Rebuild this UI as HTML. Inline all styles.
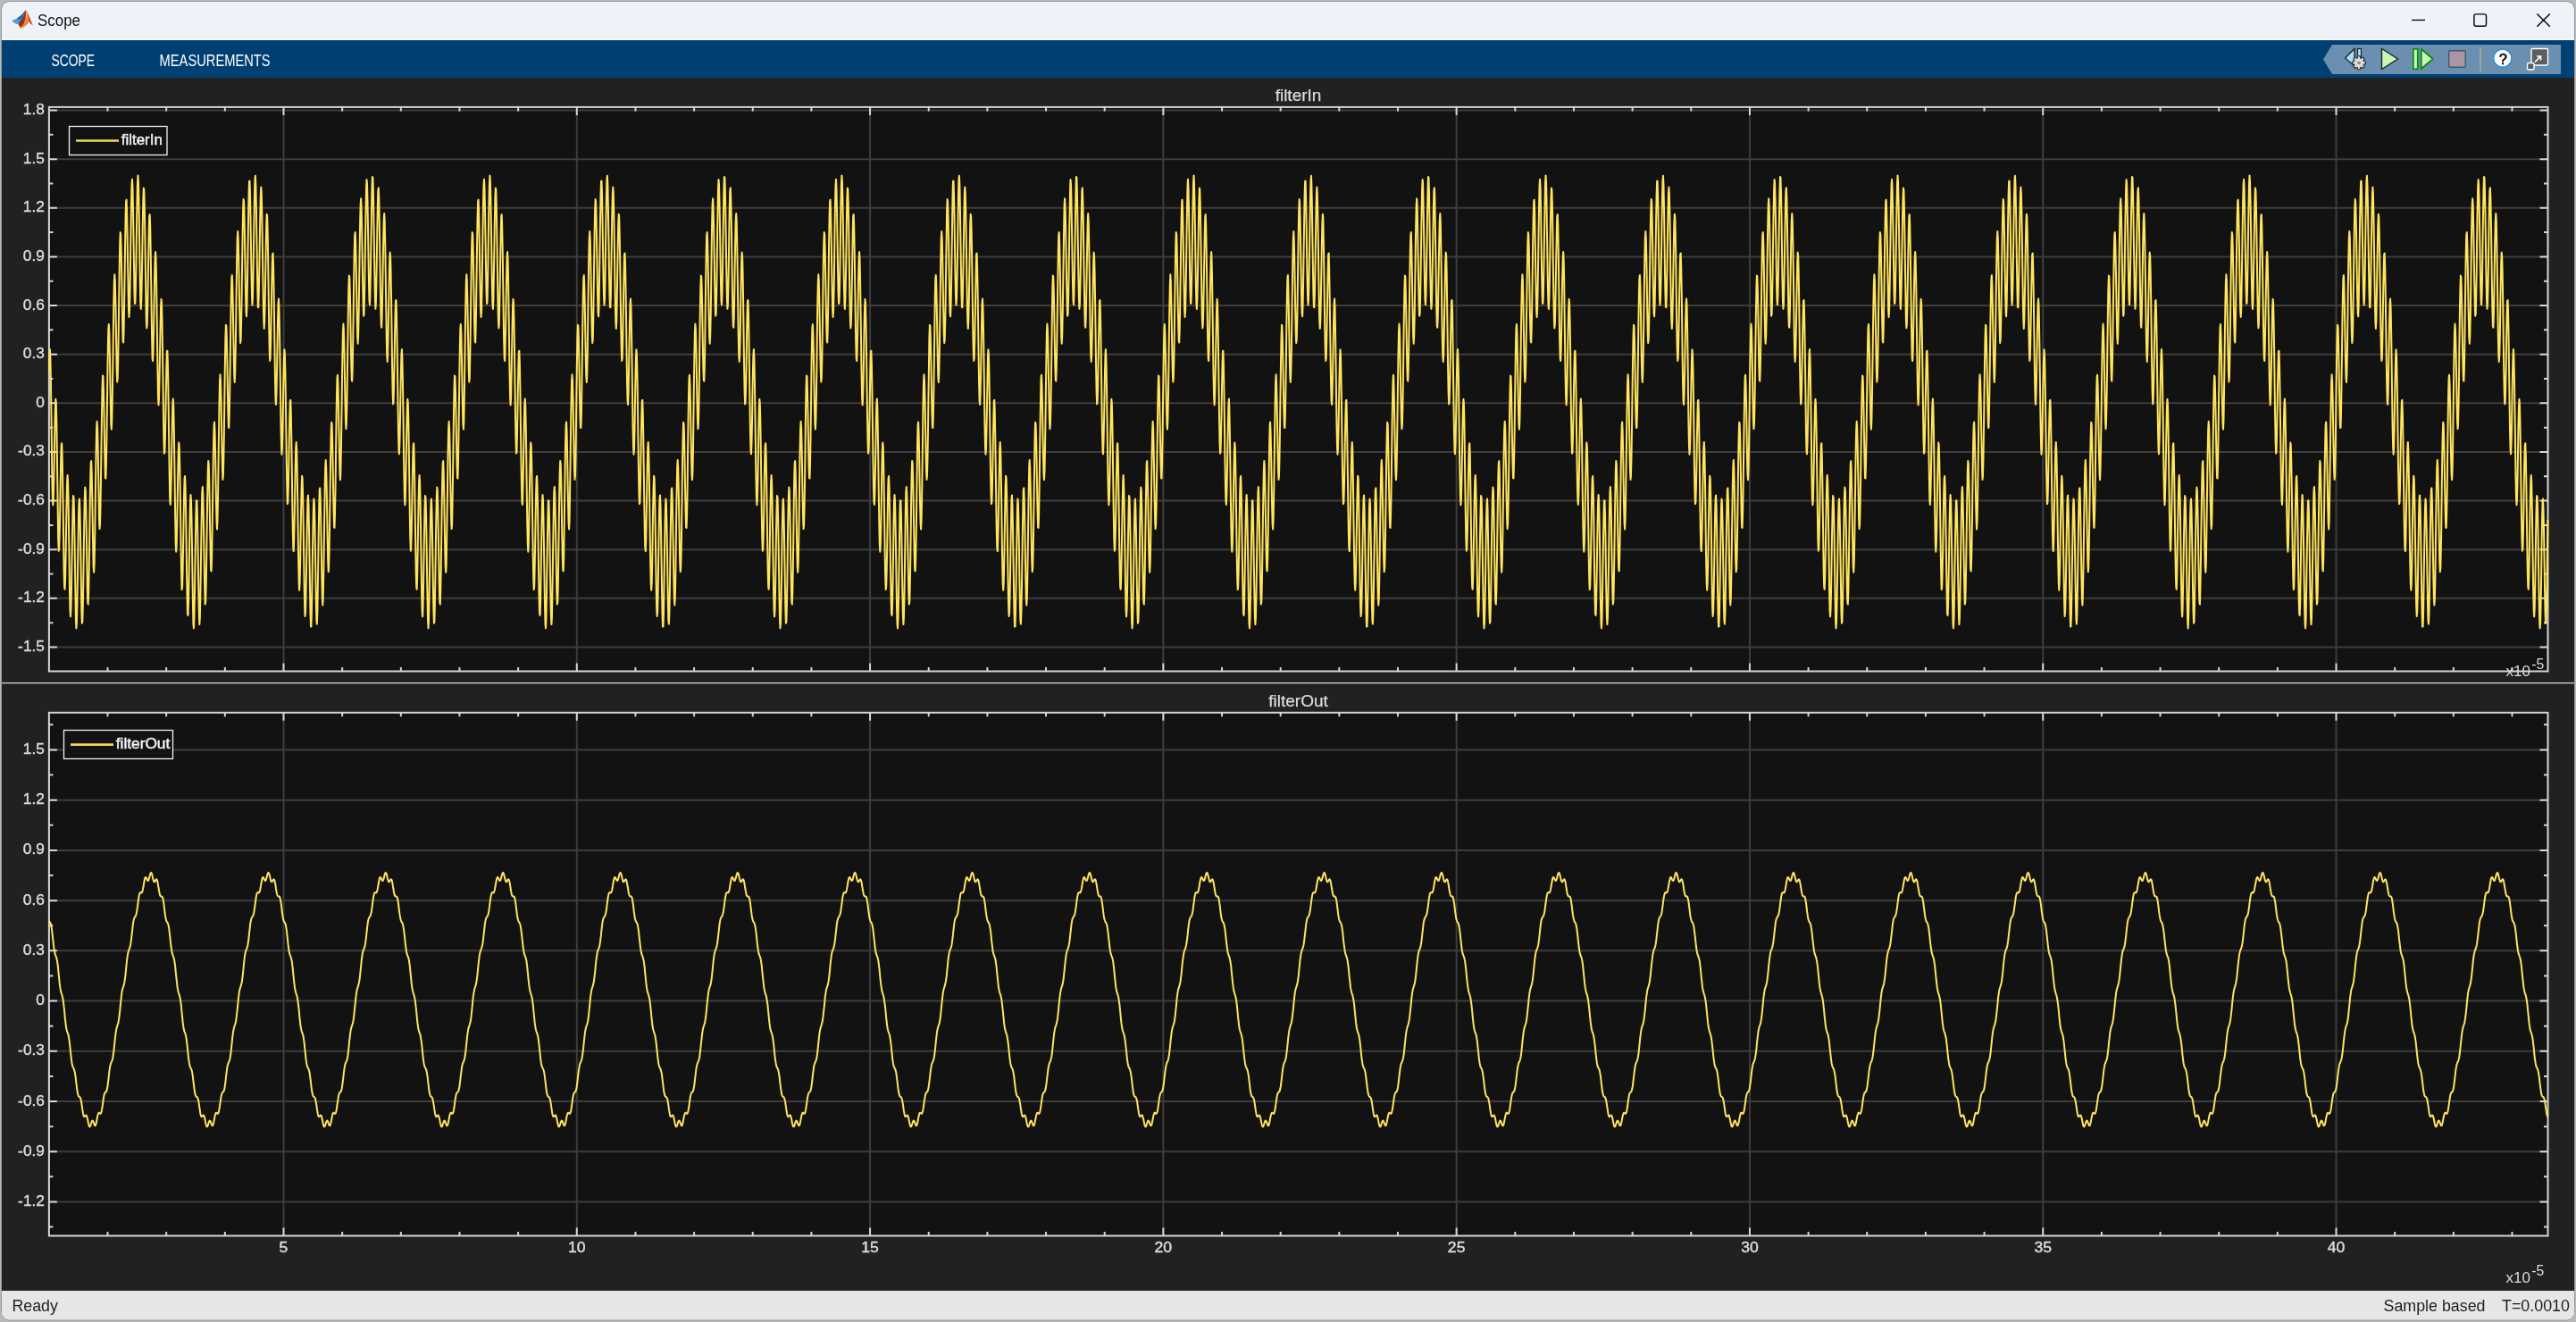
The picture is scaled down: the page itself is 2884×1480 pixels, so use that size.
<!DOCTYPE html>
<html><head><meta charset="utf-8"><title>Scope</title>
<style>
html,body{margin:0;padding:0;background:#b9b9b9;width:2884px;height:1480px;overflow:hidden}
svg{display:block}
text{font-family:"Liberation Sans",sans-serif}
</style></head><body>
<svg width="2884" height="1480" viewBox="0 0 2884 1480" style="will-change:transform">

<rect x="0" y="0" width="2884" height="1480" fill="#b9b9b9"/>
<rect x="1.5" y="1.5" width="2881" height="1476.5" rx="9" fill="#eef2f9" stroke="#9a9a9a" stroke-width="1"/>
<rect x="2" y="44" width="2880" height="1" fill="#fbfcfe"/>
<rect x="2" y="45" width="2880" height="42" fill="#003f73"/>
<rect x="2" y="87" width="2880" height="1358" fill="#212121"/>
<path d="M2 1445 H2882 V1468 Q2882 1477 2873 1477 H11 Q2 1477 2 1468 Z" fill="#e6e6e6"/>
<text x="42" y="29" font-size="17.5" fill="#111" textLength="48" lengthAdjust="spacingAndGlyphs">Scope</text>
<g stroke="none">
<polygon points="13,23.5 19,20.5 24.5,16.5 27.5,12.8 26,19 21.5,24.5 20.5,27.2 17.5,26.5" fill="#4aa0dc"/>
<polygon points="19,20.5 24.5,16.5 27.5,12.8 26,19 22,22.5" fill="#1f6db0"/>
<polygon points="27.5,12.8 29.3,11.2 28.8,20.5 27,26 23.6,32.6 21,28 20.5,27.2 21.5,24.5 26,19" fill="#9a2e1a"/>
<polygon points="29.3,11.2 31,17 32.5,24.5 30.5,27 26.5,30.5 23.6,32.6 27,26 28.8,20.5" fill="#e8843a"/>
<polygon points="29.3,11.2 33,19 36.7,28.5 34,26.5 32.5,24.5 31,17" fill="#d44a22"/>
<polygon points="28.9,13.5 29.9,13.5 30.2,20.5 28.8,20.5" fill="#f0d24a"/>
<polygon points="22.8,30.2 26.5,29.3 23.6,32.8" fill="#f0d24a"/>
</g>
<line x1="2700" y1="22.5" x2="2715" y2="22.5" stroke="#000" stroke-width="1.3"/>
<rect x="2769.9" y="15.9" width="13.6" height="13.4" rx="2" fill="none" stroke="#000" stroke-width="1.4"/>
<path d="M2840.4 15.4 L2854.8 29.8 M2854.8 15.4 L2840.4 29.8" stroke="#000" stroke-width="1.4"/>
<text x="57.5" y="74.1" font-size="17.6" fill="#ffffff" textLength="48.5" lengthAdjust="spacingAndGlyphs">SCOPE</text>
<text x="178.6" y="74.1" font-size="17.6" fill="#ffffff" textLength="124" lengthAdjust="spacingAndGlyphs">MEASUREMENTS</text>
<polygon points="2601,66.5 2611,50 2867,50 2867,83 2611,83" fill="#6a8fb1"/>
<g stroke="#222" stroke-width="1.2">
<polygon points="2636,54.5 2636,66.5 2626,65" fill="#a8dcf8" stroke-linejoin="round"/>
<polygon points="2625.5,65 2636,54.5 2636,74" fill="#a8dcf8"/>
<rect x="2639.5" y="54.5" width="4" height="10" fill="#a8dcf8"/>
</g>
<g transform="translate(2641,70.3)">
<path d="M5.35 -1.65 L7.49 -1.29 L7.49 1.29 L5.35 1.65 L4.95 2.61 L6.21 4.39 L4.39 6.21 L2.61 4.95 L1.65 5.35 L1.29 7.49 L-1.29 7.49 L-1.65 5.35 L-2.61 4.95 L-4.39 6.21 L-6.21 4.39 L-4.95 2.61 L-5.35 1.65 L-7.49 1.29 L-7.49 -1.29 L-5.35 -1.65 L-4.95 -2.61 L-6.21 -4.39 L-4.39 -6.21 L-2.61 -4.95 L-1.65 -5.35 L-1.29 -7.49 L1.29 -7.49 L1.65 -5.35 L2.61 -4.95 L4.39 -6.21 L6.21 -4.39 L4.95 -2.61 Z" fill="#dedede" stroke="#2a2a2a" stroke-width="1.1" stroke-linejoin="round"/>
<circle r="1.9" fill="#8c8c8c"/>
</g>
<polygon points="2666.5,54.5 2684.5,66 2666.5,77.5" fill="#c8f7b6" stroke="#222" stroke-width="1.4" stroke-linejoin="miter"/>
<rect x="2701.9" y="54.9" width="4.8" height="22.4" fill="#d4fcc4" stroke="#048c04" stroke-width="1.7"/>
<polygon points="2710.8,55 2723.8,66 2710.8,77" fill="#c8f7b6" stroke="#048c04" stroke-width="1.7"/>
<rect x="2741.7" y="56.7" width="18.6" height="18.6" rx="1.2" fill="#ab95a5" stroke="#3f5a6b" stroke-width="1.4"/>
<line x1="2777" y1="53.5" x2="2777" y2="80" stroke="#b0a8a0" stroke-width="1.5"/>
<circle cx="2801.8" cy="65.2" r="10" fill="#fff" stroke="#1c8be0" stroke-width="1.2"/>
<text x="2802.3" y="71.6" font-size="16.5" fill="#000" stroke="#000" stroke-width="0.5" text-anchor="middle">?</text>
<rect x="2834" y="54.5" width="18.5" height="18.5" rx="1.5" fill="#5e5e5e" stroke="#fff" stroke-width="1.4"/>
<rect x="2829.5" y="70.5" width="7.5" height="7.5" rx="1.5" fill="#5e5e5e" stroke="#fff" stroke-width="1.4"/>
<path d="M2838 69.5 L2844.5 63 M2840 63 H2844.5 V67.5" stroke="#fff" stroke-width="1.7" fill="none"/>
<rect x="2" y="764" width="2880" height="1.3" fill="#d4d4d4"/>
<rect x="54.9" y="119.9" width="2797.60" height="631.60" fill="#121212"/>
<line x1="54.9" y1="123.50" x2="2852.5" y2="123.50" stroke="#3d3d3d" stroke-width="2"/>
<line x1="54.9" y1="178.14" x2="2852.5" y2="178.14" stroke="#3d3d3d" stroke-width="2"/>
<line x1="54.9" y1="232.77" x2="2852.5" y2="232.77" stroke="#3d3d3d" stroke-width="2"/>
<line x1="54.9" y1="287.41" x2="2852.5" y2="287.41" stroke="#3d3d3d" stroke-width="2"/>
<line x1="54.9" y1="342.04" x2="2852.5" y2="342.04" stroke="#3d3d3d" stroke-width="2"/>
<line x1="54.9" y1="396.68" x2="2852.5" y2="396.68" stroke="#3d3d3d" stroke-width="2"/>
<line x1="54.9" y1="451.32" x2="2852.5" y2="451.32" stroke="#3d3d3d" stroke-width="2"/>
<line x1="54.9" y1="505.95" x2="2852.5" y2="505.95" stroke="#3d3d3d" stroke-width="2"/>
<line x1="54.9" y1="560.59" x2="2852.5" y2="560.59" stroke="#3d3d3d" stroke-width="2"/>
<line x1="54.9" y1="615.22" x2="2852.5" y2="615.22" stroke="#3d3d3d" stroke-width="2"/>
<line x1="54.9" y1="669.86" x2="2852.5" y2="669.86" stroke="#3d3d3d" stroke-width="2"/>
<line x1="54.9" y1="724.50" x2="2852.5" y2="724.50" stroke="#3d3d3d" stroke-width="2"/>
<line x1="317.49" y1="119.9" x2="317.49" y2="751.5" stroke="#3d3d3d" stroke-width="2"/>
<line x1="645.78" y1="119.9" x2="645.78" y2="751.5" stroke="#3d3d3d" stroke-width="2"/>
<line x1="974.07" y1="119.9" x2="974.07" y2="751.5" stroke="#3d3d3d" stroke-width="2"/>
<line x1="1302.36" y1="119.9" x2="1302.36" y2="751.5" stroke="#3d3d3d" stroke-width="2"/>
<line x1="1630.65" y1="119.9" x2="1630.65" y2="751.5" stroke="#3d3d3d" stroke-width="2"/>
<line x1="1958.94" y1="119.9" x2="1958.94" y2="751.5" stroke="#3d3d3d" stroke-width="2"/>
<line x1="2287.23" y1="119.9" x2="2287.23" y2="751.5" stroke="#3d3d3d" stroke-width="2"/>
<line x1="2615.52" y1="119.9" x2="2615.52" y2="751.5" stroke="#3d3d3d" stroke-width="2"/>
<rect x="54.9" y="119.9" width="2797.60" height="631.60" fill="none" stroke="#d6d6d6" stroke-width="2"/>
<path d="M54.9 123.50h9M2852.5 123.50h-9M54.9 150.82h4.5M2852.5 150.82h-4.5M54.9 178.14h9M2852.5 178.14h-9M54.9 205.45h4.5M2852.5 205.45h-4.5M54.9 232.77h9M2852.5 232.77h-9M54.9 260.09h4.5M2852.5 260.09h-4.5M54.9 287.41h9M2852.5 287.41h-9M54.9 314.73h4.5M2852.5 314.73h-4.5M54.9 342.04h9M2852.5 342.04h-9M54.9 369.36h4.5M2852.5 369.36h-4.5M54.9 396.68h9M2852.5 396.68h-9M54.9 424.00h4.5M2852.5 424.00h-4.5M54.9 451.32h9M2852.5 451.32h-9M54.9 478.63h4.5M2852.5 478.63h-4.5M54.9 505.95h9M2852.5 505.95h-9M54.9 533.27h4.5M2852.5 533.27h-4.5M54.9 560.59h9M2852.5 560.59h-9M54.9 587.91h4.5M2852.5 587.91h-4.5M54.9 615.22h9M2852.5 615.22h-9M54.9 642.54h4.5M2852.5 642.54h-4.5M54.9 669.86h9M2852.5 669.86h-9M54.9 697.18h4.5M2852.5 697.18h-4.5M54.9 724.50h9M2852.5 724.50h-9M120.52 119.9v4.5M120.52 751.5v-4.5M186.17 119.9v4.5M186.17 751.5v-4.5M251.83 119.9v4.5M251.83 751.5v-4.5M317.49 119.9v9M317.49 751.5v-9M383.15 119.9v4.5M383.15 751.5v-4.5M448.81 119.9v4.5M448.81 751.5v-4.5M514.46 119.9v4.5M514.46 751.5v-4.5M580.12 119.9v4.5M580.12 751.5v-4.5M645.78 119.9v9M645.78 751.5v-9M711.44 119.9v4.5M711.44 751.5v-4.5M777.10 119.9v4.5M777.10 751.5v-4.5M842.75 119.9v4.5M842.75 751.5v-4.5M908.41 119.9v4.5M908.41 751.5v-4.5M974.07 119.9v9M974.07 751.5v-9M1039.73 119.9v4.5M1039.73 751.5v-4.5M1105.39 119.9v4.5M1105.39 751.5v-4.5M1171.04 119.9v4.5M1171.04 751.5v-4.5M1236.70 119.9v4.5M1236.70 751.5v-4.5M1302.36 119.9v9M1302.36 751.5v-9M1368.02 119.9v4.5M1368.02 751.5v-4.5M1433.68 119.9v4.5M1433.68 751.5v-4.5M1499.33 119.9v4.5M1499.33 751.5v-4.5M1564.99 119.9v4.5M1564.99 751.5v-4.5M1630.65 119.9v9M1630.65 751.5v-9M1696.31 119.9v4.5M1696.31 751.5v-4.5M1761.97 119.9v4.5M1761.97 751.5v-4.5M1827.62 119.9v4.5M1827.62 751.5v-4.5M1893.28 119.9v4.5M1893.28 751.5v-4.5M1958.94 119.9v9M1958.94 751.5v-9M2024.60 119.9v4.5M2024.60 751.5v-4.5M2090.26 119.9v4.5M2090.26 751.5v-4.5M2155.91 119.9v4.5M2155.91 751.5v-4.5M2221.57 119.9v4.5M2221.57 751.5v-4.5M2287.23 119.9v9M2287.23 751.5v-9M2352.89 119.9v4.5M2352.89 751.5v-4.5M2418.55 119.9v4.5M2418.55 751.5v-4.5M2484.20 119.9v4.5M2484.20 751.5v-4.5M2549.86 119.9v4.5M2549.86 751.5v-4.5M2615.52 119.9v9M2615.52 751.5v-9M2681.18 119.9v4.5M2681.18 751.5v-4.5M2746.84 119.9v4.5M2746.84 751.5v-4.5M2812.49 119.9v4.5M2812.49 751.5v-4.5" stroke="#d6d6d6" stroke-width="2" fill="none"/>
<text x="49.9" y="128.00" font-size="16" fill="#dcdcdc" stroke="#dcdcdc" stroke-width="0.4" text-anchor="end" textLength="24.02" lengthAdjust="spacingAndGlyphs">1.8</text>
<text x="49.9" y="182.64" font-size="16" fill="#dcdcdc" stroke="#dcdcdc" stroke-width="0.4" text-anchor="end" textLength="24.02" lengthAdjust="spacingAndGlyphs">1.5</text>
<text x="49.9" y="237.27" font-size="16" fill="#dcdcdc" stroke="#dcdcdc" stroke-width="0.4" text-anchor="end" textLength="24.02" lengthAdjust="spacingAndGlyphs">1.2</text>
<text x="49.9" y="291.91" font-size="16" fill="#dcdcdc" stroke="#dcdcdc" stroke-width="0.4" text-anchor="end" textLength="24.02" lengthAdjust="spacingAndGlyphs">0.9</text>
<text x="49.9" y="346.54" font-size="16" fill="#dcdcdc" stroke="#dcdcdc" stroke-width="0.4" text-anchor="end" textLength="24.02" lengthAdjust="spacingAndGlyphs">0.6</text>
<text x="49.9" y="401.18" font-size="16" fill="#dcdcdc" stroke="#dcdcdc" stroke-width="0.4" text-anchor="end" textLength="24.02" lengthAdjust="spacingAndGlyphs">0.3</text>
<text x="49.9" y="455.82" font-size="16" fill="#dcdcdc" stroke="#dcdcdc" stroke-width="0.4" text-anchor="end" textLength="9.61" lengthAdjust="spacingAndGlyphs">0</text>
<text x="49.9" y="510.45" font-size="16" fill="#dcdcdc" stroke="#dcdcdc" stroke-width="0.4" text-anchor="end" textLength="29.77" lengthAdjust="spacingAndGlyphs">-0.3</text>
<text x="49.9" y="565.09" font-size="16" fill="#dcdcdc" stroke="#dcdcdc" stroke-width="0.4" text-anchor="end" textLength="29.77" lengthAdjust="spacingAndGlyphs">-0.6</text>
<text x="49.9" y="619.72" font-size="16" fill="#dcdcdc" stroke="#dcdcdc" stroke-width="0.4" text-anchor="end" textLength="29.77" lengthAdjust="spacingAndGlyphs">-0.9</text>
<text x="49.9" y="674.36" font-size="16" fill="#dcdcdc" stroke="#dcdcdc" stroke-width="0.4" text-anchor="end" textLength="29.77" lengthAdjust="spacingAndGlyphs">-1.2</text>
<text x="49.9" y="729.00" font-size="16" fill="#dcdcdc" stroke="#dcdcdc" stroke-width="0.4" text-anchor="end" textLength="29.77" lengthAdjust="spacingAndGlyphs">-1.5</text>
<text x="1453.5" y="113.3" font-size="19" fill="#dcdcdc" stroke="#dcdcdc" stroke-width="0.25" text-anchor="middle">filterIn</text>
<text x="2805.5" y="756.5" font-size="16.5" fill="#dcdcdc" textLength="27.5" lengthAdjust="spacingAndGlyphs">x10</text>
<text x="2834.2" y="748.9" font-size="16" fill="#dcdcdc" textLength="14" lengthAdjust="spacingAndGlyphs">-5</text>
<rect x="54.9" y="797.8" width="2797.60" height="585.70" fill="#121212"/>
<line x1="54.9" y1="839.47" x2="2852.5" y2="839.47" stroke="#3d3d3d" stroke-width="2"/>
<line x1="54.9" y1="895.69" x2="2852.5" y2="895.69" stroke="#3d3d3d" stroke-width="2"/>
<line x1="54.9" y1="951.92" x2="2852.5" y2="951.92" stroke="#3d3d3d" stroke-width="2"/>
<line x1="54.9" y1="1008.14" x2="2852.5" y2="1008.14" stroke="#3d3d3d" stroke-width="2"/>
<line x1="54.9" y1="1064.36" x2="2852.5" y2="1064.36" stroke="#3d3d3d" stroke-width="2"/>
<line x1="54.9" y1="1120.59" x2="2852.5" y2="1120.59" stroke="#3d3d3d" stroke-width="2"/>
<line x1="54.9" y1="1176.81" x2="2852.5" y2="1176.81" stroke="#3d3d3d" stroke-width="2"/>
<line x1="54.9" y1="1233.03" x2="2852.5" y2="1233.03" stroke="#3d3d3d" stroke-width="2"/>
<line x1="54.9" y1="1289.25" x2="2852.5" y2="1289.25" stroke="#3d3d3d" stroke-width="2"/>
<line x1="54.9" y1="1345.48" x2="2852.5" y2="1345.48" stroke="#3d3d3d" stroke-width="2"/>
<line x1="317.49" y1="797.8" x2="317.49" y2="1383.5" stroke="#3d3d3d" stroke-width="2"/>
<line x1="645.78" y1="797.8" x2="645.78" y2="1383.5" stroke="#3d3d3d" stroke-width="2"/>
<line x1="974.07" y1="797.8" x2="974.07" y2="1383.5" stroke="#3d3d3d" stroke-width="2"/>
<line x1="1302.36" y1="797.8" x2="1302.36" y2="1383.5" stroke="#3d3d3d" stroke-width="2"/>
<line x1="1630.65" y1="797.8" x2="1630.65" y2="1383.5" stroke="#3d3d3d" stroke-width="2"/>
<line x1="1958.94" y1="797.8" x2="1958.94" y2="1383.5" stroke="#3d3d3d" stroke-width="2"/>
<line x1="2287.23" y1="797.8" x2="2287.23" y2="1383.5" stroke="#3d3d3d" stroke-width="2"/>
<line x1="2615.52" y1="797.8" x2="2615.52" y2="1383.5" stroke="#3d3d3d" stroke-width="2"/>
<rect x="54.9" y="797.8" width="2797.60" height="585.70" fill="none" stroke="#d6d6d6" stroke-width="2"/>
<path d="M54.9 811.36h4.5M2852.5 811.36h-4.5M54.9 839.47h9M2852.5 839.47h-9M54.9 867.58h4.5M2852.5 867.58h-4.5M54.9 895.69h9M2852.5 895.69h-9M54.9 923.80h4.5M2852.5 923.80h-4.5M54.9 951.92h9M2852.5 951.92h-9M54.9 980.03h4.5M2852.5 980.03h-4.5M54.9 1008.14h9M2852.5 1008.14h-9M54.9 1036.25h4.5M2852.5 1036.25h-4.5M54.9 1064.36h9M2852.5 1064.36h-9M54.9 1092.47h4.5M2852.5 1092.47h-4.5M54.9 1120.59h9M2852.5 1120.59h-9M54.9 1148.70h4.5M2852.5 1148.70h-4.5M54.9 1176.81h9M2852.5 1176.81h-9M54.9 1204.92h4.5M2852.5 1204.92h-4.5M54.9 1233.03h9M2852.5 1233.03h-9M54.9 1261.14h4.5M2852.5 1261.14h-4.5M54.9 1289.25h9M2852.5 1289.25h-9M54.9 1317.37h4.5M2852.5 1317.37h-4.5M54.9 1345.48h9M2852.5 1345.48h-9M54.9 1373.59h4.5M2852.5 1373.59h-4.5M120.52 797.8v4.5M120.52 1383.5v-4.5M186.17 797.8v4.5M186.17 1383.5v-4.5M251.83 797.8v4.5M251.83 1383.5v-4.5M317.49 797.8v9M317.49 1383.5v-9M383.15 797.8v4.5M383.15 1383.5v-4.5M448.81 797.8v4.5M448.81 1383.5v-4.5M514.46 797.8v4.5M514.46 1383.5v-4.5M580.12 797.8v4.5M580.12 1383.5v-4.5M645.78 797.8v9M645.78 1383.5v-9M711.44 797.8v4.5M711.44 1383.5v-4.5M777.10 797.8v4.5M777.10 1383.5v-4.5M842.75 797.8v4.5M842.75 1383.5v-4.5M908.41 797.8v4.5M908.41 1383.5v-4.5M974.07 797.8v9M974.07 1383.5v-9M1039.73 797.8v4.5M1039.73 1383.5v-4.5M1105.39 797.8v4.5M1105.39 1383.5v-4.5M1171.04 797.8v4.5M1171.04 1383.5v-4.5M1236.70 797.8v4.5M1236.70 1383.5v-4.5M1302.36 797.8v9M1302.36 1383.5v-9M1368.02 797.8v4.5M1368.02 1383.5v-4.5M1433.68 797.8v4.5M1433.68 1383.5v-4.5M1499.33 797.8v4.5M1499.33 1383.5v-4.5M1564.99 797.8v4.5M1564.99 1383.5v-4.5M1630.65 797.8v9M1630.65 1383.5v-9M1696.31 797.8v4.5M1696.31 1383.5v-4.5M1761.97 797.8v4.5M1761.97 1383.5v-4.5M1827.62 797.8v4.5M1827.62 1383.5v-4.5M1893.28 797.8v4.5M1893.28 1383.5v-4.5M1958.94 797.8v9M1958.94 1383.5v-9M2024.60 797.8v4.5M2024.60 1383.5v-4.5M2090.26 797.8v4.5M2090.26 1383.5v-4.5M2155.91 797.8v4.5M2155.91 1383.5v-4.5M2221.57 797.8v4.5M2221.57 1383.5v-4.5M2287.23 797.8v9M2287.23 1383.5v-9M2352.89 797.8v4.5M2352.89 1383.5v-4.5M2418.55 797.8v4.5M2418.55 1383.5v-4.5M2484.20 797.8v4.5M2484.20 1383.5v-4.5M2549.86 797.8v4.5M2549.86 1383.5v-4.5M2615.52 797.8v9M2615.52 1383.5v-9M2681.18 797.8v4.5M2681.18 1383.5v-4.5M2746.84 797.8v4.5M2746.84 1383.5v-4.5M2812.49 797.8v4.5M2812.49 1383.5v-4.5" stroke="#d6d6d6" stroke-width="2" fill="none"/>
<text x="49.9" y="843.97" font-size="16" fill="#dcdcdc" stroke="#dcdcdc" stroke-width="0.4" text-anchor="end" textLength="24.02" lengthAdjust="spacingAndGlyphs">1.5</text>
<text x="49.9" y="900.19" font-size="16" fill="#dcdcdc" stroke="#dcdcdc" stroke-width="0.4" text-anchor="end" textLength="24.02" lengthAdjust="spacingAndGlyphs">1.2</text>
<text x="49.9" y="956.42" font-size="16" fill="#dcdcdc" stroke="#dcdcdc" stroke-width="0.4" text-anchor="end" textLength="24.02" lengthAdjust="spacingAndGlyphs">0.9</text>
<text x="49.9" y="1012.64" font-size="16" fill="#dcdcdc" stroke="#dcdcdc" stroke-width="0.4" text-anchor="end" textLength="24.02" lengthAdjust="spacingAndGlyphs">0.6</text>
<text x="49.9" y="1068.86" font-size="16" fill="#dcdcdc" stroke="#dcdcdc" stroke-width="0.4" text-anchor="end" textLength="24.02" lengthAdjust="spacingAndGlyphs">0.3</text>
<text x="49.9" y="1125.09" font-size="16" fill="#dcdcdc" stroke="#dcdcdc" stroke-width="0.4" text-anchor="end" textLength="9.61" lengthAdjust="spacingAndGlyphs">0</text>
<text x="49.9" y="1181.31" font-size="16" fill="#dcdcdc" stroke="#dcdcdc" stroke-width="0.4" text-anchor="end" textLength="29.77" lengthAdjust="spacingAndGlyphs">-0.3</text>
<text x="49.9" y="1237.53" font-size="16" fill="#dcdcdc" stroke="#dcdcdc" stroke-width="0.4" text-anchor="end" textLength="29.77" lengthAdjust="spacingAndGlyphs">-0.6</text>
<text x="49.9" y="1293.75" font-size="16" fill="#dcdcdc" stroke="#dcdcdc" stroke-width="0.4" text-anchor="end" textLength="29.77" lengthAdjust="spacingAndGlyphs">-0.9</text>
<text x="49.9" y="1349.98" font-size="16" fill="#dcdcdc" stroke="#dcdcdc" stroke-width="0.4" text-anchor="end" textLength="29.77" lengthAdjust="spacingAndGlyphs">-1.2</text>
<text x="1453.5" y="791" font-size="19" fill="#dcdcdc" stroke="#dcdcdc" stroke-width="0.25" text-anchor="middle">filterOut</text>
<text x="317.49" y="1402" font-size="16" fill="#dcdcdc" stroke="#dcdcdc" stroke-width="0.4" text-anchor="middle" textLength="9.79" lengthAdjust="spacingAndGlyphs">5</text>
<text x="645.78" y="1402" font-size="16" fill="#dcdcdc" stroke="#dcdcdc" stroke-width="0.4" text-anchor="middle" textLength="19.57" lengthAdjust="spacingAndGlyphs">10</text>
<text x="974.07" y="1402" font-size="16" fill="#dcdcdc" stroke="#dcdcdc" stroke-width="0.4" text-anchor="middle" textLength="19.57" lengthAdjust="spacingAndGlyphs">15</text>
<text x="1302.36" y="1402" font-size="16" fill="#dcdcdc" stroke="#dcdcdc" stroke-width="0.4" text-anchor="middle" textLength="19.57" lengthAdjust="spacingAndGlyphs">20</text>
<text x="1630.65" y="1402" font-size="16" fill="#dcdcdc" stroke="#dcdcdc" stroke-width="0.4" text-anchor="middle" textLength="19.57" lengthAdjust="spacingAndGlyphs">25</text>
<text x="1958.94" y="1402" font-size="16" fill="#dcdcdc" stroke="#dcdcdc" stroke-width="0.4" text-anchor="middle" textLength="19.57" lengthAdjust="spacingAndGlyphs">30</text>
<text x="2287.23" y="1402" font-size="16" fill="#dcdcdc" stroke="#dcdcdc" stroke-width="0.4" text-anchor="middle" textLength="19.57" lengthAdjust="spacingAndGlyphs">35</text>
<text x="2615.52" y="1402" font-size="16" fill="#dcdcdc" stroke="#dcdcdc" stroke-width="0.4" text-anchor="middle" textLength="19.57" lengthAdjust="spacingAndGlyphs">40</text>
<text x="2805.5" y="1435.6" font-size="16.5" fill="#dcdcdc" textLength="27.5" lengthAdjust="spacingAndGlyphs">x10</text>
<text x="2834.2" y="1428.0" font-size="16" fill="#dcdcdc" textLength="14" lengthAdjust="spacingAndGlyphs">-5</text>
<polyline fill="none" stroke="#ffe45e" stroke-width="2" stroke-linejoin="round" points="54.9,416.2 55.4,396.8 55.9,391.1 56.4,401.2 56.9,425.7 57.4,460.4 57.9,498.6 58.3,532.7 58.8,556.5 59.3,565.4 59.8,558.6 60.3,538.4 60.8,510.1 61.3,480.8 61.8,457.6 62.3,446.7 62.8,451.1 63.3,470.9 63.8,502.5 64.3,539.9 64.8,575.7 65.2,603.1 65.7,616.8 66.2,614.6 66.7,597.8 67.2,570.9 67.7,540.5 68.2,513.9 68.7,497.7 69.2,496.2 69.7,510.3 70.2,537.8 70.7,573.3 71.2,609.7 71.6,639.7 72.1,657.5 72.6,659.8 73.1,646.7 73.6,621.6 74.1,590.5 74.6,560.9 75.1,539.7 75.6,531.9 76.1,539.9 76.6,562.4 77.1,594.9 77.6,630.7 78.0,662.5 78.5,683.8 79.0,690.3 79.5,680.9 80.0,658.1 80.5,627.1 81.0,594.9 81.5,569.0 82.0,555.1 82.5,556.6 83.0,573.4 83.5,601.9 84.0,636.1 84.5,668.8 84.9,693.0 85.4,703.4 85.9,697.9 86.4,677.7 86.9,647.4 87.4,613.5 87.9,583.4 88.4,563.7 88.9,558.5 89.4,569.1 89.9,592.9 90.4,624.7 90.9,657.4 91.3,683.7 91.8,697.8 92.3,696.3 92.8,679.4 93.3,650.4 93.8,615.6 94.3,582.1 94.8,557.0 95.3,545.4 95.8,549.5 96.3,568.1 96.8,596.7 97.3,628.6 97.7,656.6 98.2,674.0 98.7,676.6 99.2,663.4 99.7,636.6 100.2,601.8 100.7,565.8 101.2,536.1 101.7,518.4 102.2,516.1 102.7,529.1 103.2,553.9 103.7,584.5 104.2,613.5 104.6,634.0 105.1,640.8 105.6,631.7 106.1,608.0 106.6,574.2 107.1,536.8 107.6,503.3 108.1,480.2 108.6,471.8 109.1,479.0 109.6,499.6 110.1,528.2 110.6,557.8 111.0,581.1 111.5,592.1 112.0,587.7 112.5,567.8 113.0,536.1 113.5,498.5 114.0,462.3 114.5,434.5 115.0,420.4 115.5,422.0 116.0,438.2 116.5,464.4 117.0,494.1 117.5,519.8 117.9,535.1 118.4,535.6 118.9,520.4 119.4,491.8 119.9,455.1 120.4,417.4 120.9,386.0 121.4,366.8 121.9,363.0 122.4,374.6 122.9,398.1 123.4,427.4 123.9,455.3 124.3,474.7 124.8,480.6 125.3,470.6 125.8,446.2 126.3,411.6 126.8,373.7 127.3,339.6 127.8,316.1 128.3,307.3 128.8,314.4 129.3,334.8 129.8,363.4 130.3,393.0 130.7,416.4 131.2,427.6 131.7,423.5 132.2,404.0 132.7,372.8 133.2,335.7 133.7,300.2 134.2,273.3 134.7,260.0 135.2,262.5 135.7,279.7 136.2,307.0 136.7,337.9 137.2,365.0 137.6,381.6 138.1,383.6 138.6,369.9 139.1,343.0 139.6,308.0 140.1,272.1 140.6,242.6 141.1,225.3 141.6,223.6 142.1,237.3 142.6,262.9 143.1,294.5 143.6,324.7 144.0,346.6 144.5,354.9 145.0,347.5 145.5,325.6 146.0,293.8 146.5,258.5 147.0,227.3 147.5,206.7 148.0,200.8 148.5,210.9 149.0,234.4 149.5,266.0 150.0,298.8 150.4,325.4 150.9,339.9 151.4,339.1 151.9,323.0 152.4,295.2 152.9,261.6 153.4,229.6 153.9,206.1 154.4,196.4 154.9,202.5 155.4,223.4 155.9,254.4 156.4,288.9 156.9,319.7 157.3,340.1 157.8,345.9 158.3,336.0 158.8,312.8 159.3,281.7 159.8,249.6 160.3,223.9 160.8,210.5 161.3,212.7 161.8,230.3 162.3,259.8 162.8,295.3 163.3,329.4 163.7,355.1 164.2,367.3 164.7,363.7 165.2,345.8 165.7,317.8 166.2,286.4 166.7,259.0 167.2,242.1 167.7,240.1 168.2,253.9 168.7,281.1 169.2,316.5 169.7,352.9 170.2,383.2 170.6,401.3 171.1,404.1 171.6,391.6 172.1,367.2 172.6,337.1 173.1,308.5 173.6,288.5 174.1,282.1 174.6,291.5 175.1,315.6 175.6,349.8 176.1,387.5 176.6,421.3 177.0,444.8 177.5,453.5 178.0,446.6 178.5,426.2 179.0,397.9 179.5,368.6 180.0,345.5 180.5,334.7 181.0,339.4 181.5,359.4 182.0,391.3 182.5,429.1 183.0,465.4 183.4,493.3 183.9,507.6 184.4,506.0 184.9,490.0 185.4,463.8 185.9,434.2 186.4,408.5 186.9,393.2 187.4,392.7 187.9,407.9 188.4,436.5 188.9,473.1 189.4,510.7 189.9,542.1 190.3,561.2 190.8,564.9 191.3,553.2 191.8,529.6 192.3,500.1 192.8,472.0 193.3,452.4 193.8,446.4 194.3,456.1 194.8,480.4 195.3,514.6 195.8,552.4 196.3,586.1 196.7,609.3 197.2,617.8 197.7,610.5 198.2,589.7 198.7,560.8 199.2,530.8 199.7,507.1 200.2,495.4 200.7,499.2 201.2,518.2 201.7,549.1 202.2,585.7 202.7,620.7 203.2,647.3 203.6,660.1 204.1,657.0 204.6,639.4 205.1,611.5 205.6,580.1 206.1,552.6 206.6,535.4 207.1,532.9 207.6,546.0 208.1,572.4 208.6,606.8 209.1,642.1 209.6,671.1 210.0,687.8 210.5,688.9 211.0,674.6 211.5,648.3 212.0,616.1 212.5,585.3 213.0,562.8 213.5,553.9 214.0,560.6 214.5,581.8 215.0,613.0 215.5,647.6 216.0,678.1 216.4,698.1 216.9,703.3 217.4,692.6 217.9,668.5 218.4,636.1 218.9,602.7 219.4,575.4 219.9,560.2 220.4,560.4 220.9,575.8 221.4,603.0 221.9,635.9 222.4,667.2 222.9,690.0 223.3,699.1 223.8,692.3 224.3,670.8 224.8,639.1 225.3,603.9 225.8,572.5 226.3,551.4 226.8,545.0 227.3,554.3 227.8,576.8 228.3,607.3 228.8,638.8 229.3,663.8 229.7,676.6 230.2,673.9 230.7,655.7 231.2,625.6 231.7,589.5 232.2,554.9 232.7,528.6 233.2,515.9 233.7,518.9 234.2,536.3 234.7,563.8 235.2,594.7 235.7,621.6 236.1,637.9 236.6,639.5 237.1,625.3 237.6,597.6 238.1,561.7 238.6,524.8 239.1,494.2 239.6,475.6 240.1,472.5 240.6,484.6 241.1,508.6 241.6,538.4 242.1,566.6 242.6,586.3 243.0,592.4 243.5,582.7 244.0,558.3 244.5,523.8 245.0,485.9 245.5,451.8 246.0,428.1 246.5,419.2 247.0,425.9 247.5,446.1 248.0,474.3 248.5,503.4 249.0,526.3 249.4,537.0 249.9,532.3 250.4,512.2 250.9,480.2 251.4,442.3 251.9,405.9 252.4,378.0 252.9,363.8 253.4,365.3 253.9,381.4 254.4,407.6 254.9,437.3 255.4,463.0 255.9,478.4 256.3,479.0 256.8,463.9 257.3,435.5 257.8,399.0 258.3,361.5 258.8,330.4 259.3,311.4 259.8,308.0 260.3,319.9 260.8,343.8 261.3,373.5 261.8,401.8 262.3,421.7 262.7,428.0 263.2,418.6 263.7,394.7 264.2,360.7 264.7,323.4 265.2,290.0 265.7,267.1 266.2,259.0 266.7,266.8 267.2,288.0 267.7,317.3 268.2,347.7 268.7,371.9 269.1,384.0 269.6,380.7 270.1,362.2 270.6,331.9 271.1,295.8 271.6,261.2 272.1,235.2 272.6,222.9 273.1,226.5 273.6,244.7 274.1,273.1 274.6,305.1 275.1,333.2 275.6,351.0 276.0,354.2 276.5,341.6 277.0,315.8 277.5,282.0 278.0,247.3 278.5,219.0 279.0,203.0 279.5,202.5 280.0,217.4 280.5,244.3 281.0,277.2 281.5,308.7 282.0,331.8 282.4,341.4 282.9,335.3 283.4,314.8 283.9,284.3 284.4,250.4 284.9,220.5 285.4,201.2 285.9,196.7 286.4,208.0 286.9,232.8 287.4,265.9 287.9,300.0 288.4,327.9 288.8,343.8 289.3,344.3 289.8,329.5 290.3,303.0 290.8,270.7 291.3,240.0 291.8,217.9 292.3,209.5 292.8,216.9 293.3,239.0 293.8,271.3 294.3,307.2 294.8,339.2 295.3,360.8 295.7,367.9 296.2,359.2 296.7,337.3 297.2,307.3 297.7,276.4 298.2,251.9 298.7,239.7 299.2,243.0 299.7,261.7 300.2,292.3 300.7,328.9 301.2,364.1 301.7,390.8 302.1,404.0 302.6,401.5 303.1,384.5 303.6,357.5 304.1,327.0 304.6,300.6 305.1,284.6 305.6,283.5 306.1,298.1 306.6,326.2 307.1,362.3 307.6,399.6 308.1,430.6 308.6,449.4 309.0,452.9 309.5,441.1 310.0,417.4 310.5,387.8 311.0,359.8 311.5,340.3 312.0,334.5 312.5,344.4 313.0,369.0 313.5,403.6 314.0,441.8 314.5,476.0 315.0,499.8 315.4,508.8 315.9,502.1 316.4,482.1 316.9,454.0 317.4,424.8 317.9,402.0 318.4,391.3 318.9,396.1 319.4,416.2 319.9,448.1 320.4,485.9 320.9,522.2 321.4,550.0 321.8,564.2 322.3,562.6 322.8,546.4 323.3,520.0 323.8,490.2 324.3,464.2 324.8,448.7 325.3,447.9 325.8,462.7 326.3,491.0 326.8,527.2 327.3,564.4 327.8,595.3 328.3,613.9 328.7,617.1 329.2,604.8 329.7,580.7 330.2,550.6 330.7,521.9 331.2,501.6 331.7,494.9 332.2,503.9 332.7,527.4 333.2,561.0 333.7,597.9 334.2,630.8 334.7,653.2 335.1,660.8 335.6,652.6 336.1,630.9 336.6,601.1 337.1,570.2 337.6,545.4 338.1,532.8 338.6,535.5 339.1,553.5 339.6,583.3 340.1,618.8 340.6,652.8 341.1,678.2 341.5,689.9 342.0,685.7 342.5,666.9 343.0,637.9 343.5,605.3 344.0,576.5 344.5,558.1 345.0,554.4 345.5,566.2 346.0,591.4 346.5,624.5 347.0,658.6 347.5,686.2 348.0,701.6 348.4,701.5 348.9,685.9 349.4,658.3 349.9,624.7 350.4,592.6 350.9,568.8 351.4,558.5 351.9,563.9 352.4,583.8 352.9,613.6 353.4,646.9 353.9,676.1 354.4,694.7 354.8,698.6 355.3,686.6 355.8,661.1 356.3,627.4 356.8,592.6 357.3,564.1 357.8,547.6 358.3,546.4 358.8,560.5 359.3,586.4 359.8,618.1 360.3,648.2 360.8,669.7 361.3,677.5 361.7,669.5 362.2,646.8 362.7,613.9 363.2,577.5 363.7,544.9 364.2,522.7 364.7,515.1 365.2,523.2 365.7,544.7 366.2,574.1 366.7,604.4 367.2,628.5 367.7,640.2 368.1,636.5 368.6,617.3 369.1,586.2 369.6,549.2 370.1,513.6 370.6,486.4 371.1,472.8 371.6,474.9 372.1,491.5 372.6,518.2 373.1,548.3 373.6,574.4 374.1,590.1 374.5,590.9 375.0,576.0 375.5,547.7 376.0,511.2 376.5,473.7 377.0,442.5 377.5,423.4 378.0,419.7 378.5,431.4 379.0,454.9 379.5,484.2 380.0,512.1 380.5,531.5 381.0,537.2 381.4,527.2 381.9,502.5 382.4,467.8 382.9,429.7 383.4,395.4 383.9,371.6 384.4,362.5 384.9,369.2 385.4,389.3 385.9,417.5 386.4,446.6 386.9,469.6 387.4,480.3 387.8,475.7 388.3,455.7 388.8,423.9 389.3,386.2 389.8,350.1 390.3,322.5 390.8,308.5 391.3,310.3 391.8,326.8 392.3,353.4 392.8,383.5 393.3,409.7 393.8,425.5 394.2,426.6 394.7,412.1 395.2,384.2 395.7,348.3 396.2,311.4 396.7,280.9 397.2,262.7 397.7,259.9 398.2,272.6 398.7,297.2 399.2,327.7 399.7,356.8 400.2,377.5 400.7,384.7 401.1,376.2 401.6,353.2 402.1,320.1 402.6,283.7 403.1,251.3 403.6,229.4 404.1,222.3 404.6,231.1 405.1,253.4 405.6,283.8 406.1,315.3 406.6,340.6 407.1,353.8 407.5,351.7 408.0,334.3 408.5,305.1 409.0,270.2 409.5,236.9 410.0,212.1 410.5,201.0 411.0,205.8 411.5,225.3 412.0,255.0 412.5,288.2 413.0,317.6 413.5,336.7 414.0,341.2 414.4,329.9 414.9,305.4 415.4,273.0 415.9,239.6 416.4,212.6 416.9,197.9 417.4,198.7 417.9,215.0 418.4,243.3 418.9,277.5 419.4,310.3 419.9,334.8 420.4,345.7 420.8,340.9 421.3,321.7 421.8,292.5 422.3,260.0 422.8,231.4 423.3,213.4 423.8,210.2 424.3,222.8 424.8,249.0 425.3,283.2 425.8,318.6 426.3,347.8 426.8,364.9 427.2,366.7 427.7,353.1 428.2,327.8 428.7,296.8 429.2,267.2 429.7,246.3 430.2,239.0 430.7,247.6 431.2,270.8 431.7,304.2 432.2,341.1 432.7,374.2 433.2,396.9 433.7,405.0 434.1,397.3 434.6,376.3 435.1,347.4 435.6,317.4 436.1,293.8 436.6,282.5 437.1,286.6 437.6,306.2 438.1,337.6 438.6,375.0 439.1,410.9 439.6,438.4 440.1,452.4 440.5,450.5 441.0,434.2 441.5,407.8 442.0,378.0 442.5,352.1 443.0,336.7 443.5,336.0 444.0,351.2 444.5,379.7 445.0,416.3 445.5,453.9 446.0,485.3 446.5,504.5 446.9,508.3 447.4,496.7 447.9,473.3 448.4,444.0 448.9,416.2 449.4,396.8 449.9,391.1 450.4,401.2 450.9,425.7 451.4,460.4 451.9,498.6 452.4,532.7 452.9,556.5 453.4,565.4 453.8,558.6 454.3,538.4 454.8,510.1 455.3,480.8 455.8,457.6 456.3,446.7 456.8,451.1 457.3,470.9 457.8,502.5 458.3,539.9 458.8,575.7 459.3,603.1 459.8,616.8 460.2,614.6 460.7,597.8 461.2,570.9 461.7,540.5 462.2,513.9 462.7,497.7 463.2,496.2 463.7,510.3 464.2,537.8 464.7,573.3 465.2,609.7 465.7,639.7 466.2,657.5 466.7,659.8 467.1,646.7 467.6,621.6 468.1,590.5 468.6,560.9 469.1,539.7 469.6,531.9 470.1,539.9 470.6,562.4 471.1,594.9 471.6,630.7 472.1,662.5 472.6,683.8 473.1,690.3 473.5,680.9 474.0,658.1 474.5,627.1 475.0,594.9 475.5,569.0 476.0,555.1 476.5,556.6 477.0,573.4 477.5,601.9 478.0,636.1 478.5,668.8 479.0,693.0 479.5,703.4 479.9,697.9 480.4,677.7 480.9,647.4 481.4,613.5 481.9,583.4 482.4,563.7 482.9,558.5 483.4,569.1 483.9,592.9 484.4,624.7 484.9,657.4 485.4,683.7 485.9,697.8 486.4,696.3 486.8,679.4 487.3,650.4 487.8,615.6 488.3,582.1 488.8,557.0 489.3,545.4 489.8,549.5 490.3,568.1 490.8,596.7 491.3,628.6 491.8,656.6 492.3,674.0 492.8,676.6 493.2,663.4 493.7,636.6 494.2,601.8 494.7,565.8 495.2,536.1 495.7,518.4 496.2,516.1 496.7,529.1 497.2,553.9 497.7,584.5 498.2,613.5 498.7,634.0 499.2,640.8 499.7,631.7 500.1,608.0 500.6,574.2 501.1,536.8 501.6,503.3 502.1,480.2 502.6,471.8 503.1,479.0 503.6,499.6 504.1,528.2 504.6,557.8 505.1,581.1 505.6,592.1 506.1,587.7 506.5,567.8 507.0,536.1 507.5,498.5 508.0,462.3 508.5,434.5 509.0,420.4 509.5,422.0 510.0,438.2 510.5,464.4 511.0,494.1 511.5,519.8 512.0,535.1 512.5,535.6 512.9,520.4 513.4,491.8 513.9,455.1 514.4,417.4 514.9,386.0 515.4,366.8 515.9,363.0 516.4,374.6 516.9,398.1 517.4,427.4 517.9,455.3 518.4,474.7 518.9,480.6 519.4,470.6 519.8,446.2 520.3,411.6 520.8,373.7 521.3,339.6 521.8,316.1 522.3,307.3 522.8,314.4 523.3,334.8 523.8,363.4 524.3,393.0 524.8,416.4 525.3,427.6 525.8,423.5 526.2,404.0 526.7,372.8 527.2,335.7 527.7,300.2 528.2,273.3 528.7,260.0 529.2,262.5 529.7,279.7 530.2,307.0 530.7,337.9 531.2,365.0 531.7,381.6 532.2,383.6 532.6,369.9 533.1,343.0 533.6,308.0 534.1,272.1 534.6,242.6 535.1,225.3 535.6,223.6 536.1,237.3 536.6,262.9 537.1,294.5 537.6,324.7 538.1,346.6 538.6,354.9 539.1,347.5 539.5,325.6 540.0,293.8 540.5,258.5 541.0,227.3 541.5,206.7 542.0,200.8 542.5,210.9 543.0,234.4 543.5,266.0 544.0,298.8 544.5,325.4 545.0,339.9 545.5,339.1 545.9,323.0 546.4,295.2 546.9,261.6 547.4,229.6 547.9,206.1 548.4,196.4 548.9,202.5 549.4,223.4 549.9,254.4 550.4,288.9 550.9,319.7 551.4,340.1 551.9,345.9 552.4,336.0 552.8,312.8 553.3,281.7 553.8,249.6 554.3,223.9 554.8,210.5 555.3,212.7 555.8,230.3 556.3,259.8 556.8,295.3 557.3,329.4 557.8,355.1 558.3,367.3 558.8,363.7 559.2,345.8 559.7,317.8 560.2,286.4 560.7,259.0 561.2,242.1 561.7,240.1 562.2,253.9 562.7,281.1 563.2,316.5 563.7,352.9 564.2,383.2 564.7,401.3 565.2,404.1 565.6,391.6 566.1,367.2 566.6,337.1 567.1,308.5 567.6,288.5 568.1,282.1 568.6,291.5 569.1,315.6 569.6,349.8 570.1,387.5 570.6,421.3 571.1,444.8 571.6,453.5 572.1,446.6 572.5,426.2 573.0,397.9 573.5,368.6 574.0,345.5 574.5,334.7 575.0,339.4 575.5,359.4 576.0,391.3 576.5,429.1 577.0,465.4 577.5,493.3 578.0,507.6 578.5,506.0 578.9,490.0 579.4,463.8 579.9,434.2 580.4,408.5 580.9,393.2 581.4,392.7 581.9,407.9 582.4,436.5 582.9,473.1 583.4,510.7 583.9,542.1 584.4,561.2 584.9,564.9 585.3,553.2 585.8,529.6 586.3,500.1 586.8,472.0 587.3,452.4 587.8,446.4 588.3,456.1 588.8,480.4 589.3,514.6 589.8,552.4 590.3,586.1 590.8,609.3 591.3,617.8 591.8,610.5 592.2,589.7 592.7,560.8 593.2,530.8 593.7,507.1 594.2,495.4 594.7,499.2 595.2,518.2 595.7,549.1 596.2,585.7 596.7,620.7 597.2,647.3 597.7,660.1 598.2,657.0 598.6,639.4 599.1,611.5 599.6,580.1 600.1,552.6 600.6,535.4 601.1,532.9 601.6,546.0 602.1,572.4 602.6,606.8 603.1,642.1 603.6,671.1 604.1,687.8 604.6,688.9 605.1,674.6 605.5,648.3 606.0,616.1 606.5,585.3 607.0,562.8 607.5,553.9 608.0,560.6 608.5,581.8 609.0,613.0 609.5,647.6 610.0,678.1 610.5,698.1 611.0,703.3 611.5,692.6 611.9,668.5 612.4,636.1 612.9,602.7 613.4,575.4 613.9,560.2 614.4,560.4 614.9,575.8 615.4,603.0 615.9,635.9 616.4,667.2 616.9,690.0 617.4,699.1 617.9,692.3 618.3,670.8 618.8,639.1 619.3,603.9 619.8,572.5 620.3,551.4 620.8,545.0 621.3,554.3 621.8,576.8 622.3,607.3 622.8,638.8 623.3,663.8 623.8,676.6 624.3,673.9 624.8,655.7 625.2,625.6 625.7,589.5 626.2,554.9 626.7,528.6 627.2,515.9 627.7,518.9 628.2,536.3 628.7,563.8 629.2,594.7 629.7,621.6 630.2,637.9 630.7,639.5 631.2,625.3 631.6,597.6 632.1,561.7 632.6,524.8 633.1,494.2 633.6,475.6 634.1,472.5 634.6,484.6 635.1,508.6 635.6,538.4 636.1,566.6 636.6,586.3 637.1,592.4 637.6,582.7 638.0,558.3 638.5,523.8 639.0,485.9 639.5,451.8 640.0,428.1 640.5,419.2 641.0,425.9 641.5,446.1 642.0,474.3 642.5,503.4 643.0,526.3 643.5,537.0 644.0,532.3 644.5,512.2 644.9,480.2 645.4,442.3 645.9,405.9 646.4,378.0 646.9,363.8 647.4,365.3 647.9,381.4 648.4,407.6 648.9,437.3 649.4,463.0 649.9,478.4 650.4,479.0 650.9,463.9 651.3,435.5 651.8,399.0 652.3,361.5 652.8,330.4 653.3,311.4 653.8,308.0 654.3,319.9 654.8,343.8 655.3,373.5 655.8,401.8 656.3,421.7 656.8,428.0 657.3,418.6 657.8,394.7 658.2,360.7 658.7,323.4 659.2,290.0 659.7,267.1 660.2,259.0 660.7,266.8 661.2,288.0 661.7,317.3 662.2,347.7 662.7,371.9 663.2,384.0 663.7,380.7 664.2,362.2 664.6,331.9 665.1,295.8 665.6,261.2 666.1,235.2 666.6,222.9 667.1,226.5 667.6,244.7 668.1,273.1 668.6,305.1 669.1,333.2 669.6,351.0 670.1,354.2 670.6,341.6 671.0,315.8 671.5,282.0 672.0,247.3 672.5,219.0 673.0,203.0 673.5,202.5 674.0,217.4 674.5,244.3 675.0,277.2 675.5,308.7 676.0,331.8 676.5,341.4 677.0,335.3 677.5,314.8 677.9,284.3 678.4,250.4 678.9,220.5 679.4,201.2 679.9,196.7 680.4,208.0 680.9,232.8 681.4,265.9 681.9,300.0 682.4,327.9 682.9,343.8 683.4,344.3 683.9,329.5 684.3,303.0 684.8,270.7 685.3,240.0 685.8,217.9 686.3,209.5 686.8,216.9 687.3,239.0 687.8,271.3 688.3,307.2 688.8,339.2 689.3,360.8 689.8,367.9 690.3,359.2 690.7,337.3 691.2,307.3 691.7,276.4 692.2,251.9 692.7,239.7 693.2,243.0 693.7,261.7 694.2,292.3 694.7,328.9 695.2,364.1 695.7,390.8 696.2,404.0 696.7,401.5 697.2,384.5 697.6,357.5 698.1,327.0 698.6,300.6 699.1,284.6 699.6,283.5 700.1,298.1 700.6,326.2 701.1,362.3 701.6,399.6 702.1,430.6 702.6,449.4 703.1,452.9 703.6,441.1 704.0,417.4 704.5,387.8 705.0,359.8 705.5,340.3 706.0,334.5 706.5,344.4 707.0,369.0 707.5,403.6 708.0,441.8 708.5,476.0 709.0,499.8 709.5,508.8 710.0,502.1 710.5,482.1 710.9,454.0 711.4,424.8 711.9,402.0 712.4,391.3 712.9,396.1 713.4,416.2 713.9,448.1 714.4,485.9 714.9,522.2 715.4,550.0 715.9,564.2 716.4,562.6 716.9,546.4 717.3,520.0 717.8,490.2 718.3,464.2 718.8,448.7 719.3,447.9 719.8,462.7 720.3,491.0 720.8,527.2 721.3,564.4 721.8,595.3 722.3,613.9 722.8,617.1 723.3,604.8 723.7,580.7 724.2,550.6 724.7,521.9 725.2,501.6 725.7,494.9 726.2,503.9 726.7,527.4 727.2,561.0 727.7,597.9 728.2,630.8 728.7,653.2 729.2,660.8 729.7,652.6 730.2,630.9 730.6,601.1 731.1,570.2 731.6,545.4 732.1,532.8 732.6,535.5 733.1,553.5 733.6,583.3 734.1,618.8 734.6,652.8 735.1,678.2 735.6,689.9 736.1,685.7 736.6,666.9 737.0,637.9 737.5,605.3 738.0,576.5 738.5,558.1 739.0,554.4 739.5,566.2 740.0,591.4 740.5,624.5 741.0,658.6 741.5,686.2 742.0,701.6 742.5,701.5 743.0,685.9 743.4,658.3 743.9,624.7 744.4,592.6 744.9,568.8 745.4,558.5 745.9,563.9 746.4,583.8 746.9,613.6 747.4,646.9 747.9,676.1 748.4,694.7 748.9,698.6 749.4,686.6 749.9,661.1 750.3,627.4 750.8,592.6 751.3,564.1 751.8,547.6 752.3,546.4 752.8,560.5 753.3,586.4 753.8,618.1 754.3,648.2 754.8,669.7 755.3,677.5 755.8,669.5 756.3,646.8 756.7,613.9 757.2,577.5 757.7,544.9 758.2,522.7 758.7,515.1 759.2,523.2 759.7,544.7 760.2,574.1 760.7,604.4 761.2,628.5 761.7,640.2 762.2,636.5 762.7,617.3 763.2,586.2 763.6,549.2 764.1,513.6 764.6,486.4 765.1,472.8 765.6,474.9 766.1,491.5 766.6,518.2 767.1,548.3 767.6,574.4 768.1,590.1 768.6,590.9 769.1,576.0 769.6,547.7 770.0,511.2 770.5,473.7 771.0,442.5 771.5,423.4 772.0,419.7 772.5,431.4 773.0,454.9 773.5,484.2 774.0,512.1 774.5,531.5 775.0,537.2 775.5,527.2 776.0,502.5 776.4,467.8 776.9,429.7 777.4,395.4 777.9,371.6 778.4,362.5 778.9,369.2 779.4,389.3 779.9,417.5 780.4,446.6 780.9,469.6 781.4,480.3 781.9,475.7 782.4,455.7 782.9,423.9 783.3,386.2 783.8,350.1 784.3,322.5 784.8,308.5 785.3,310.3 785.8,326.8 786.3,353.4 786.8,383.5 787.3,409.7 787.8,425.5 788.3,426.6 788.8,412.1 789.3,384.2 789.7,348.3 790.2,311.4 790.7,280.9 791.2,262.7 791.7,259.9 792.2,272.6 792.7,297.2 793.2,327.7 793.7,356.8 794.2,377.5 794.7,384.7 795.2,376.2 795.7,353.2 796.2,320.1 796.6,283.7 797.1,251.3 797.6,229.4 798.1,222.3 798.6,231.1 799.1,253.4 799.6,283.8 800.1,315.3 800.6,340.6 801.1,353.8 801.6,351.7 802.1,334.3 802.6,305.1 803.0,270.2 803.5,236.9 804.0,212.1 804.5,201.0 805.0,205.8 805.5,225.3 806.0,255.0 806.5,288.2 807.0,317.6 807.5,336.7 808.0,341.2 808.5,329.9 809.0,305.4 809.4,273.0 809.9,239.6 810.4,212.6 810.9,197.9 811.4,198.7 811.9,215.0 812.4,243.3 812.9,277.5 813.4,310.3 813.9,334.8 814.4,345.7 814.9,340.9 815.4,321.7 815.9,292.5 816.3,260.0 816.8,231.4 817.3,213.4 817.8,210.2 818.3,222.8 818.8,249.0 819.3,283.2 819.8,318.6 820.3,347.8 820.8,364.9 821.3,366.7 821.8,353.1 822.3,327.8 822.7,296.8 823.2,267.2 823.7,246.3 824.2,239.0 824.7,247.6 825.2,270.8 825.7,304.2 826.2,341.1 826.7,374.2 827.2,396.9 827.7,405.0 828.2,397.3 828.7,376.3 829.1,347.4 829.6,317.4 830.1,293.8 830.6,282.5 831.1,286.6 831.6,306.2 832.1,337.6 832.6,375.0 833.1,410.9 833.6,438.4 834.1,452.4 834.6,450.5 835.1,434.2 835.6,407.8 836.0,378.0 836.5,352.1 837.0,336.7 837.5,336.0 838.0,351.2 838.5,379.7 839.0,416.3 839.5,453.9 840.0,485.3 840.5,504.5 841.0,508.3 841.5,496.7 842.0,473.3 842.4,444.0 842.9,416.2 843.4,396.8 843.9,391.1 844.4,401.2 844.9,425.7 845.4,460.4 845.9,498.6 846.4,532.7 846.9,556.5 847.4,565.4 847.9,558.6 848.4,538.4 848.9,510.1 849.3,480.8 849.8,457.6 850.3,446.7 850.8,451.1 851.3,470.9 851.8,502.5 852.3,539.9 852.8,575.7 853.3,603.1 853.8,616.8 854.3,614.6 854.8,597.8 855.3,570.9 855.7,540.5 856.2,513.9 856.7,497.7 857.2,496.2 857.7,510.3 858.2,537.8 858.7,573.3 859.2,609.7 859.7,639.7 860.2,657.5 860.7,659.8 861.2,646.7 861.7,621.6 862.1,590.5 862.6,560.9 863.1,539.7 863.6,531.9 864.1,539.9 864.6,562.4 865.1,594.9 865.6,630.7 866.1,662.5 866.6,683.8 867.1,690.3 867.6,680.9 868.1,658.1 868.6,627.1 869.0,594.9 869.5,569.0 870.0,555.1 870.5,556.6 871.0,573.4 871.5,601.9 872.0,636.1 872.5,668.8 873.0,693.0 873.5,703.4 874.0,697.9 874.5,677.7 875.0,647.4 875.4,613.5 875.9,583.4 876.4,563.7 876.9,558.5 877.4,569.1 877.9,592.9 878.4,624.7 878.9,657.4 879.4,683.7 879.9,697.8 880.4,696.3 880.9,679.4 881.4,650.4 881.8,615.6 882.3,582.1 882.8,557.0 883.3,545.4 883.8,549.5 884.3,568.1 884.8,596.7 885.3,628.6 885.8,656.6 886.3,674.0 886.8,676.6 887.3,663.4 887.8,636.6 888.3,601.8 888.7,565.8 889.2,536.1 889.7,518.4 890.2,516.1 890.7,529.1 891.2,553.9 891.7,584.5 892.2,613.5 892.7,634.0 893.2,640.8 893.7,631.7 894.2,608.0 894.7,574.2 895.1,536.8 895.6,503.3 896.1,480.2 896.6,471.8 897.1,479.0 897.6,499.6 898.1,528.2 898.6,557.8 899.1,581.1 899.6,592.1 900.1,587.7 900.6,567.8 901.1,536.1 901.6,498.5 902.0,462.3 902.5,434.5 903.0,420.4 903.5,422.0 904.0,438.2 904.5,464.4 905.0,494.1 905.5,519.8 906.0,535.1 906.5,535.6 907.0,520.4 907.5,491.8 908.0,455.1 908.4,417.4 908.9,386.0 909.4,366.8 909.9,363.0 910.4,374.6 910.9,398.1 911.4,427.4 911.9,455.3 912.4,474.7 912.9,480.6 913.4,470.6 913.9,446.2 914.4,411.6 914.8,373.7 915.3,339.6 915.8,316.1 916.3,307.3 916.8,314.4 917.3,334.8 917.8,363.4 918.3,393.0 918.8,416.4 919.3,427.6 919.8,423.5 920.3,404.0 920.8,372.8 921.3,335.7 921.7,300.2 922.2,273.3 922.7,260.0 923.2,262.5 923.7,279.7 924.2,307.0 924.7,337.9 925.2,365.0 925.7,381.6 926.2,383.6 926.7,369.9 927.2,343.0 927.7,308.0 928.1,272.1 928.6,242.6 929.1,225.3 929.6,223.6 930.1,237.3 930.6,262.9 931.1,294.5 931.6,324.7 932.1,346.6 932.6,354.9 933.1,347.5 933.6,325.6 934.1,293.8 934.5,258.5 935.0,227.3 935.5,206.7 936.0,200.8 936.5,210.9 937.0,234.4 937.5,266.0 938.0,298.8 938.5,325.4 939.0,339.9 939.5,339.1 940.0,323.0 940.5,295.2 941.0,261.6 941.4,229.6 941.9,206.1 942.4,196.4 942.9,202.5 943.4,223.4 943.9,254.4 944.4,288.9 944.9,319.7 945.4,340.1 945.9,345.9 946.4,336.0 946.9,312.8 947.4,281.7 947.8,249.6 948.3,223.9 948.8,210.5 949.3,212.7 949.8,230.3 950.3,259.8 950.8,295.3 951.3,329.4 951.8,355.1 952.3,367.3 952.8,363.7 953.3,345.8 953.8,317.8 954.3,286.4 954.7,259.0 955.2,242.1 955.7,240.1 956.2,253.9 956.7,281.1 957.2,316.5 957.7,352.9 958.2,383.2 958.7,401.3 959.2,404.1 959.7,391.6 960.2,367.2 960.7,337.1 961.1,308.5 961.6,288.5 962.1,282.1 962.6,291.5 963.1,315.6 963.6,349.8 964.1,387.5 964.6,421.3 965.1,444.8 965.6,453.5 966.1,446.6 966.6,426.2 967.1,397.9 967.5,368.6 968.0,345.5 968.5,334.7 969.0,339.4 969.5,359.4 970.0,391.3 970.5,429.1 971.0,465.4 971.5,493.3 972.0,507.6 972.5,506.0 973.0,490.0 973.5,463.8 974.0,434.2 974.4,408.5 974.9,393.2 975.4,392.7 975.9,407.9 976.4,436.5 976.9,473.1 977.4,510.7 977.9,542.1 978.4,561.2 978.9,564.9 979.4,553.2 979.9,529.6 980.4,500.1 980.8,472.0 981.3,452.4 981.8,446.4 982.3,456.1 982.8,480.4 983.3,514.6 983.8,552.4 984.3,586.1 984.8,609.3 985.3,617.8 985.8,610.5 986.3,589.7 986.8,560.8 987.2,530.8 987.7,507.1 988.2,495.4 988.7,499.2 989.2,518.2 989.7,549.1 990.2,585.7 990.7,620.7 991.2,647.3 991.7,660.1 992.2,657.0 992.7,639.4 993.2,611.5 993.7,580.1 994.1,552.6 994.6,535.4 995.1,532.9 995.6,546.0 996.1,572.4 996.6,606.8 997.1,642.1 997.6,671.1 998.1,687.8 998.6,688.9 999.1,674.6 999.6,648.3 1000.1,616.1 1000.5,585.3 1001.0,562.8 1001.5,553.9 1002.0,560.6 1002.5,581.8 1003.0,613.0 1003.5,647.6 1004.0,678.1 1004.5,698.1 1005.0,703.3 1005.5,692.6 1006.0,668.5 1006.5,636.1 1007.0,602.7 1007.4,575.4 1007.9,560.2 1008.4,560.4 1008.9,575.8 1009.4,603.0 1009.9,635.9 1010.4,667.2 1010.9,690.0 1011.4,699.1 1011.9,692.3 1012.4,670.8 1012.9,639.1 1013.4,603.9 1013.8,572.5 1014.3,551.4 1014.8,545.0 1015.3,554.3 1015.8,576.8 1016.3,607.3 1016.8,638.8 1017.3,663.8 1017.8,676.6 1018.3,673.9 1018.8,655.7 1019.3,625.6 1019.8,589.5 1020.2,554.9 1020.7,528.6 1021.2,515.9 1021.7,518.9 1022.2,536.3 1022.7,563.8 1023.2,594.7 1023.7,621.6 1024.2,637.9 1024.7,639.5 1025.2,625.3 1025.7,597.6 1026.2,561.7 1026.7,524.8 1027.1,494.2 1027.6,475.6 1028.1,472.5 1028.6,484.6 1029.1,508.6 1029.6,538.4 1030.1,566.6 1030.6,586.3 1031.1,592.4 1031.6,582.7 1032.1,558.3 1032.6,523.8 1033.1,485.9 1033.5,451.8 1034.0,428.1 1034.5,419.2 1035.0,425.9 1035.5,446.1 1036.0,474.3 1036.5,503.4 1037.0,526.3 1037.5,537.0 1038.0,532.3 1038.5,512.2 1039.0,480.2 1039.5,442.3 1040.0,405.9 1040.4,378.0 1040.9,363.8 1041.4,365.3 1041.9,381.4 1042.4,407.6 1042.9,437.3 1043.4,463.0 1043.9,478.4 1044.4,479.0 1044.9,463.9 1045.4,435.5 1045.9,399.0 1046.4,361.5 1046.8,330.4 1047.3,311.4 1047.8,308.0 1048.3,319.9 1048.8,343.8 1049.3,373.5 1049.8,401.8 1050.3,421.7 1050.8,428.0 1051.3,418.6 1051.8,394.7 1052.3,360.7 1052.8,323.4 1053.2,290.0 1053.7,267.1 1054.2,259.0 1054.7,266.8 1055.2,288.0 1055.7,317.3 1056.2,347.7 1056.7,371.9 1057.2,384.0 1057.7,380.7 1058.2,362.2 1058.7,331.9 1059.2,295.8 1059.7,261.2 1060.1,235.2 1060.6,222.9 1061.1,226.5 1061.6,244.7 1062.1,273.1 1062.6,305.1 1063.1,333.2 1063.6,351.0 1064.1,354.2 1064.6,341.6 1065.1,315.8 1065.6,282.0 1066.1,247.3 1066.5,219.0 1067.0,203.0 1067.5,202.5 1068.0,217.4 1068.5,244.3 1069.0,277.2 1069.5,308.7 1070.0,331.8 1070.5,341.4 1071.0,335.3 1071.5,314.8 1072.0,284.3 1072.5,250.4 1072.9,220.5 1073.4,201.2 1073.9,196.7 1074.4,208.0 1074.9,232.8 1075.4,265.9 1075.9,300.0 1076.4,327.9 1076.9,343.8 1077.4,344.3 1077.9,329.5 1078.4,303.0 1078.9,270.7 1079.4,240.0 1079.8,217.9 1080.3,209.5 1080.8,216.9 1081.3,239.0 1081.8,271.3 1082.3,307.2 1082.8,339.2 1083.3,360.8 1083.8,367.9 1084.3,359.2 1084.8,337.3 1085.3,307.3 1085.8,276.4 1086.2,251.9 1086.7,239.7 1087.2,243.0 1087.7,261.7 1088.2,292.3 1088.7,328.9 1089.2,364.1 1089.7,390.8 1090.2,404.0 1090.7,401.5 1091.2,384.5 1091.7,357.5 1092.2,327.0 1092.7,300.6 1093.1,284.6 1093.6,283.5 1094.1,298.1 1094.6,326.2 1095.1,362.3 1095.6,399.6 1096.1,430.6 1096.6,449.4 1097.1,452.9 1097.6,441.1 1098.1,417.4 1098.6,387.8 1099.1,359.8 1099.5,340.3 1100.0,334.5 1100.5,344.4 1101.0,369.0 1101.5,403.6 1102.0,441.8 1102.5,476.0 1103.0,499.8 1103.5,508.8 1104.0,502.1 1104.5,482.1 1105.0,454.0 1105.5,424.8 1105.9,402.0 1106.4,391.3 1106.9,396.1 1107.4,416.2 1107.9,448.1 1108.4,485.9 1108.9,522.2 1109.4,550.0 1109.9,564.2 1110.4,562.6 1110.9,546.4 1111.4,520.0 1111.9,490.2 1112.4,464.2 1112.8,448.7 1113.3,447.9 1113.8,462.7 1114.3,491.0 1114.8,527.2 1115.3,564.4 1115.8,595.3 1116.3,613.9 1116.8,617.1 1117.3,604.8 1117.8,580.7 1118.3,550.6 1118.8,521.9 1119.2,501.6 1119.7,494.9 1120.2,503.9 1120.7,527.4 1121.2,561.0 1121.7,597.9 1122.2,630.8 1122.7,653.2 1123.2,660.8 1123.7,652.6 1124.2,630.9 1124.7,601.1 1125.2,570.2 1125.6,545.4 1126.1,532.8 1126.6,535.5 1127.1,553.5 1127.6,583.3 1128.1,618.8 1128.6,652.8 1129.1,678.2 1129.6,689.9 1130.1,685.7 1130.6,666.9 1131.1,637.9 1131.6,605.3 1132.1,576.5 1132.5,558.1 1133.0,554.4 1133.5,566.2 1134.0,591.4 1134.5,624.5 1135.0,658.6 1135.5,686.2 1136.0,701.6 1136.5,701.5 1137.0,685.9 1137.5,658.3 1138.0,624.7 1138.5,592.6 1138.9,568.8 1139.4,558.5 1139.9,563.9 1140.4,583.8 1140.9,613.6 1141.4,646.9 1141.9,676.1 1142.4,694.7 1142.9,698.6 1143.4,686.6 1143.9,661.1 1144.4,627.4 1144.9,592.6 1145.4,564.1 1145.8,547.6 1146.3,546.4 1146.8,560.5 1147.3,586.4 1147.8,618.1 1148.3,648.2 1148.8,669.7 1149.3,677.5 1149.8,669.5 1150.3,646.8 1150.8,613.9 1151.3,577.5 1151.8,544.9 1152.2,522.7 1152.7,515.1 1153.2,523.2 1153.7,544.7 1154.2,574.1 1154.7,604.4 1155.2,628.5 1155.7,640.2 1156.2,636.5 1156.7,617.3 1157.2,586.2 1157.7,549.2 1158.2,513.6 1158.6,486.4 1159.1,472.8 1159.6,474.9 1160.1,491.5 1160.6,518.2 1161.1,548.3 1161.6,574.4 1162.1,590.1 1162.6,590.9 1163.1,576.0 1163.6,547.7 1164.1,511.2 1164.6,473.7 1165.1,442.5 1165.5,423.4 1166.0,419.7 1166.5,431.4 1167.0,454.9 1167.5,484.2 1168.0,512.1 1168.5,531.5 1169.0,537.2 1169.5,527.2 1170.0,502.5 1170.5,467.8 1171.0,429.7 1171.5,395.4 1171.9,371.6 1172.4,362.5 1172.9,369.2 1173.4,389.3 1173.9,417.5 1174.4,446.6 1174.9,469.6 1175.4,480.3 1175.9,475.7 1176.4,455.7 1176.9,423.9 1177.4,386.2 1177.9,350.1 1178.3,322.5 1178.8,308.5 1179.3,310.3 1179.8,326.8 1180.3,353.4 1180.8,383.5 1181.3,409.7 1181.8,425.5 1182.3,426.6 1182.8,412.1 1183.3,384.2 1183.8,348.3 1184.3,311.4 1184.8,280.9 1185.2,262.7 1185.7,259.9 1186.2,272.6 1186.7,297.2 1187.2,327.7 1187.7,356.8 1188.2,377.5 1188.7,384.7 1189.2,376.2 1189.7,353.2 1190.2,320.1 1190.7,283.7 1191.2,251.3 1191.6,229.4 1192.1,222.3 1192.6,231.1 1193.1,253.4 1193.6,283.8 1194.1,315.3 1194.6,340.6 1195.1,353.8 1195.6,351.7 1196.1,334.3 1196.6,305.1 1197.1,270.2 1197.6,236.9 1198.1,212.1 1198.5,201.0 1199.0,205.8 1199.5,225.3 1200.0,255.0 1200.5,288.2 1201.0,317.6 1201.5,336.7 1202.0,341.2 1202.5,329.9 1203.0,305.4 1203.5,273.0 1204.0,239.6 1204.5,212.6 1204.9,197.9 1205.4,198.7 1205.9,215.0 1206.4,243.3 1206.9,277.5 1207.4,310.3 1207.9,334.8 1208.4,345.7 1208.9,340.9 1209.4,321.7 1209.9,292.5 1210.4,260.0 1210.9,231.4 1211.3,213.4 1211.8,210.2 1212.3,222.8 1212.8,249.0 1213.3,283.2 1213.8,318.6 1214.3,347.8 1214.8,364.9 1215.3,366.7 1215.8,353.1 1216.3,327.8 1216.8,296.8 1217.3,267.2 1217.8,246.3 1218.2,239.0 1218.7,247.6 1219.2,270.8 1219.7,304.2 1220.2,341.1 1220.7,374.2 1221.2,396.9 1221.7,405.0 1222.2,397.3 1222.7,376.3 1223.2,347.4 1223.7,317.4 1224.2,293.8 1224.6,282.5 1225.1,286.6 1225.6,306.2 1226.1,337.6 1226.6,375.0 1227.1,410.9 1227.6,438.4 1228.1,452.4 1228.6,450.5 1229.1,434.2 1229.6,407.8 1230.1,378.0 1230.6,352.1 1231.0,336.7 1231.5,336.0 1232.0,351.2 1232.5,379.7 1233.0,416.3 1233.5,453.9 1234.0,485.3 1234.5,504.5 1235.0,508.3 1235.5,496.7 1236.0,473.3 1236.5,444.0 1237.0,416.2 1237.5,396.8 1237.9,391.1 1238.4,401.2 1238.9,425.7 1239.4,460.4 1239.9,498.6 1240.4,532.7 1240.9,556.5 1241.4,565.4 1241.9,558.6 1242.4,538.4 1242.9,510.1 1243.4,480.8 1243.9,457.6 1244.3,446.7 1244.8,451.1 1245.3,470.9 1245.8,502.5 1246.3,539.9 1246.8,575.7 1247.3,603.1 1247.8,616.8 1248.3,614.6 1248.8,597.8 1249.3,570.9 1249.8,540.5 1250.3,513.9 1250.8,497.7 1251.2,496.2 1251.7,510.3 1252.2,537.8 1252.7,573.3 1253.2,609.7 1253.7,639.7 1254.2,657.5 1254.7,659.8 1255.2,646.7 1255.7,621.6 1256.2,590.5 1256.7,560.9 1257.2,539.7 1257.6,531.9 1258.1,539.9 1258.6,562.4 1259.1,594.9 1259.6,630.7 1260.1,662.5 1260.6,683.8 1261.1,690.3 1261.6,680.9 1262.1,658.1 1262.6,627.1 1263.1,594.9 1263.6,569.0 1264.0,555.1 1264.5,556.6 1265.0,573.4 1265.5,601.9 1266.0,636.1 1266.5,668.8 1267.0,693.0 1267.5,703.4 1268.0,697.9 1268.5,677.7 1269.0,647.4 1269.5,613.5 1270.0,583.4 1270.5,563.7 1270.9,558.5 1271.4,569.1 1271.9,592.9 1272.4,624.7 1272.9,657.4 1273.4,683.7 1273.9,697.8 1274.4,696.3 1274.9,679.4 1275.4,650.4 1275.9,615.6 1276.4,582.1 1276.9,557.0 1277.3,545.4 1277.8,549.5 1278.3,568.1 1278.8,596.7 1279.3,628.6 1279.8,656.6 1280.3,674.0 1280.8,676.6 1281.3,663.4 1281.8,636.6 1282.3,601.8 1282.8,565.8 1283.3,536.1 1283.7,518.4 1284.2,516.1 1284.7,529.1 1285.2,553.9 1285.7,584.5 1286.2,613.5 1286.7,634.0 1287.2,640.8 1287.7,631.7 1288.2,608.0 1288.7,574.2 1289.2,536.8 1289.7,503.3 1290.2,480.2 1290.6,471.8 1291.1,479.0 1291.6,499.6 1292.1,528.2 1292.6,557.8 1293.1,581.1 1293.6,592.1 1294.1,587.7 1294.6,567.8 1295.1,536.1 1295.6,498.5 1296.1,462.3 1296.6,434.5 1297.0,420.4 1297.5,422.0 1298.0,438.2 1298.5,464.4 1299.0,494.1 1299.5,519.8 1300.0,535.1 1300.5,535.6 1301.0,520.4 1301.5,491.8 1302.0,455.1 1302.5,417.4 1303.0,386.0 1303.5,366.8 1303.9,363.0 1304.4,374.6 1304.9,398.1 1305.4,427.4 1305.9,455.3 1306.4,474.7 1306.9,480.6 1307.4,470.6 1307.9,446.2 1308.4,411.6 1308.9,373.7 1309.4,339.6 1309.9,316.1 1310.3,307.3 1310.8,314.4 1311.3,334.8 1311.8,363.4 1312.3,393.0 1312.8,416.4 1313.3,427.6 1313.8,423.5 1314.3,404.0 1314.8,372.8 1315.3,335.7 1315.8,300.2 1316.3,273.3 1316.7,260.0 1317.2,262.5 1317.7,279.7 1318.2,307.0 1318.7,337.9 1319.2,365.0 1319.7,381.6 1320.2,383.6 1320.7,369.9 1321.2,343.0 1321.7,308.0 1322.2,272.1 1322.7,242.6 1323.2,225.3 1323.6,223.6 1324.1,237.3 1324.6,262.9 1325.1,294.5 1325.6,324.7 1326.1,346.6 1326.6,354.9 1327.1,347.5 1327.6,325.6 1328.1,293.8 1328.6,258.5 1329.1,227.3 1329.6,206.7 1330.0,200.8 1330.5,210.9 1331.0,234.4 1331.5,266.0 1332.0,298.8 1332.5,325.4 1333.0,339.9 1333.5,339.1 1334.0,323.0 1334.5,295.2 1335.0,261.6 1335.5,229.6 1336.0,206.1 1336.5,196.4 1336.9,202.5 1337.4,223.4 1337.9,254.4 1338.4,288.9 1338.9,319.7 1339.4,340.1 1339.9,345.9 1340.4,336.0 1340.9,312.8 1341.4,281.7 1341.9,249.6 1342.4,223.9 1342.9,210.5 1343.3,212.7 1343.8,230.3 1344.3,259.8 1344.8,295.3 1345.3,329.4 1345.8,355.1 1346.3,367.3 1346.8,363.7 1347.3,345.8 1347.8,317.8 1348.3,286.4 1348.8,259.0 1349.3,242.1 1349.7,240.1 1350.2,253.9 1350.7,281.1 1351.2,316.5 1351.7,352.9 1352.2,383.2 1352.7,401.3 1353.2,404.1 1353.7,391.6 1354.2,367.2 1354.7,337.1 1355.2,308.5 1355.7,288.5 1356.2,282.1 1356.6,291.5 1357.1,315.6 1357.6,349.8 1358.1,387.5 1358.6,421.3 1359.1,444.8 1359.6,453.5 1360.1,446.6 1360.6,426.2 1361.1,397.9 1361.6,368.6 1362.1,345.5 1362.6,334.7 1363.0,339.4 1363.5,359.4 1364.0,391.3 1364.5,429.1 1365.0,465.4 1365.5,493.3 1366.0,507.6 1366.5,506.0 1367.0,490.0 1367.5,463.8 1368.0,434.2 1368.5,408.5 1369.0,393.2 1369.4,392.7 1369.9,407.9 1370.4,436.5 1370.9,473.1 1371.4,510.7 1371.9,542.1 1372.4,561.2 1372.9,564.9 1373.4,553.2 1373.9,529.6 1374.4,500.1 1374.9,472.0 1375.4,452.4 1375.9,446.4 1376.3,456.1 1376.8,480.4 1377.3,514.6 1377.8,552.4 1378.3,586.1 1378.8,609.3 1379.3,617.8 1379.8,610.5 1380.3,589.7 1380.8,560.8 1381.3,530.8 1381.8,507.1 1382.3,495.4 1382.7,499.2 1383.2,518.2 1383.7,549.1 1384.2,585.7 1384.7,620.7 1385.2,647.3 1385.7,660.1 1386.2,657.0 1386.7,639.4 1387.2,611.5 1387.7,580.1 1388.2,552.6 1388.7,535.4 1389.2,532.9 1389.6,546.0 1390.1,572.4 1390.6,606.8 1391.1,642.1 1391.6,671.1 1392.1,687.8 1392.6,688.9 1393.1,674.6 1393.6,648.3 1394.1,616.1 1394.6,585.3 1395.1,562.8 1395.6,553.9 1396.0,560.6 1396.5,581.8 1397.0,613.0 1397.5,647.6 1398.0,678.1 1398.5,698.1 1399.0,703.3 1399.5,692.6 1400.0,668.5 1400.5,636.1 1401.0,602.7 1401.5,575.4 1402.0,560.2 1402.4,560.4 1402.9,575.8 1403.4,603.0 1403.9,635.9 1404.4,667.2 1404.9,690.0 1405.4,699.1 1405.9,692.3 1406.4,670.8 1406.9,639.1 1407.4,603.9 1407.9,572.5 1408.4,551.4 1408.9,545.0 1409.3,554.3 1409.8,576.8 1410.3,607.3 1410.8,638.8 1411.3,663.8 1411.8,676.6 1412.3,673.9 1412.8,655.7 1413.3,625.6 1413.8,589.5 1414.3,554.9 1414.8,528.6 1415.3,515.9 1415.7,518.9 1416.2,536.3 1416.7,563.8 1417.2,594.7 1417.7,621.6 1418.2,637.9 1418.7,639.5 1419.2,625.3 1419.7,597.6 1420.2,561.7 1420.7,524.8 1421.2,494.2 1421.7,475.6 1422.1,472.5 1422.6,484.6 1423.1,508.6 1423.6,538.4 1424.1,566.6 1424.6,586.3 1425.1,592.4 1425.6,582.7 1426.1,558.3 1426.6,523.8 1427.1,485.9 1427.6,451.8 1428.1,428.1 1428.6,419.2 1429.0,425.9 1429.5,446.1 1430.0,474.3 1430.5,503.4 1431.0,526.3 1431.5,537.0 1432.0,532.3 1432.5,512.2 1433.0,480.2 1433.5,442.3 1434.0,405.9 1434.5,378.0 1435.0,363.8 1435.4,365.3 1435.9,381.4 1436.4,407.6 1436.9,437.3 1437.4,463.0 1437.9,478.4 1438.4,479.0 1438.9,463.9 1439.4,435.5 1439.9,399.0 1440.4,361.5 1440.9,330.4 1441.4,311.4 1441.9,308.0 1442.3,319.9 1442.8,343.8 1443.3,373.5 1443.8,401.8 1444.3,421.7 1444.8,428.0 1445.3,418.6 1445.8,394.7 1446.3,360.7 1446.8,323.4 1447.3,290.0 1447.8,267.1 1448.3,259.0 1448.7,266.8 1449.2,288.0 1449.7,317.3 1450.2,347.7 1450.7,371.9 1451.2,384.0 1451.7,380.7 1452.2,362.2 1452.7,331.9 1453.2,295.8 1453.7,261.2 1454.2,235.2 1454.7,222.9 1455.1,226.5 1455.6,244.7 1456.1,273.1 1456.6,305.1 1457.1,333.2 1457.6,351.0 1458.1,354.2 1458.6,341.6 1459.1,315.8 1459.6,282.0 1460.1,247.3 1460.6,219.0 1461.1,203.0 1461.6,202.5 1462.0,217.4 1462.5,244.3 1463.0,277.2 1463.5,308.7 1464.0,331.8 1464.5,341.4 1465.0,335.3 1465.5,314.8 1466.0,284.3 1466.5,250.4 1467.0,220.5 1467.5,201.2 1468.0,196.7 1468.4,208.0 1468.9,232.8 1469.4,265.9 1469.9,300.0 1470.4,327.9 1470.9,343.8 1471.4,344.3 1471.9,329.5 1472.4,303.0 1472.9,270.7 1473.4,240.0 1473.9,217.9 1474.4,209.5 1474.8,216.9 1475.3,239.0 1475.8,271.3 1476.3,307.2 1476.8,339.2 1477.3,360.8 1477.8,367.9 1478.3,359.2 1478.8,337.3 1479.3,307.3 1479.8,276.4 1480.3,251.9 1480.8,239.7 1481.3,243.0 1481.7,261.7 1482.2,292.3 1482.7,328.9 1483.2,364.1 1483.7,390.8 1484.2,404.0 1484.7,401.5 1485.2,384.5 1485.7,357.5 1486.2,327.0 1486.7,300.6 1487.2,284.6 1487.7,283.5 1488.1,298.1 1488.6,326.2 1489.1,362.3 1489.6,399.6 1490.1,430.6 1490.6,449.4 1491.1,452.9 1491.6,441.1 1492.1,417.4 1492.6,387.8 1493.1,359.8 1493.6,340.3 1494.1,334.5 1494.6,344.4 1495.0,369.0 1495.5,403.6 1496.0,441.8 1496.5,476.0 1497.0,499.8 1497.5,508.8 1498.0,502.1 1498.5,482.1 1499.0,454.0 1499.5,424.8 1500.0,402.0 1500.5,391.3 1501.0,396.1 1501.4,416.2 1501.9,448.1 1502.4,485.9 1502.9,522.2 1503.4,550.0 1503.9,564.2 1504.4,562.6 1504.9,546.4 1505.4,520.0 1505.9,490.2 1506.4,464.2 1506.9,448.7 1507.4,447.9 1507.8,462.7 1508.3,491.0 1508.8,527.2 1509.3,564.4 1509.8,595.3 1510.3,613.9 1510.8,617.1 1511.3,604.8 1511.8,580.7 1512.3,550.6 1512.8,521.9 1513.3,501.6 1513.8,494.9 1514.3,503.9 1514.7,527.4 1515.2,561.0 1515.7,597.9 1516.2,630.8 1516.7,653.2 1517.2,660.8 1517.7,652.6 1518.2,630.9 1518.7,601.1 1519.2,570.2 1519.7,545.4 1520.2,532.8 1520.7,535.5 1521.1,553.5 1521.6,583.3 1522.1,618.8 1522.6,652.8 1523.1,678.2 1523.6,689.9 1524.1,685.7 1524.6,666.9 1525.1,637.9 1525.6,605.3 1526.1,576.5 1526.6,558.1 1527.1,554.4 1527.5,566.2 1528.0,591.4 1528.5,624.5 1529.0,658.6 1529.5,686.2 1530.0,701.6 1530.5,701.5 1531.0,685.9 1531.5,658.3 1532.0,624.7 1532.5,592.6 1533.0,568.8 1533.5,558.5 1534.0,563.9 1534.4,583.8 1534.9,613.6 1535.4,646.9 1535.9,676.1 1536.4,694.7 1536.9,698.6 1537.4,686.6 1537.9,661.1 1538.4,627.4 1538.9,592.6 1539.4,564.1 1539.9,547.6 1540.4,546.4 1540.8,560.5 1541.3,586.4 1541.8,618.1 1542.3,648.2 1542.8,669.7 1543.3,677.5 1543.8,669.5 1544.3,646.8 1544.8,613.9 1545.3,577.5 1545.8,544.9 1546.3,522.7 1546.8,515.1 1547.3,523.2 1547.7,544.7 1548.2,574.1 1548.7,604.4 1549.2,628.5 1549.7,640.2 1550.2,636.5 1550.7,617.3 1551.2,586.2 1551.7,549.2 1552.2,513.6 1552.7,486.4 1553.2,472.8 1553.7,474.9 1554.1,491.5 1554.6,518.2 1555.1,548.3 1555.6,574.4 1556.1,590.1 1556.6,590.9 1557.1,576.0 1557.6,547.7 1558.1,511.2 1558.6,473.7 1559.1,442.5 1559.6,423.4 1560.1,419.7 1560.5,431.4 1561.0,454.9 1561.5,484.2 1562.0,512.1 1562.5,531.5 1563.0,537.2 1563.5,527.2 1564.0,502.5 1564.5,467.8 1565.0,429.7 1565.5,395.4 1566.0,371.6 1566.5,362.5 1567.0,369.2 1567.4,389.3 1567.9,417.5 1568.4,446.6 1568.9,469.6 1569.4,480.3 1569.9,475.7 1570.4,455.7 1570.9,423.9 1571.4,386.2 1571.9,350.1 1572.4,322.5 1572.9,308.5 1573.4,310.3 1573.8,326.8 1574.3,353.4 1574.8,383.5 1575.3,409.7 1575.8,425.5 1576.3,426.6 1576.8,412.1 1577.3,384.2 1577.8,348.3 1578.3,311.4 1578.8,280.9 1579.3,262.7 1579.8,259.9 1580.2,272.6 1580.7,297.2 1581.2,327.7 1581.7,356.8 1582.2,377.5 1582.7,384.7 1583.2,376.2 1583.7,353.2 1584.2,320.1 1584.7,283.7 1585.2,251.3 1585.7,229.4 1586.2,222.3 1586.7,231.1 1587.1,253.4 1587.6,283.8 1588.1,315.3 1588.6,340.6 1589.1,353.8 1589.6,351.7 1590.1,334.3 1590.6,305.1 1591.1,270.2 1591.6,236.9 1592.1,212.1 1592.6,201.0 1593.1,205.8 1593.5,225.3 1594.0,255.0 1594.5,288.2 1595.0,317.6 1595.5,336.7 1596.0,341.2 1596.5,329.9 1597.0,305.4 1597.5,273.0 1598.0,239.6 1598.5,212.6 1599.0,197.9 1599.5,198.7 1600.0,215.0 1600.4,243.3 1600.9,277.5 1601.4,310.3 1601.9,334.8 1602.4,345.7 1602.9,340.9 1603.4,321.7 1603.9,292.5 1604.4,260.0 1604.9,231.4 1605.4,213.4 1605.9,210.2 1606.4,222.8 1606.8,249.0 1607.3,283.2 1607.8,318.6 1608.3,347.8 1608.8,364.9 1609.3,366.7 1609.8,353.1 1610.3,327.8 1610.8,296.8 1611.3,267.2 1611.8,246.3 1612.3,239.0 1612.8,247.6 1613.2,270.8 1613.7,304.2 1614.2,341.1 1614.7,374.2 1615.2,396.9 1615.7,405.0 1616.2,397.3 1616.7,376.3 1617.2,347.4 1617.7,317.4 1618.2,293.8 1618.7,282.5 1619.2,286.6 1619.7,306.2 1620.1,337.6 1620.6,375.0 1621.1,410.9 1621.6,438.4 1622.1,452.4 1622.6,450.5 1623.1,434.2 1623.6,407.8 1624.1,378.0 1624.6,352.1 1625.1,336.7 1625.6,336.0 1626.1,351.2 1626.5,379.7 1627.0,416.3 1627.5,453.9 1628.0,485.3 1628.5,504.5 1629.0,508.3 1629.5,496.7 1630.0,473.3 1630.5,444.0 1631.0,416.2 1631.5,396.8 1632.0,391.1 1632.5,401.2 1633.0,425.7 1633.4,460.4 1633.9,498.6 1634.4,532.7 1634.9,556.5 1635.4,565.4 1635.9,558.6 1636.4,538.4 1636.9,510.1 1637.4,480.8 1637.9,457.6 1638.4,446.7 1638.9,451.1 1639.4,470.9 1639.8,502.5 1640.3,539.9 1640.8,575.7 1641.3,603.1 1641.8,616.8 1642.3,614.6 1642.8,597.8 1643.3,570.9 1643.8,540.5 1644.3,513.9 1644.8,497.7 1645.3,496.2 1645.8,510.3 1646.2,537.8 1646.7,573.3 1647.2,609.7 1647.7,639.7 1648.2,657.5 1648.7,659.8 1649.2,646.7 1649.7,621.6 1650.2,590.5 1650.7,560.9 1651.2,539.7 1651.7,531.9 1652.2,539.9 1652.7,562.4 1653.1,594.9 1653.6,630.7 1654.1,662.5 1654.6,683.8 1655.1,690.3 1655.6,680.9 1656.1,658.1 1656.6,627.1 1657.1,594.9 1657.6,569.0 1658.1,555.1 1658.6,556.6 1659.1,573.4 1659.5,601.9 1660.0,636.1 1660.5,668.8 1661.0,693.0 1661.5,703.4 1662.0,697.9 1662.5,677.7 1663.0,647.4 1663.5,613.5 1664.0,583.4 1664.5,563.7 1665.0,558.5 1665.5,569.1 1665.9,592.9 1666.4,624.7 1666.9,657.4 1667.4,683.7 1667.9,697.8 1668.4,696.3 1668.9,679.4 1669.4,650.4 1669.9,615.6 1670.4,582.1 1670.9,557.0 1671.4,545.4 1671.9,549.5 1672.4,568.1 1672.8,596.7 1673.3,628.6 1673.8,656.6 1674.3,674.0 1674.8,676.6 1675.3,663.4 1675.8,636.6 1676.3,601.8 1676.8,565.8 1677.3,536.1 1677.8,518.4 1678.3,516.1 1678.8,529.1 1679.2,553.9 1679.7,584.5 1680.2,613.5 1680.7,634.0 1681.2,640.8 1681.7,631.7 1682.2,608.0 1682.7,574.2 1683.2,536.8 1683.7,503.3 1684.2,480.2 1684.7,471.8 1685.2,479.0 1685.7,499.6 1686.1,528.2 1686.6,557.8 1687.1,581.1 1687.6,592.1 1688.1,587.7 1688.6,567.8 1689.1,536.1 1689.6,498.5 1690.1,462.3 1690.6,434.5 1691.1,420.4 1691.6,422.0 1692.1,438.2 1692.5,464.4 1693.0,494.1 1693.5,519.8 1694.0,535.1 1694.5,535.6 1695.0,520.4 1695.5,491.8 1696.0,455.1 1696.5,417.4 1697.0,386.0 1697.5,366.8 1698.0,363.0 1698.5,374.6 1698.9,398.1 1699.4,427.4 1699.9,455.3 1700.4,474.7 1700.9,480.6 1701.4,470.6 1701.9,446.2 1702.4,411.6 1702.9,373.7 1703.4,339.6 1703.9,316.1 1704.4,307.3 1704.9,314.4 1705.4,334.8 1705.8,363.4 1706.3,393.0 1706.8,416.4 1707.3,427.6 1707.8,423.5 1708.3,404.0 1708.8,372.8 1709.3,335.7 1709.8,300.2 1710.3,273.3 1710.8,260.0 1711.3,262.5 1711.8,279.7 1712.2,307.0 1712.7,337.9 1713.2,365.0 1713.7,381.6 1714.2,383.6 1714.7,369.9 1715.2,343.0 1715.7,308.0 1716.2,272.1 1716.7,242.6 1717.2,225.3 1717.7,223.6 1718.2,237.3 1718.6,262.9 1719.1,294.5 1719.6,324.7 1720.1,346.6 1720.6,354.9 1721.1,347.5 1721.6,325.6 1722.1,293.8 1722.6,258.5 1723.1,227.3 1723.6,206.7 1724.1,200.8 1724.6,210.9 1725.1,234.4 1725.5,266.0 1726.0,298.8 1726.5,325.4 1727.0,339.9 1727.5,339.1 1728.0,323.0 1728.5,295.2 1729.0,261.6 1729.5,229.6 1730.0,206.1 1730.5,196.4 1731.0,202.5 1731.5,223.4 1731.9,254.4 1732.4,288.9 1732.9,319.7 1733.4,340.1 1733.9,345.9 1734.4,336.0 1734.9,312.8 1735.4,281.7 1735.9,249.6 1736.4,223.9 1736.9,210.5 1737.4,212.7 1737.9,230.3 1738.4,259.8 1738.8,295.3 1739.3,329.4 1739.8,355.1 1740.3,367.3 1740.8,363.7 1741.3,345.8 1741.8,317.8 1742.3,286.4 1742.8,259.0 1743.3,242.1 1743.8,240.1 1744.3,253.9 1744.8,281.1 1745.2,316.5 1745.7,352.9 1746.2,383.2 1746.7,401.3 1747.2,404.1 1747.7,391.6 1748.2,367.2 1748.7,337.1 1749.2,308.5 1749.7,288.5 1750.2,282.1 1750.7,291.5 1751.2,315.6 1751.6,349.8 1752.1,387.5 1752.6,421.3 1753.1,444.8 1753.6,453.5 1754.1,446.6 1754.6,426.2 1755.1,397.9 1755.6,368.6 1756.1,345.5 1756.6,334.7 1757.1,339.4 1757.6,359.4 1758.1,391.3 1758.5,429.1 1759.0,465.4 1759.5,493.3 1760.0,507.6 1760.5,506.0 1761.0,490.0 1761.5,463.8 1762.0,434.2 1762.5,408.5 1763.0,393.2 1763.5,392.7 1764.0,407.9 1764.5,436.5 1764.9,473.1 1765.4,510.7 1765.9,542.1 1766.4,561.2 1766.9,564.9 1767.4,553.2 1767.9,529.6 1768.4,500.1 1768.9,472.0 1769.4,452.4 1769.9,446.4 1770.4,456.1 1770.9,480.4 1771.3,514.6 1771.8,552.4 1772.3,586.1 1772.8,609.3 1773.3,617.8 1773.8,610.5 1774.3,589.7 1774.8,560.8 1775.3,530.8 1775.8,507.1 1776.3,495.4 1776.8,499.2 1777.3,518.2 1777.8,549.1 1778.2,585.7 1778.7,620.7 1779.2,647.3 1779.7,660.1 1780.2,657.0 1780.7,639.4 1781.2,611.5 1781.7,580.1 1782.2,552.6 1782.7,535.4 1783.2,532.9 1783.7,546.0 1784.2,572.4 1784.6,606.8 1785.1,642.1 1785.6,671.1 1786.1,687.8 1786.6,688.9 1787.1,674.6 1787.6,648.3 1788.1,616.1 1788.6,585.3 1789.1,562.8 1789.6,553.9 1790.1,560.6 1790.6,581.8 1791.1,613.0 1791.5,647.6 1792.0,678.1 1792.5,698.1 1793.0,703.3 1793.5,692.6 1794.0,668.5 1794.5,636.1 1795.0,602.7 1795.5,575.4 1796.0,560.2 1796.5,560.4 1797.0,575.8 1797.5,603.0 1797.9,635.9 1798.4,667.2 1798.9,690.0 1799.4,699.1 1799.9,692.3 1800.4,670.8 1800.9,639.1 1801.4,603.9 1801.9,572.5 1802.4,551.4 1802.9,545.0 1803.4,554.3 1803.9,576.8 1804.3,607.3 1804.8,638.8 1805.3,663.8 1805.8,676.6 1806.3,673.9 1806.8,655.7 1807.3,625.6 1807.8,589.5 1808.3,554.9 1808.8,528.6 1809.3,515.9 1809.8,518.9 1810.3,536.3 1810.8,563.8 1811.2,594.7 1811.7,621.6 1812.2,637.9 1812.7,639.5 1813.2,625.3 1813.7,597.6 1814.2,561.7 1814.7,524.8 1815.2,494.2 1815.7,475.6 1816.2,472.5 1816.7,484.6 1817.2,508.6 1817.6,538.4 1818.1,566.6 1818.6,586.3 1819.1,592.4 1819.6,582.7 1820.1,558.3 1820.6,523.8 1821.1,485.9 1821.6,451.8 1822.1,428.1 1822.6,419.2 1823.1,425.9 1823.6,446.1 1824.0,474.3 1824.5,503.4 1825.0,526.3 1825.5,537.0 1826.0,532.3 1826.5,512.2 1827.0,480.2 1827.5,442.3 1828.0,405.9 1828.5,378.0 1829.0,363.8 1829.5,365.3 1830.0,381.4 1830.5,407.6 1830.9,437.3 1831.4,463.0 1831.9,478.4 1832.4,479.0 1832.9,463.9 1833.4,435.5 1833.9,399.0 1834.4,361.5 1834.9,330.4 1835.4,311.4 1835.9,308.0 1836.4,319.9 1836.9,343.8 1837.3,373.5 1837.8,401.8 1838.3,421.7 1838.8,428.0 1839.3,418.6 1839.8,394.7 1840.3,360.7 1840.8,323.4 1841.3,290.0 1841.8,267.1 1842.3,259.0 1842.8,266.8 1843.3,288.0 1843.8,317.3 1844.2,347.7 1844.7,371.9 1845.2,384.0 1845.7,380.7 1846.2,362.2 1846.7,331.9 1847.2,295.8 1847.7,261.2 1848.2,235.2 1848.7,222.9 1849.2,226.5 1849.7,244.7 1850.2,273.1 1850.6,305.1 1851.1,333.2 1851.6,351.0 1852.1,354.2 1852.6,341.6 1853.1,315.8 1853.6,282.0 1854.1,247.3 1854.6,219.0 1855.1,203.0 1855.6,202.5 1856.1,217.4 1856.6,244.3 1857.0,277.2 1857.5,308.7 1858.0,331.8 1858.5,341.4 1859.0,335.3 1859.5,314.8 1860.0,284.3 1860.5,250.4 1861.0,220.5 1861.5,201.2 1862.0,196.7 1862.5,208.0 1863.0,232.8 1863.5,265.9 1863.9,300.0 1864.4,327.9 1864.9,343.8 1865.4,344.3 1865.9,329.5 1866.4,303.0 1866.9,270.7 1867.4,240.0 1867.9,217.9 1868.4,209.5 1868.9,216.9 1869.4,239.0 1869.9,271.3 1870.3,307.2 1870.8,339.2 1871.3,360.8 1871.8,367.9 1872.3,359.2 1872.8,337.3 1873.3,307.3 1873.8,276.4 1874.3,251.9 1874.8,239.7 1875.3,243.0 1875.8,261.7 1876.3,292.3 1876.7,328.9 1877.2,364.1 1877.7,390.8 1878.2,404.0 1878.7,401.5 1879.2,384.5 1879.7,357.5 1880.2,327.0 1880.7,300.6 1881.2,284.6 1881.7,283.5 1882.2,298.1 1882.7,326.2 1883.2,362.3 1883.6,399.6 1884.1,430.6 1884.6,449.4 1885.1,452.9 1885.6,441.1 1886.1,417.4 1886.6,387.8 1887.1,359.8 1887.6,340.3 1888.1,334.5 1888.6,344.4 1889.1,369.0 1889.6,403.6 1890.0,441.8 1890.5,476.0 1891.0,499.8 1891.5,508.8 1892.0,502.1 1892.5,482.1 1893.0,454.0 1893.5,424.8 1894.0,402.0 1894.5,391.3 1895.0,396.1 1895.5,416.2 1896.0,448.1 1896.5,485.9 1896.9,522.2 1897.4,550.0 1897.9,564.2 1898.4,562.6 1898.9,546.4 1899.4,520.0 1899.9,490.2 1900.4,464.2 1900.9,448.7 1901.4,447.9 1901.9,462.7 1902.4,491.0 1902.9,527.2 1903.3,564.4 1903.8,595.3 1904.3,613.9 1904.8,617.1 1905.3,604.8 1905.8,580.7 1906.3,550.6 1906.8,521.9 1907.3,501.6 1907.8,494.9 1908.3,503.9 1908.8,527.4 1909.3,561.0 1909.7,597.9 1910.2,630.8 1910.7,653.2 1911.2,660.8 1911.7,652.6 1912.2,630.9 1912.7,601.1 1913.2,570.2 1913.7,545.4 1914.2,532.8 1914.7,535.5 1915.2,553.5 1915.7,583.3 1916.2,618.8 1916.6,652.8 1917.1,678.2 1917.6,689.9 1918.1,685.7 1918.6,666.9 1919.1,637.9 1919.6,605.3 1920.1,576.5 1920.6,558.1 1921.1,554.4 1921.6,566.2 1922.1,591.4 1922.6,624.5 1923.0,658.6 1923.5,686.2 1924.0,701.6 1924.5,701.5 1925.0,685.9 1925.5,658.3 1926.0,624.7 1926.5,592.6 1927.0,568.8 1927.5,558.5 1928.0,563.9 1928.5,583.8 1929.0,613.6 1929.5,646.9 1929.9,676.1 1930.4,694.7 1930.9,698.6 1931.4,686.6 1931.9,661.1 1932.4,627.4 1932.9,592.6 1933.4,564.1 1933.9,547.6 1934.4,546.4 1934.9,560.5 1935.4,586.4 1935.9,618.1 1936.3,648.2 1936.8,669.7 1937.3,677.5 1937.8,669.5 1938.3,646.8 1938.8,613.9 1939.3,577.5 1939.8,544.9 1940.3,522.7 1940.8,515.1 1941.3,523.2 1941.8,544.7 1942.3,574.1 1942.7,604.4 1943.2,628.5 1943.7,640.2 1944.2,636.5 1944.7,617.3 1945.2,586.2 1945.7,549.2 1946.2,513.6 1946.7,486.4 1947.2,472.8 1947.7,474.9 1948.2,491.5 1948.7,518.2 1949.2,548.3 1949.6,574.4 1950.1,590.1 1950.6,590.9 1951.1,576.0 1951.6,547.7 1952.1,511.2 1952.6,473.7 1953.1,442.5 1953.6,423.4 1954.1,419.7 1954.6,431.4 1955.1,454.9 1955.6,484.2 1956.0,512.1 1956.5,531.5 1957.0,537.2 1957.5,527.2 1958.0,502.5 1958.5,467.8 1959.0,429.7 1959.5,395.4 1960.0,371.6 1960.5,362.5 1961.0,369.2 1961.5,389.3 1962.0,417.5 1962.4,446.6 1962.9,469.6 1963.4,480.3 1963.9,475.7 1964.4,455.7 1964.9,423.9 1965.4,386.2 1965.9,350.1 1966.4,322.5 1966.9,308.5 1967.4,310.3 1967.9,326.8 1968.4,353.4 1968.9,383.5 1969.3,409.7 1969.8,425.5 1970.3,426.6 1970.8,412.1 1971.3,384.2 1971.8,348.3 1972.3,311.4 1972.8,280.9 1973.3,262.7 1973.8,259.9 1974.3,272.6 1974.8,297.2 1975.3,327.7 1975.7,356.8 1976.2,377.5 1976.7,384.7 1977.2,376.2 1977.7,353.2 1978.2,320.1 1978.7,283.7 1979.2,251.3 1979.7,229.4 1980.2,222.3 1980.7,231.1 1981.2,253.4 1981.7,283.8 1982.2,315.3 1982.6,340.6 1983.1,353.8 1983.6,351.7 1984.1,334.3 1984.6,305.1 1985.1,270.2 1985.6,236.9 1986.1,212.1 1986.6,201.0 1987.1,205.8 1987.6,225.3 1988.1,255.0 1988.6,288.2 1989.0,317.6 1989.5,336.7 1990.0,341.2 1990.5,329.9 1991.0,305.4 1991.5,273.0 1992.0,239.6 1992.5,212.6 1993.0,197.9 1993.5,198.7 1994.0,215.0 1994.5,243.3 1995.0,277.5 1995.4,310.3 1995.9,334.8 1996.4,345.7 1996.9,340.9 1997.4,321.7 1997.9,292.5 1998.4,260.0 1998.9,231.4 1999.4,213.4 1999.9,210.2 2000.4,222.8 2000.9,249.0 2001.4,283.2 2001.9,318.6 2002.3,347.8 2002.8,364.9 2003.3,366.7 2003.8,353.1 2004.3,327.8 2004.8,296.8 2005.3,267.2 2005.8,246.3 2006.3,239.0 2006.8,247.6 2007.3,270.8 2007.8,304.2 2008.3,341.1 2008.7,374.2 2009.2,396.9 2009.7,405.0 2010.2,397.3 2010.7,376.3 2011.2,347.4 2011.7,317.4 2012.2,293.8 2012.7,282.5 2013.2,286.6 2013.7,306.2 2014.2,337.6 2014.7,375.0 2015.1,410.9 2015.6,438.4 2016.1,452.4 2016.6,450.5 2017.1,434.2 2017.6,407.8 2018.1,378.0 2018.6,352.1 2019.1,336.7 2019.6,336.0 2020.1,351.2 2020.6,379.7 2021.1,416.3 2021.6,453.9 2022.0,485.3 2022.5,504.5 2023.0,508.3 2023.5,496.7 2024.0,473.3 2024.5,444.0 2025.0,416.2 2025.5,396.8 2026.0,391.1 2026.5,401.2 2027.0,425.7 2027.5,460.4 2028.0,498.6 2028.4,532.7 2028.9,556.5 2029.4,565.4 2029.9,558.6 2030.4,538.4 2030.9,510.1 2031.4,480.8 2031.9,457.6 2032.4,446.7 2032.9,451.1 2033.4,470.9 2033.9,502.5 2034.4,539.9 2034.9,575.7 2035.3,603.1 2035.8,616.8 2036.3,614.6 2036.8,597.8 2037.3,570.9 2037.8,540.5 2038.3,513.9 2038.8,497.7 2039.3,496.2 2039.8,510.3 2040.3,537.8 2040.8,573.3 2041.3,609.7 2041.7,639.7 2042.2,657.5 2042.7,659.8 2043.2,646.7 2043.7,621.6 2044.2,590.5 2044.7,560.9 2045.2,539.7 2045.7,531.9 2046.2,539.9 2046.7,562.4 2047.2,594.9 2047.7,630.7 2048.1,662.5 2048.6,683.8 2049.1,690.3 2049.6,680.9 2050.1,658.1 2050.6,627.1 2051.1,594.9 2051.6,569.0 2052.1,555.1 2052.6,556.6 2053.1,573.4 2053.6,601.9 2054.1,636.1 2054.6,668.8 2055.0,693.0 2055.5,703.4 2056.0,697.9 2056.5,677.7 2057.0,647.4 2057.5,613.5 2058.0,583.4 2058.5,563.7 2059.0,558.5 2059.5,569.1 2060.0,592.9 2060.5,624.7 2061.0,657.4 2061.4,683.7 2061.9,697.8 2062.4,696.3 2062.9,679.4 2063.4,650.4 2063.9,615.6 2064.4,582.1 2064.9,557.0 2065.4,545.4 2065.9,549.5 2066.4,568.1 2066.9,596.7 2067.4,628.6 2067.8,656.6 2068.3,674.0 2068.8,676.6 2069.3,663.4 2069.8,636.6 2070.3,601.8 2070.8,565.8 2071.3,536.1 2071.8,518.4 2072.3,516.1 2072.8,529.1 2073.3,553.9 2073.8,584.5 2074.3,613.5 2074.7,634.0 2075.2,640.8 2075.7,631.7 2076.2,608.0 2076.7,574.2 2077.2,536.8 2077.7,503.3 2078.2,480.2 2078.7,471.8 2079.2,479.0 2079.7,499.6 2080.2,528.2 2080.7,557.8 2081.1,581.1 2081.6,592.1 2082.1,587.7 2082.6,567.8 2083.1,536.1 2083.6,498.5 2084.1,462.3 2084.6,434.5 2085.1,420.4 2085.6,422.0 2086.1,438.2 2086.6,464.4 2087.1,494.1 2087.6,519.8 2088.0,535.1 2088.5,535.6 2089.0,520.4 2089.5,491.8 2090.0,455.1 2090.5,417.4 2091.0,386.0 2091.5,366.8 2092.0,363.0 2092.5,374.6 2093.0,398.1 2093.5,427.4 2094.0,455.3 2094.4,474.7 2094.9,480.6 2095.4,470.6 2095.9,446.2 2096.4,411.6 2096.9,373.7 2097.4,339.6 2097.9,316.1 2098.4,307.3 2098.9,314.4 2099.4,334.8 2099.9,363.4 2100.4,393.0 2100.8,416.4 2101.3,427.6 2101.8,423.5 2102.3,404.0 2102.8,372.8 2103.3,335.7 2103.8,300.2 2104.3,273.3 2104.8,260.0 2105.3,262.5 2105.8,279.7 2106.3,307.0 2106.8,337.9 2107.3,365.0 2107.7,381.6 2108.2,383.6 2108.7,369.9 2109.2,343.0 2109.7,308.0 2110.2,272.1 2110.7,242.6 2111.2,225.3 2111.7,223.6 2112.2,237.3 2112.7,262.9 2113.2,294.5 2113.7,324.7 2114.1,346.6 2114.6,354.9 2115.1,347.5 2115.6,325.6 2116.1,293.8 2116.6,258.5 2117.1,227.3 2117.6,206.7 2118.1,200.8 2118.6,210.9 2119.1,234.4 2119.6,266.0 2120.1,298.8 2120.5,325.4 2121.0,339.9 2121.5,339.1 2122.0,323.0 2122.5,295.2 2123.0,261.6 2123.5,229.6 2124.0,206.1 2124.5,196.4 2125.0,202.5 2125.5,223.4 2126.0,254.4 2126.5,288.9 2127.0,319.7 2127.4,340.1 2127.9,345.9 2128.4,336.0 2128.9,312.8 2129.4,281.7 2129.9,249.6 2130.4,223.9 2130.9,210.5 2131.4,212.7 2131.9,230.3 2132.4,259.8 2132.9,295.3 2133.4,329.4 2133.8,355.1 2134.3,367.3 2134.8,363.7 2135.3,345.8 2135.8,317.8 2136.3,286.4 2136.8,259.0 2137.3,242.1 2137.8,240.1 2138.3,253.9 2138.8,281.1 2139.3,316.5 2139.8,352.9 2140.3,383.2 2140.7,401.3 2141.2,404.1 2141.7,391.6 2142.2,367.2 2142.7,337.1 2143.2,308.5 2143.7,288.5 2144.2,282.1 2144.7,291.5 2145.2,315.6 2145.7,349.8 2146.2,387.5 2146.7,421.3 2147.1,444.8 2147.6,453.5 2148.1,446.6 2148.6,426.2 2149.1,397.9 2149.6,368.6 2150.1,345.5 2150.6,334.7 2151.1,339.4 2151.6,359.4 2152.1,391.3 2152.6,429.1 2153.1,465.4 2153.5,493.3 2154.0,507.6 2154.5,506.0 2155.0,490.0 2155.5,463.8 2156.0,434.2 2156.5,408.5 2157.0,393.2 2157.5,392.7 2158.0,407.9 2158.5,436.5 2159.0,473.1 2159.5,510.7 2160.0,542.1 2160.4,561.2 2160.9,564.9 2161.4,553.2 2161.9,529.6 2162.4,500.1 2162.9,472.0 2163.4,452.4 2163.9,446.4 2164.4,456.1 2164.9,480.4 2165.4,514.6 2165.9,552.4 2166.4,586.1 2166.8,609.3 2167.3,617.8 2167.8,610.5 2168.3,589.7 2168.8,560.8 2169.3,530.8 2169.8,507.1 2170.3,495.4 2170.8,499.2 2171.3,518.2 2171.8,549.1 2172.3,585.7 2172.8,620.7 2173.3,647.3 2173.7,660.1 2174.2,657.0 2174.7,639.4 2175.2,611.5 2175.7,580.1 2176.2,552.6 2176.7,535.4 2177.2,532.9 2177.7,546.0 2178.2,572.4 2178.7,606.8 2179.2,642.1 2179.7,671.1 2180.1,687.8 2180.6,688.9 2181.1,674.6 2181.6,648.3 2182.1,616.1 2182.6,585.3 2183.1,562.8 2183.6,553.9 2184.1,560.6 2184.6,581.8 2185.1,613.0 2185.6,647.6 2186.1,678.1 2186.5,698.1 2187.0,703.3 2187.5,692.6 2188.0,668.5 2188.5,636.1 2189.0,602.7 2189.5,575.4 2190.0,560.2 2190.5,560.4 2191.0,575.8 2191.5,603.0 2192.0,635.9 2192.5,667.2 2193.0,690.0 2193.4,699.1 2193.9,692.3 2194.4,670.8 2194.9,639.1 2195.4,603.9 2195.9,572.5 2196.4,551.4 2196.9,545.0 2197.4,554.3 2197.9,576.8 2198.4,607.3 2198.9,638.8 2199.4,663.8 2199.8,676.6 2200.3,673.9 2200.8,655.7 2201.3,625.6 2201.8,589.5 2202.3,554.9 2202.8,528.6 2203.3,515.9 2203.8,518.9 2204.3,536.3 2204.8,563.8 2205.3,594.7 2205.8,621.6 2206.2,637.9 2206.7,639.5 2207.2,625.3 2207.7,597.6 2208.2,561.7 2208.7,524.8 2209.2,494.2 2209.7,475.6 2210.2,472.5 2210.7,484.6 2211.2,508.6 2211.7,538.4 2212.2,566.6 2212.7,586.3 2213.1,592.4 2213.6,582.7 2214.1,558.3 2214.6,523.8 2215.1,485.9 2215.6,451.8 2216.1,428.1 2216.6,419.2 2217.1,425.9 2217.6,446.1 2218.1,474.3 2218.6,503.4 2219.1,526.3 2219.5,537.0 2220.0,532.3 2220.5,512.2 2221.0,480.2 2221.5,442.3 2222.0,405.9 2222.5,378.0 2223.0,363.8 2223.5,365.3 2224.0,381.4 2224.5,407.6 2225.0,437.3 2225.5,463.0 2226.0,478.4 2226.4,479.0 2226.9,463.9 2227.4,435.5 2227.9,399.0 2228.4,361.5 2228.9,330.4 2229.4,311.4 2229.9,308.0 2230.4,319.9 2230.9,343.8 2231.4,373.5 2231.9,401.8 2232.4,421.7 2232.8,428.0 2233.3,418.6 2233.8,394.7 2234.3,360.7 2234.8,323.4 2235.3,290.0 2235.8,267.1 2236.3,259.0 2236.8,266.8 2237.3,288.0 2237.8,317.3 2238.3,347.7 2238.8,371.9 2239.2,384.0 2239.7,380.7 2240.2,362.2 2240.7,331.9 2241.2,295.8 2241.7,261.2 2242.2,235.2 2242.7,222.9 2243.2,226.5 2243.7,244.7 2244.2,273.1 2244.7,305.1 2245.2,333.2 2245.7,351.0 2246.1,354.2 2246.6,341.6 2247.1,315.8 2247.6,282.0 2248.1,247.3 2248.6,219.0 2249.1,203.0 2249.6,202.5 2250.1,217.4 2250.6,244.3 2251.1,277.2 2251.6,308.7 2252.1,331.8 2252.5,341.4 2253.0,335.3 2253.5,314.8 2254.0,284.3 2254.5,250.4 2255.0,220.5 2255.5,201.2 2256.0,196.7 2256.5,208.0 2257.0,232.8 2257.5,265.9 2258.0,300.0 2258.5,327.9 2258.9,343.8 2259.4,344.3 2259.9,329.5 2260.4,303.0 2260.9,270.7 2261.4,240.0 2261.9,217.9 2262.4,209.5 2262.9,216.9 2263.4,239.0 2263.9,271.3 2264.4,307.2 2264.9,339.2 2265.4,360.8 2265.8,367.9 2266.3,359.2 2266.8,337.3 2267.3,307.3 2267.8,276.4 2268.3,251.9 2268.8,239.7 2269.3,243.0 2269.8,261.7 2270.3,292.3 2270.8,328.9 2271.3,364.1 2271.8,390.8 2272.2,404.0 2272.7,401.5 2273.2,384.5 2273.7,357.5 2274.2,327.0 2274.7,300.6 2275.2,284.6 2275.7,283.5 2276.2,298.1 2276.7,326.2 2277.2,362.3 2277.7,399.6 2278.2,430.6 2278.7,449.4 2279.1,452.9 2279.6,441.1 2280.1,417.4 2280.6,387.8 2281.1,359.8 2281.6,340.3 2282.1,334.5 2282.6,344.4 2283.1,369.0 2283.6,403.6 2284.1,441.8 2284.6,476.0 2285.1,499.8 2285.5,508.8 2286.0,502.1 2286.5,482.1 2287.0,454.0 2287.5,424.8 2288.0,402.0 2288.5,391.3 2289.0,396.1 2289.5,416.2 2290.0,448.1 2290.5,485.9 2291.0,522.2 2291.5,550.0 2291.9,564.2 2292.4,562.6 2292.9,546.4 2293.4,520.0 2293.9,490.2 2294.4,464.2 2294.9,448.7 2295.4,447.9 2295.9,462.7 2296.4,491.0 2296.9,527.2 2297.4,564.4 2297.9,595.3 2298.4,613.9 2298.8,617.1 2299.3,604.8 2299.8,580.7 2300.3,550.6 2300.8,521.9 2301.3,501.6 2301.8,494.9 2302.3,503.9 2302.8,527.4 2303.3,561.0 2303.8,597.9 2304.3,630.8 2304.8,653.2 2305.2,660.8 2305.7,652.6 2306.2,630.9 2306.7,601.1 2307.2,570.2 2307.7,545.4 2308.2,532.8 2308.7,535.5 2309.2,553.5 2309.7,583.3 2310.2,618.8 2310.7,652.8 2311.2,678.2 2311.6,689.9 2312.1,685.7 2312.6,666.9 2313.1,637.9 2313.6,605.3 2314.1,576.5 2314.6,558.1 2315.1,554.4 2315.6,566.2 2316.1,591.4 2316.6,624.5 2317.1,658.6 2317.6,686.2 2318.1,701.6 2318.5,701.5 2319.0,685.9 2319.5,658.3 2320.0,624.7 2320.5,592.6 2321.0,568.8 2321.5,558.5 2322.0,563.9 2322.5,583.8 2323.0,613.6 2323.5,646.9 2324.0,676.1 2324.5,694.7 2324.9,698.6 2325.4,686.6 2325.9,661.1 2326.4,627.4 2326.9,592.6 2327.4,564.1 2327.9,547.6 2328.4,546.4 2328.9,560.5 2329.4,586.4 2329.9,618.1 2330.4,648.2 2330.9,669.7 2331.4,677.5 2331.8,669.5 2332.3,646.8 2332.8,613.9 2333.3,577.5 2333.8,544.9 2334.3,522.7 2334.8,515.1 2335.3,523.2 2335.8,544.7 2336.3,574.1 2336.8,604.4 2337.3,628.5 2337.8,640.2 2338.2,636.5 2338.7,617.3 2339.2,586.2 2339.7,549.2 2340.2,513.6 2340.7,486.4 2341.2,472.8 2341.7,474.9 2342.2,491.5 2342.7,518.2 2343.2,548.3 2343.7,574.4 2344.2,590.1 2344.6,590.9 2345.1,576.0 2345.6,547.7 2346.1,511.2 2346.6,473.7 2347.1,442.5 2347.6,423.4 2348.1,419.7 2348.6,431.4 2349.1,454.9 2349.6,484.2 2350.1,512.1 2350.6,531.5 2351.1,537.2 2351.5,527.2 2352.0,502.5 2352.5,467.8 2353.0,429.7 2353.5,395.4 2354.0,371.6 2354.5,362.5 2355.0,369.2 2355.5,389.3 2356.0,417.5 2356.5,446.6 2357.0,469.6 2357.5,480.3 2357.9,475.7 2358.4,455.7 2358.9,423.9 2359.4,386.2 2359.9,350.1 2360.4,322.5 2360.9,308.5 2361.4,310.3 2361.9,326.8 2362.4,353.4 2362.9,383.5 2363.4,409.7 2363.9,425.5 2364.3,426.6 2364.8,412.1 2365.3,384.2 2365.8,348.3 2366.3,311.4 2366.8,280.9 2367.3,262.7 2367.8,259.9 2368.3,272.6 2368.8,297.2 2369.3,327.7 2369.8,356.8 2370.3,377.5 2370.8,384.7 2371.2,376.2 2371.7,353.2 2372.2,320.1 2372.7,283.7 2373.2,251.3 2373.7,229.4 2374.2,222.3 2374.7,231.1 2375.2,253.4 2375.7,283.8 2376.2,315.3 2376.7,340.6 2377.2,353.8 2377.6,351.7 2378.1,334.3 2378.6,305.1 2379.1,270.2 2379.6,236.9 2380.1,212.1 2380.6,201.0 2381.1,205.8 2381.6,225.3 2382.1,255.0 2382.6,288.2 2383.1,317.6 2383.6,336.7 2384.1,341.2 2384.5,329.9 2385.0,305.4 2385.5,273.0 2386.0,239.6 2386.5,212.6 2387.0,197.9 2387.5,198.7 2388.0,215.0 2388.5,243.3 2389.0,277.5 2389.5,310.3 2390.0,334.8 2390.5,345.7 2390.9,340.9 2391.4,321.7 2391.9,292.5 2392.4,260.0 2392.9,231.4 2393.4,213.4 2393.9,210.2 2394.4,222.8 2394.9,249.0 2395.4,283.2 2395.9,318.6 2396.4,347.8 2396.9,364.9 2397.3,366.7 2397.8,353.1 2398.3,327.8 2398.8,296.8 2399.3,267.2 2399.8,246.3 2400.3,239.0 2400.8,247.6 2401.3,270.8 2401.8,304.2 2402.3,341.1 2402.8,374.2 2403.3,396.9 2403.8,405.0 2404.2,397.3 2404.7,376.3 2405.2,347.4 2405.7,317.4 2406.2,293.8 2406.7,282.5 2407.2,286.6 2407.7,306.2 2408.2,337.6 2408.7,375.0 2409.2,410.9 2409.7,438.4 2410.2,452.4 2410.6,450.5 2411.1,434.2 2411.6,407.8 2412.1,378.0 2412.6,352.1 2413.1,336.7 2413.6,336.0 2414.1,351.2 2414.6,379.7 2415.1,416.3 2415.6,453.9 2416.1,485.3 2416.6,504.5 2417.0,508.3 2417.5,496.7 2418.0,473.3 2418.5,444.0 2419.0,416.2 2419.5,396.8 2420.0,391.1 2420.5,401.2 2421.0,425.7 2421.5,460.4 2422.0,498.6 2422.5,532.7 2423.0,556.5 2423.5,565.4 2423.9,558.6 2424.4,538.4 2424.9,510.1 2425.4,480.8 2425.9,457.6 2426.4,446.7 2426.9,451.1 2427.4,470.9 2427.9,502.5 2428.4,539.9 2428.9,575.7 2429.4,603.1 2429.9,616.8 2430.3,614.6 2430.8,597.8 2431.3,570.9 2431.8,540.5 2432.3,513.9 2432.8,497.7 2433.3,496.2 2433.8,510.3 2434.3,537.8 2434.8,573.3 2435.3,609.7 2435.8,639.7 2436.3,657.5 2436.8,659.8 2437.2,646.7 2437.7,621.6 2438.2,590.5 2438.7,560.9 2439.2,539.7 2439.7,531.9 2440.2,539.9 2440.7,562.4 2441.2,594.9 2441.7,630.7 2442.2,662.5 2442.7,683.8 2443.2,690.3 2443.6,680.9 2444.1,658.1 2444.6,627.1 2445.1,594.9 2445.6,569.0 2446.1,555.1 2446.6,556.6 2447.1,573.4 2447.6,601.9 2448.1,636.1 2448.6,668.8 2449.1,693.0 2449.6,703.4 2450.0,697.9 2450.5,677.7 2451.0,647.4 2451.5,613.5 2452.0,583.4 2452.5,563.7 2453.0,558.5 2453.5,569.1 2454.0,592.9 2454.5,624.7 2455.0,657.4 2455.5,683.7 2456.0,697.8 2456.5,696.3 2456.9,679.4 2457.4,650.4 2457.9,615.6 2458.4,582.1 2458.9,557.0 2459.4,545.4 2459.9,549.5 2460.4,568.1 2460.9,596.7 2461.4,628.6 2461.9,656.6 2462.4,674.0 2462.9,676.6 2463.3,663.4 2463.8,636.6 2464.3,601.8 2464.8,565.8 2465.3,536.1 2465.8,518.4 2466.3,516.1 2466.8,529.1 2467.3,553.9 2467.8,584.5 2468.3,613.5 2468.8,634.0 2469.3,640.8 2469.8,631.7 2470.2,608.0 2470.7,574.2 2471.2,536.8 2471.7,503.3 2472.2,480.2 2472.7,471.8 2473.2,479.0 2473.7,499.6 2474.2,528.2 2474.7,557.8 2475.2,581.1 2475.7,592.1 2476.2,587.7 2476.6,567.8 2477.1,536.1 2477.6,498.5 2478.1,462.3 2478.6,434.5 2479.1,420.4 2479.6,422.0 2480.1,438.2 2480.6,464.4 2481.1,494.1 2481.6,519.8 2482.1,535.1 2482.6,535.6 2483.0,520.4 2483.5,491.8 2484.0,455.1 2484.5,417.4 2485.0,386.0 2485.5,366.8 2486.0,363.0 2486.5,374.6 2487.0,398.1 2487.5,427.4 2488.0,455.3 2488.5,474.7 2489.0,480.6 2489.5,470.6 2489.9,446.2 2490.4,411.6 2490.9,373.7 2491.4,339.6 2491.9,316.1 2492.4,307.3 2492.9,314.4 2493.4,334.8 2493.9,363.4 2494.4,393.0 2494.9,416.4 2495.4,427.6 2495.9,423.5 2496.3,404.0 2496.8,372.8 2497.3,335.7 2497.8,300.2 2498.3,273.3 2498.8,260.0 2499.3,262.5 2499.8,279.7 2500.3,307.0 2500.8,337.9 2501.3,365.0 2501.8,381.6 2502.3,383.6 2502.7,369.9 2503.2,343.0 2503.7,308.0 2504.2,272.1 2504.7,242.6 2505.2,225.3 2505.7,223.6 2506.2,237.3 2506.7,262.9 2507.2,294.5 2507.7,324.7 2508.2,346.6 2508.7,354.9 2509.2,347.5 2509.6,325.6 2510.1,293.8 2510.6,258.5 2511.1,227.3 2511.6,206.7 2512.1,200.8 2512.6,210.9 2513.1,234.4 2513.6,266.0 2514.1,298.8 2514.6,325.4 2515.1,339.9 2515.6,339.1 2516.0,323.0 2516.5,295.2 2517.0,261.6 2517.5,229.6 2518.0,206.1 2518.5,196.4 2519.0,202.5 2519.5,223.4 2520.0,254.4 2520.5,288.9 2521.0,319.7 2521.5,340.1 2522.0,345.9 2522.5,336.0 2522.9,312.8 2523.4,281.7 2523.9,249.6 2524.4,223.9 2524.9,210.5 2525.4,212.7 2525.9,230.3 2526.4,259.8 2526.9,295.3 2527.4,329.4 2527.9,355.1 2528.4,367.3 2528.9,363.7 2529.3,345.8 2529.8,317.8 2530.3,286.4 2530.8,259.0 2531.3,242.1 2531.8,240.1 2532.3,253.9 2532.8,281.1 2533.3,316.5 2533.8,352.9 2534.3,383.2 2534.8,401.3 2535.3,404.1 2535.7,391.6 2536.2,367.2 2536.7,337.1 2537.2,308.5 2537.7,288.5 2538.2,282.1 2538.7,291.5 2539.2,315.6 2539.7,349.8 2540.2,387.5 2540.7,421.3 2541.2,444.8 2541.7,453.5 2542.2,446.6 2542.6,426.2 2543.1,397.9 2543.6,368.6 2544.1,345.5 2544.6,334.7 2545.1,339.4 2545.6,359.4 2546.1,391.3 2546.6,429.1 2547.1,465.4 2547.6,493.3 2548.1,507.6 2548.6,506.0 2549.0,490.0 2549.5,463.8 2550.0,434.2 2550.5,408.5 2551.0,393.2 2551.5,392.7 2552.0,407.9 2552.5,436.5 2553.0,473.1 2553.5,510.7 2554.0,542.1 2554.5,561.2 2555.0,564.9 2555.4,553.2 2555.9,529.6 2556.4,500.1 2556.9,472.0 2557.4,452.4 2557.9,446.4 2558.4,456.1 2558.9,480.4 2559.4,514.6 2559.9,552.4 2560.4,586.1 2560.9,609.3 2561.4,617.8 2561.9,610.5 2562.3,589.7 2562.8,560.8 2563.3,530.8 2563.8,507.1 2564.3,495.4 2564.8,499.2 2565.3,518.2 2565.8,549.1 2566.3,585.7 2566.8,620.7 2567.3,647.3 2567.8,660.1 2568.3,657.0 2568.7,639.4 2569.2,611.5 2569.7,580.1 2570.2,552.6 2570.7,535.4 2571.2,532.9 2571.7,546.0 2572.2,572.4 2572.7,606.8 2573.2,642.1 2573.7,671.1 2574.2,687.8 2574.7,688.9 2575.2,674.6 2575.6,648.3 2576.1,616.1 2576.6,585.3 2577.1,562.8 2577.6,553.9 2578.1,560.6 2578.6,581.8 2579.1,613.0 2579.6,647.6 2580.1,678.1 2580.6,698.1 2581.1,703.3 2581.6,692.6 2582.0,668.5 2582.5,636.1 2583.0,602.7 2583.5,575.4 2584.0,560.2 2584.5,560.4 2585.0,575.8 2585.5,603.0 2586.0,635.9 2586.5,667.2 2587.0,690.0 2587.5,699.1 2588.0,692.3 2588.4,670.8 2588.9,639.1 2589.4,603.9 2589.9,572.5 2590.4,551.4 2590.9,545.0 2591.4,554.3 2591.9,576.8 2592.4,607.3 2592.9,638.8 2593.4,663.8 2593.9,676.6 2594.4,673.9 2594.9,655.7 2595.3,625.6 2595.8,589.5 2596.3,554.9 2596.8,528.6 2597.3,515.9 2597.8,518.9 2598.3,536.3 2598.8,563.8 2599.3,594.7 2599.8,621.6 2600.3,637.9 2600.8,639.5 2601.3,625.3 2601.7,597.6 2602.2,561.7 2602.7,524.8 2603.2,494.2 2603.7,475.6 2604.2,472.5 2604.7,484.6 2605.2,508.6 2605.7,538.4 2606.2,566.6 2606.7,586.3 2607.2,592.4 2607.7,582.7 2608.1,558.3 2608.6,523.8 2609.1,485.9 2609.6,451.8 2610.1,428.1 2610.6,419.2 2611.1,425.9 2611.6,446.1 2612.1,474.3 2612.6,503.4 2613.1,526.3 2613.6,537.0 2614.1,532.3 2614.6,512.2 2615.0,480.2 2615.5,442.3 2616.0,405.9 2616.5,378.0 2617.0,363.8 2617.5,365.3 2618.0,381.4 2618.5,407.6 2619.0,437.3 2619.5,463.0 2620.0,478.4 2620.5,479.0 2621.0,463.9 2621.4,435.5 2621.9,399.0 2622.4,361.5 2622.9,330.4 2623.4,311.4 2623.9,308.0 2624.4,319.9 2624.9,343.8 2625.4,373.5 2625.9,401.8 2626.4,421.7 2626.9,428.0 2627.4,418.6 2627.9,394.7 2628.3,360.7 2628.8,323.4 2629.3,290.0 2629.8,267.1 2630.3,259.0 2630.8,266.8 2631.3,288.0 2631.8,317.3 2632.3,347.7 2632.8,371.9 2633.3,384.0 2633.8,380.7 2634.3,362.2 2634.7,331.9 2635.2,295.8 2635.7,261.2 2636.2,235.2 2636.7,222.9 2637.2,226.5 2637.7,244.7 2638.2,273.1 2638.7,305.1 2639.2,333.2 2639.7,351.0 2640.2,354.2 2640.7,341.6 2641.1,315.8 2641.6,282.0 2642.1,247.3 2642.6,219.0 2643.1,203.0 2643.6,202.5 2644.1,217.4 2644.6,244.3 2645.1,277.2 2645.6,308.7 2646.1,331.8 2646.6,341.4 2647.1,335.3 2647.6,314.8 2648.0,284.3 2648.5,250.4 2649.0,220.5 2649.5,201.2 2650.0,196.7 2650.5,208.0 2651.0,232.8 2651.5,265.9 2652.0,300.0 2652.5,327.9 2653.0,343.8 2653.5,344.3 2654.0,329.5 2654.4,303.0 2654.9,270.7 2655.4,240.0 2655.9,217.9 2656.4,209.5 2656.9,216.9 2657.4,239.0 2657.9,271.3 2658.4,307.2 2658.9,339.2 2659.4,360.8 2659.9,367.9 2660.4,359.2 2660.8,337.3 2661.3,307.3 2661.8,276.4 2662.3,251.9 2662.8,239.7 2663.3,243.0 2663.8,261.7 2664.3,292.3 2664.8,328.9 2665.3,364.1 2665.8,390.8 2666.3,404.0 2666.8,401.5 2667.3,384.5 2667.7,357.5 2668.2,327.0 2668.7,300.6 2669.2,284.6 2669.7,283.5 2670.2,298.1 2670.7,326.2 2671.2,362.3 2671.7,399.6 2672.2,430.6 2672.7,449.4 2673.2,452.9 2673.7,441.1 2674.1,417.4 2674.6,387.8 2675.1,359.8 2675.6,340.3 2676.1,334.5 2676.6,344.4 2677.1,369.0 2677.6,403.6 2678.1,441.8 2678.6,476.0 2679.1,499.8 2679.6,508.8 2680.1,502.1 2680.6,482.1 2681.0,454.0 2681.5,424.8 2682.0,402.0 2682.5,391.3 2683.0,396.1 2683.5,416.2 2684.0,448.1 2684.5,485.9 2685.0,522.2 2685.5,550.0 2686.0,564.2 2686.5,562.6 2687.0,546.4 2687.4,520.0 2687.9,490.2 2688.4,464.2 2688.9,448.7 2689.4,447.9 2689.9,462.7 2690.4,491.0 2690.9,527.2 2691.4,564.4 2691.9,595.3 2692.4,613.9 2692.9,617.1 2693.4,604.8 2693.8,580.7 2694.3,550.6 2694.8,521.9 2695.3,501.6 2695.8,494.9 2696.3,503.9 2696.8,527.4 2697.3,561.0 2697.8,597.9 2698.3,630.8 2698.8,653.2 2699.3,660.8 2699.8,652.6 2700.3,630.9 2700.7,601.1 2701.2,570.2 2701.7,545.4 2702.2,532.8 2702.7,535.5 2703.2,553.5 2703.7,583.3 2704.2,618.8 2704.7,652.8 2705.2,678.2 2705.7,689.9 2706.2,685.7 2706.7,666.9 2707.1,637.9 2707.6,605.3 2708.1,576.5 2708.6,558.1 2709.1,554.4 2709.6,566.2 2710.1,591.4 2710.6,624.5 2711.1,658.6 2711.6,686.2 2712.1,701.6 2712.6,701.5 2713.1,685.9 2713.5,658.3 2714.0,624.7 2714.5,592.6 2715.0,568.8 2715.5,558.5 2716.0,563.9 2716.5,583.8 2717.0,613.6 2717.5,646.9 2718.0,676.1 2718.5,694.7 2719.0,698.6 2719.5,686.6 2720.0,661.1 2720.4,627.4 2720.9,592.6 2721.4,564.1 2721.9,547.6 2722.4,546.4 2722.9,560.5 2723.4,586.4 2723.9,618.1 2724.4,648.2 2724.9,669.7 2725.4,677.5 2725.9,669.5 2726.4,646.8 2726.8,613.9 2727.3,577.5 2727.8,544.9 2728.3,522.7 2728.8,515.1 2729.3,523.2 2729.8,544.7 2730.3,574.1 2730.8,604.4 2731.3,628.5 2731.8,640.2 2732.3,636.5 2732.8,617.3 2733.3,586.2 2733.7,549.2 2734.2,513.6 2734.7,486.4 2735.2,472.8 2735.7,474.9 2736.2,491.5 2736.7,518.2 2737.2,548.3 2737.7,574.4 2738.2,590.1 2738.7,590.9 2739.2,576.0 2739.7,547.7 2740.1,511.2 2740.6,473.7 2741.1,442.5 2741.6,423.4 2742.1,419.7 2742.6,431.4 2743.1,454.9 2743.6,484.2 2744.1,512.1 2744.6,531.5 2745.1,537.2 2745.6,527.2 2746.1,502.5 2746.5,467.8 2747.0,429.7 2747.5,395.4 2748.0,371.6 2748.5,362.5 2749.0,369.2 2749.5,389.3 2750.0,417.5 2750.5,446.6 2751.0,469.6 2751.5,480.3 2752.0,475.7 2752.5,455.7 2753.0,423.9 2753.4,386.2 2753.9,350.1 2754.4,322.5 2754.9,308.5 2755.4,310.3 2755.9,326.8 2756.4,353.4 2756.9,383.5 2757.4,409.7 2757.9,425.5 2758.4,426.6 2758.9,412.1 2759.4,384.2 2759.8,348.3 2760.3,311.4 2760.8,280.9 2761.3,262.7 2761.8,259.9 2762.3,272.6 2762.8,297.2 2763.3,327.7 2763.8,356.8 2764.3,377.5 2764.8,384.7 2765.3,376.2 2765.8,353.2 2766.3,320.1 2766.7,283.7 2767.2,251.3 2767.7,229.4 2768.2,222.3 2768.7,231.1 2769.2,253.4 2769.7,283.8 2770.2,315.3 2770.7,340.6 2771.2,353.8 2771.7,351.7 2772.2,334.3 2772.7,305.1 2773.1,270.2 2773.6,236.9 2774.1,212.1 2774.6,201.0 2775.1,205.8 2775.6,225.3 2776.1,255.0 2776.6,288.2 2777.1,317.6 2777.6,336.7 2778.1,341.2 2778.6,329.9 2779.1,305.4 2779.5,273.0 2780.0,239.6 2780.5,212.6 2781.0,197.9 2781.5,198.7 2782.0,215.0 2782.5,243.3 2783.0,277.5 2783.5,310.3 2784.0,334.8 2784.5,345.7 2785.0,340.9 2785.5,321.7 2786.0,292.5 2786.4,260.0 2786.9,231.4 2787.4,213.4 2787.9,210.2 2788.4,222.8 2788.9,249.0 2789.4,283.2 2789.9,318.6 2790.4,347.8 2790.9,364.9 2791.4,366.7 2791.9,353.1 2792.4,327.8 2792.8,296.8 2793.3,267.2 2793.8,246.3 2794.3,239.0 2794.8,247.6 2795.3,270.8 2795.8,304.2 2796.3,341.1 2796.8,374.2 2797.3,396.9 2797.8,405.0 2798.3,397.3 2798.8,376.3 2799.2,347.4 2799.7,317.4 2800.2,293.8 2800.7,282.5 2801.2,286.6 2801.7,306.2 2802.2,337.6 2802.7,375.0 2803.2,410.9 2803.7,438.4 2804.2,452.4 2804.7,450.5 2805.2,434.2 2805.7,407.8 2806.1,378.0 2806.6,352.1 2807.1,336.7 2807.6,336.0 2808.1,351.2 2808.6,379.7 2809.1,416.3 2809.6,453.9 2810.1,485.3 2810.6,504.5 2811.1,508.3 2811.6,496.7 2812.1,473.3 2812.5,444.0 2813.0,416.2 2813.5,396.8 2814.0,391.1 2814.5,401.2 2815.0,425.7 2815.5,460.4 2816.0,498.6 2816.5,532.7 2817.0,556.5 2817.5,565.4 2818.0,558.6 2818.5,538.4 2819.0,510.1 2819.4,480.8 2819.9,457.6 2820.4,446.7 2820.9,451.1 2821.4,470.9 2821.9,502.5 2822.4,539.9 2822.9,575.7 2823.4,603.1 2823.9,616.8 2824.4,614.6 2824.9,597.8 2825.4,570.9 2825.8,540.5 2826.3,513.9 2826.8,497.7 2827.3,496.2 2827.8,510.3 2828.3,537.8 2828.8,573.3 2829.3,609.7 2829.8,639.7 2830.3,657.5 2830.8,659.8 2831.3,646.7 2831.8,621.6 2832.2,590.5 2832.7,560.9 2833.2,539.7 2833.7,531.9 2834.2,539.9 2834.7,562.4 2835.2,594.9 2835.7,630.7 2836.2,662.5 2836.7,683.8 2837.2,690.3 2837.7,680.9 2838.2,658.1 2838.7,627.1 2839.1,594.9 2839.6,569.0 2840.1,555.1 2840.6,556.6 2841.1,573.4 2841.6,601.9 2842.1,636.1 2842.6,668.8 2843.1,693.0 2843.6,703.4 2844.1,697.9 2844.6,677.7 2845.1,647.4 2845.5,613.5 2846.0,583.4 2846.5,563.7 2847.0,558.5 2847.5,569.1 2848.0,592.9 2848.5,624.7 2849.0,657.4 2849.5,683.7 2850.0,697.8 2850.5,696.3 2851.0,679.4 2851.5,650.4 2851.9,615.6 2852.4,582.1"/>
<polyline fill="none" stroke="#ffe45e" stroke-width="2" stroke-linejoin="round" points="54.9,1030.8 55.6,1032.1 56.2,1033.0 56.9,1034.5 57.5,1037.3 58.2,1041.6 58.8,1047.3 59.5,1053.6 60.2,1059.5 60.8,1064.2 61.5,1067.4 62.1,1069.4 62.8,1071.0 63.4,1073.1 64.1,1076.5 64.8,1081.4 65.4,1087.7 66.1,1094.4 66.7,1100.7 67.4,1105.9 68.0,1109.4 68.7,1111.8 69.3,1113.7 70.0,1116.0 70.7,1119.6 71.3,1124.7 72.0,1131.0 72.6,1137.8 73.3,1144.2 73.9,1149.3 74.6,1152.8 75.3,1155.1 75.9,1156.8 76.6,1159.0 77.2,1162.3 77.9,1167.1 78.5,1173.1 79.2,1179.6 79.9,1185.6 80.5,1190.2 81.2,1193.3 81.8,1195.0 82.5,1196.2 83.1,1197.7 83.8,1200.4 84.5,1204.6 85.1,1209.9 85.8,1215.6 86.4,1220.8 87.1,1224.6 87.7,1226.8 88.4,1227.7 89.0,1227.9 89.7,1228.6 90.4,1230.3 91.0,1233.4 91.7,1237.7 92.3,1242.4 93.0,1246.4 93.6,1249.2 94.3,1250.2 95.0,1249.9 95.6,1249.0 96.3,1248.4 96.9,1248.9 97.6,1250.8 98.2,1253.8 98.9,1257.2 99.6,1260.0 100.2,1261.4 100.9,1261.2 101.5,1259.5 102.2,1257.3 102.8,1255.3 103.5,1254.5 104.2,1255.0 104.8,1256.7 105.5,1258.7 106.1,1260.1 106.8,1260.2 107.4,1258.6 108.1,1255.6 108.7,1252.0 109.4,1248.7 110.1,1246.5 110.7,1245.7 111.4,1246.0 112.0,1246.7 112.7,1246.8 113.3,1245.6 114.0,1242.7 114.7,1238.5 115.3,1233.6 116.0,1229.1 116.6,1225.7 117.3,1223.7 117.9,1222.9 118.6,1222.4 119.3,1221.4 119.9,1219.1 120.6,1215.1 121.2,1209.8 121.9,1204.0 122.5,1198.5 123.2,1194.1 123.9,1191.2 124.5,1189.5 125.2,1188.2 125.8,1186.3 126.5,1183.2 127.1,1178.5 127.8,1172.5 128.5,1165.9 129.1,1159.8 129.8,1154.8 130.4,1151.4 131.1,1149.1 131.7,1147.3 132.4,1145.1 133.0,1141.5 133.7,1136.5 134.4,1130.1 135.0,1123.3 135.7,1116.9 136.3,1111.8 137.0,1108.1 137.6,1105.8 138.3,1103.9 139.0,1101.6 139.6,1098.1 140.3,1093.1 140.9,1086.9 141.6,1080.2 142.2,1074.0 142.9,1069.1 143.6,1065.7 144.2,1063.7 144.9,1062.2 145.5,1060.3 146.2,1057.2 146.8,1052.6 147.5,1046.9 148.2,1040.8 148.8,1035.2 149.5,1030.9 150.1,1028.2 150.8,1026.9 151.4,1026.1 152.1,1025.0 152.7,1022.8 153.4,1019.1 154.1,1014.2 154.7,1009.0 155.4,1004.4 156.0,1001.1 156.7,999.4 157.3,999.1 158.0,999.4 158.7,999.4 159.3,998.2 160.0,995.7 160.6,992.0 161.3,988.0 161.9,984.5 162.6,982.4 163.3,982.0 163.9,983.0 164.6,984.6 165.2,985.8 165.9,986.0 166.5,984.7 167.2,982.4 167.9,979.7 168.5,977.6 169.2,976.9 169.8,977.8 170.5,980.1 171.1,983.0 171.8,985.7 172.4,987.2 173.1,987.3 173.8,986.4 174.4,985.0 175.1,984.3 175.7,984.9 176.4,987.1 177.0,990.8 177.7,995.0 178.4,999.0 179.0,1001.8 179.7,1003.2 180.3,1003.5 181.0,1003.4 181.6,1003.9 182.3,1005.7 183.0,1009.1 183.6,1013.9 184.3,1019.3 184.9,1024.4 185.6,1028.3 186.2,1030.8 186.9,1032.1 187.6,1033.0 188.2,1034.5 188.9,1037.3 189.5,1041.6 190.2,1047.3 190.8,1053.6 191.5,1059.5 192.2,1064.2 192.8,1067.4 193.5,1069.4 194.1,1071.0 194.8,1073.1 195.4,1076.5 196.1,1081.4 196.7,1087.7 197.4,1094.4 198.1,1100.7 198.7,1105.9 199.4,1109.4 200.0,1111.8 200.7,1113.7 201.3,1116.0 202.0,1119.6 202.7,1124.7 203.3,1131.0 204.0,1137.8 204.6,1144.2 205.3,1149.3 205.9,1152.8 206.6,1155.1 207.3,1156.8 207.9,1159.0 208.6,1162.3 209.2,1167.1 209.9,1173.1 210.5,1179.6 211.2,1185.6 211.9,1190.2 212.5,1193.3 213.2,1195.0 213.8,1196.2 214.5,1197.7 215.1,1200.4 215.8,1204.6 216.4,1209.9 217.1,1215.6 217.8,1220.8 218.4,1224.6 219.1,1226.8 219.7,1227.7 220.4,1227.9 221.0,1228.6 221.7,1230.3 222.4,1233.4 223.0,1237.7 223.7,1242.4 224.3,1246.4 225.0,1249.2 225.6,1250.2 226.3,1249.9 227.0,1249.0 227.6,1248.4 228.3,1248.9 228.9,1250.8 229.6,1253.8 230.2,1257.2 230.9,1260.0 231.6,1261.4 232.2,1261.2 232.9,1259.5 233.5,1257.3 234.2,1255.3 234.8,1254.5 235.5,1255.0 236.1,1256.7 236.8,1258.7 237.5,1260.1 238.1,1260.2 238.8,1258.6 239.4,1255.6 240.1,1252.0 240.7,1248.7 241.4,1246.5 242.1,1245.7 242.7,1246.0 243.4,1246.7 244.0,1246.8 244.7,1245.6 245.3,1242.7 246.0,1238.5 246.7,1233.6 247.3,1229.1 248.0,1225.7 248.6,1223.7 249.3,1222.9 249.9,1222.4 250.6,1221.4 251.3,1219.1 251.9,1215.1 252.6,1209.8 253.2,1204.0 253.9,1198.5 254.5,1194.1 255.2,1191.2 255.9,1189.5 256.5,1188.2 257.2,1186.3 257.8,1183.2 258.5,1178.5 259.1,1172.5 259.8,1165.9 260.4,1159.8 261.1,1154.8 261.8,1151.4 262.4,1149.1 263.1,1147.3 263.7,1145.1 264.4,1141.5 265.0,1136.5 265.7,1130.1 266.4,1123.3 267.0,1116.9 267.7,1111.8 268.3,1108.1 269.0,1105.8 269.6,1103.9 270.3,1101.6 271.0,1098.1 271.6,1093.1 272.3,1086.9 272.9,1080.2 273.6,1074.0 274.2,1069.1 274.9,1065.7 275.6,1063.7 276.2,1062.2 276.9,1060.3 277.5,1057.2 278.2,1052.6 278.8,1046.9 279.5,1040.8 280.1,1035.2 280.8,1030.9 281.5,1028.2 282.1,1026.9 282.8,1026.1 283.4,1025.0 284.1,1022.8 284.7,1019.1 285.4,1014.2 286.1,1009.0 286.7,1004.4 287.4,1001.1 288.0,999.4 288.7,999.1 289.3,999.4 290.0,999.4 290.7,998.2 291.3,995.7 292.0,992.0 292.6,988.0 293.3,984.5 293.9,982.4 294.6,982.0 295.3,983.0 295.9,984.6 296.6,985.8 297.2,986.0 297.9,984.7 298.5,982.4 299.2,979.7 299.8,977.6 300.5,976.9 301.2,977.8 301.8,980.1 302.5,983.0 303.1,985.7 303.8,987.2 304.4,987.3 305.1,986.4 305.8,985.0 306.4,984.3 307.1,984.9 307.7,987.1 308.4,990.8 309.0,995.0 309.7,999.0 310.4,1001.8 311.0,1003.2 311.7,1003.5 312.3,1003.4 313.0,1003.9 313.6,1005.7 314.3,1009.1 315.0,1013.9 315.6,1019.3 316.3,1024.4 316.9,1028.3 317.6,1030.8 318.2,1032.1 318.9,1033.0 319.6,1034.5 320.2,1037.3 320.9,1041.6 321.5,1047.3 322.2,1053.6 322.8,1059.5 323.5,1064.2 324.1,1067.4 324.8,1069.4 325.5,1071.0 326.1,1073.1 326.8,1076.5 327.4,1081.4 328.1,1087.7 328.7,1094.4 329.4,1100.7 330.1,1105.9 330.7,1109.4 331.4,1111.8 332.0,1113.7 332.7,1116.0 333.3,1119.6 334.0,1124.7 334.7,1131.0 335.3,1137.8 336.0,1144.2 336.6,1149.3 337.3,1152.8 337.9,1155.1 338.6,1156.8 339.3,1159.0 339.9,1162.3 340.6,1167.1 341.2,1173.1 341.9,1179.6 342.5,1185.6 343.2,1190.2 343.8,1193.3 344.5,1195.0 345.2,1196.2 345.8,1197.7 346.5,1200.4 347.1,1204.6 347.8,1209.9 348.4,1215.6 349.1,1220.8 349.8,1224.6 350.4,1226.8 351.1,1227.7 351.7,1227.9 352.4,1228.6 353.0,1230.3 353.7,1233.4 354.4,1237.7 355.0,1242.4 355.7,1246.4 356.3,1249.2 357.0,1250.2 357.6,1249.9 358.3,1249.0 359.0,1248.4 359.6,1248.9 360.3,1250.8 360.9,1253.8 361.6,1257.2 362.2,1260.0 362.9,1261.4 363.5,1261.2 364.2,1259.5 364.9,1257.3 365.5,1255.3 366.2,1254.5 366.8,1255.0 367.5,1256.7 368.1,1258.7 368.8,1260.1 369.5,1260.2 370.1,1258.6 370.8,1255.6 371.4,1252.0 372.1,1248.7 372.7,1246.5 373.4,1245.7 374.1,1246.0 374.7,1246.7 375.4,1246.8 376.0,1245.6 376.7,1242.7 377.3,1238.5 378.0,1233.6 378.7,1229.1 379.3,1225.7 380.0,1223.7 380.6,1222.9 381.3,1222.4 381.9,1221.4 382.6,1219.1 383.2,1215.1 383.9,1209.8 384.6,1204.0 385.2,1198.5 385.9,1194.1 386.5,1191.2 387.2,1189.5 387.8,1188.2 388.5,1186.3 389.2,1183.2 389.8,1178.5 390.5,1172.5 391.1,1165.9 391.8,1159.8 392.4,1154.8 393.1,1151.4 393.8,1149.1 394.4,1147.3 395.1,1145.1 395.7,1141.5 396.4,1136.5 397.0,1130.1 397.7,1123.3 398.4,1116.9 399.0,1111.8 399.7,1108.1 400.3,1105.8 401.0,1103.9 401.6,1101.6 402.3,1098.1 403.0,1093.1 403.6,1086.9 404.3,1080.2 404.9,1074.0 405.6,1069.1 406.2,1065.7 406.9,1063.7 407.5,1062.2 408.2,1060.3 408.9,1057.2 409.5,1052.6 410.2,1046.9 410.8,1040.8 411.5,1035.2 412.1,1030.9 412.8,1028.2 413.5,1026.9 414.1,1026.1 414.8,1025.0 415.4,1022.8 416.1,1019.1 416.7,1014.2 417.4,1009.0 418.1,1004.4 418.7,1001.1 419.4,999.4 420.0,999.1 420.7,999.4 421.3,999.4 422.0,998.2 422.7,995.7 423.3,992.0 424.0,988.0 424.6,984.5 425.3,982.4 425.9,982.0 426.6,983.0 427.2,984.6 427.9,985.8 428.6,986.0 429.2,984.7 429.9,982.4 430.5,979.7 431.2,977.6 431.8,976.9 432.5,977.8 433.2,980.1 433.8,983.0 434.5,985.7 435.1,987.2 435.8,987.3 436.4,986.4 437.1,985.0 437.8,984.3 438.4,984.9 439.1,987.1 439.7,990.8 440.4,995.0 441.0,999.0 441.7,1001.8 442.4,1003.2 443.0,1003.5 443.7,1003.4 444.3,1003.9 445.0,1005.7 445.6,1009.1 446.3,1013.9 446.9,1019.3 447.6,1024.4 448.3,1028.3 448.9,1030.8 449.6,1032.1 450.2,1033.0 450.9,1034.5 451.5,1037.3 452.2,1041.6 452.9,1047.3 453.5,1053.6 454.2,1059.5 454.8,1064.2 455.5,1067.4 456.1,1069.4 456.8,1071.0 457.5,1073.1 458.1,1076.5 458.8,1081.4 459.4,1087.7 460.1,1094.4 460.7,1100.7 461.4,1105.9 462.1,1109.4 462.7,1111.8 463.4,1113.7 464.0,1116.0 464.7,1119.6 465.3,1124.7 466.0,1131.0 466.7,1137.8 467.3,1144.2 468.0,1149.3 468.6,1152.8 469.3,1155.1 469.9,1156.8 470.6,1159.0 471.2,1162.3 471.9,1167.1 472.6,1173.1 473.2,1179.6 473.9,1185.6 474.5,1190.2 475.2,1193.3 475.8,1195.0 476.5,1196.2 477.2,1197.7 477.8,1200.4 478.5,1204.6 479.1,1209.9 479.8,1215.6 480.4,1220.8 481.1,1224.6 481.8,1226.8 482.4,1227.7 483.1,1227.9 483.7,1228.6 484.4,1230.3 485.0,1233.4 485.7,1237.7 486.4,1242.4 487.0,1246.4 487.7,1249.2 488.3,1250.2 489.0,1249.9 489.6,1249.0 490.3,1248.4 490.9,1248.9 491.6,1250.8 492.3,1253.8 492.9,1257.2 493.6,1260.0 494.2,1261.4 494.9,1261.2 495.5,1259.5 496.2,1257.3 496.9,1255.3 497.5,1254.5 498.2,1255.0 498.8,1256.7 499.5,1258.7 500.1,1260.1 500.8,1260.2 501.5,1258.6 502.1,1255.6 502.8,1252.0 503.4,1248.7 504.1,1246.5 504.7,1245.7 505.4,1246.0 506.1,1246.7 506.7,1246.8 507.4,1245.6 508.0,1242.7 508.7,1238.5 509.3,1233.6 510.0,1229.1 510.6,1225.7 511.3,1223.7 512.0,1222.9 512.6,1222.4 513.3,1221.4 513.9,1219.1 514.6,1215.1 515.2,1209.8 515.9,1204.0 516.6,1198.5 517.2,1194.1 517.9,1191.2 518.5,1189.5 519.2,1188.2 519.8,1186.3 520.5,1183.2 521.2,1178.5 521.8,1172.5 522.5,1165.9 523.1,1159.8 523.8,1154.8 524.4,1151.4 525.1,1149.1 525.8,1147.3 526.4,1145.1 527.1,1141.5 527.7,1136.5 528.4,1130.1 529.0,1123.3 529.7,1116.9 530.4,1111.8 531.0,1108.1 531.7,1105.8 532.3,1103.9 533.0,1101.6 533.6,1098.1 534.3,1093.1 534.9,1086.9 535.6,1080.2 536.3,1074.0 536.9,1069.1 537.6,1065.7 538.2,1063.7 538.9,1062.2 539.5,1060.3 540.2,1057.2 540.9,1052.6 541.5,1046.9 542.2,1040.8 542.8,1035.2 543.5,1030.9 544.1,1028.2 544.8,1026.9 545.5,1026.1 546.1,1025.0 546.8,1022.8 547.4,1019.1 548.1,1014.2 548.7,1009.0 549.4,1004.4 550.1,1001.1 550.7,999.4 551.4,999.1 552.0,999.4 552.7,999.4 553.3,998.2 554.0,995.7 554.6,992.0 555.3,988.0 556.0,984.5 556.6,982.4 557.3,982.0 557.9,983.0 558.6,984.6 559.2,985.8 559.9,986.0 560.6,984.7 561.2,982.4 561.9,979.7 562.5,977.6 563.2,976.9 563.8,977.8 564.5,980.1 565.2,983.0 565.8,985.7 566.5,987.2 567.1,987.3 567.8,986.4 568.4,985.0 569.1,984.3 569.8,984.9 570.4,987.1 571.1,990.8 571.7,995.0 572.4,999.0 573.0,1001.8 573.7,1003.2 574.3,1003.5 575.0,1003.4 575.7,1003.9 576.3,1005.7 577.0,1009.1 577.6,1013.9 578.3,1019.3 578.9,1024.4 579.6,1028.3 580.3,1030.8 580.9,1032.1 581.6,1033.0 582.2,1034.5 582.9,1037.3 583.5,1041.6 584.2,1047.3 584.9,1053.6 585.5,1059.5 586.2,1064.2 586.8,1067.4 587.5,1069.4 588.1,1071.0 588.8,1073.1 589.5,1076.5 590.1,1081.4 590.8,1087.7 591.4,1094.4 592.1,1100.7 592.7,1105.9 593.4,1109.4 594.1,1111.8 594.7,1113.7 595.4,1116.0 596.0,1119.6 596.7,1124.7 597.3,1131.0 598.0,1137.8 598.6,1144.2 599.3,1149.3 600.0,1152.8 600.6,1155.1 601.3,1156.8 601.9,1159.0 602.6,1162.3 603.2,1167.1 603.9,1173.1 604.6,1179.6 605.2,1185.6 605.9,1190.2 606.5,1193.3 607.2,1195.0 607.8,1196.2 608.5,1197.7 609.2,1200.4 609.8,1204.6 610.5,1209.9 611.1,1215.6 611.8,1220.8 612.4,1224.6 613.1,1226.8 613.8,1227.7 614.4,1227.9 615.1,1228.6 615.7,1230.3 616.4,1233.4 617.0,1237.7 617.7,1242.4 618.3,1246.4 619.0,1249.2 619.7,1250.2 620.3,1249.9 621.0,1249.0 621.6,1248.4 622.3,1248.9 622.9,1250.8 623.6,1253.8 624.3,1257.2 624.9,1260.0 625.6,1261.4 626.2,1261.2 626.9,1259.5 627.5,1257.3 628.2,1255.3 628.9,1254.5 629.5,1255.0 630.2,1256.7 630.8,1258.7 631.5,1260.1 632.1,1260.2 632.8,1258.6 633.5,1255.6 634.1,1252.0 634.8,1248.7 635.4,1246.5 636.1,1245.7 636.7,1246.0 637.4,1246.7 638.0,1246.8 638.7,1245.6 639.4,1242.7 640.0,1238.5 640.7,1233.6 641.3,1229.1 642.0,1225.7 642.6,1223.7 643.3,1222.9 644.0,1222.4 644.6,1221.4 645.3,1219.1 645.9,1215.1 646.6,1209.8 647.2,1204.0 647.9,1198.5 648.6,1194.1 649.2,1191.2 649.9,1189.5 650.5,1188.2 651.2,1186.3 651.8,1183.2 652.5,1178.5 653.2,1172.5 653.8,1165.9 654.5,1159.8 655.1,1154.8 655.8,1151.4 656.4,1149.1 657.1,1147.3 657.8,1145.1 658.4,1141.5 659.1,1136.5 659.7,1130.1 660.4,1123.3 661.0,1116.9 661.7,1111.8 662.3,1108.1 663.0,1105.8 663.7,1103.9 664.3,1101.6 665.0,1098.1 665.6,1093.1 666.3,1086.9 666.9,1080.2 667.6,1074.0 668.3,1069.1 668.9,1065.7 669.6,1063.7 670.2,1062.2 670.9,1060.3 671.5,1057.2 672.2,1052.6 672.9,1046.9 673.5,1040.8 674.2,1035.2 674.8,1030.9 675.5,1028.2 676.1,1026.9 676.8,1026.1 677.5,1025.0 678.1,1022.8 678.8,1019.1 679.4,1014.2 680.1,1009.0 680.7,1004.4 681.4,1001.1 682.0,999.4 682.7,999.1 683.4,999.4 684.0,999.4 684.7,998.2 685.3,995.7 686.0,992.0 686.6,988.0 687.3,984.5 688.0,982.4 688.6,982.0 689.3,983.0 689.9,984.6 690.6,985.8 691.2,986.0 691.9,984.7 692.6,982.4 693.2,979.7 693.9,977.6 694.5,976.9 695.2,977.8 695.8,980.1 696.5,983.0 697.2,985.7 697.8,987.2 698.5,987.3 699.1,986.4 699.8,985.0 700.4,984.3 701.1,984.9 701.7,987.1 702.4,990.8 703.1,995.0 703.7,999.0 704.4,1001.8 705.0,1003.2 705.7,1003.5 706.3,1003.4 707.0,1003.9 707.7,1005.7 708.3,1009.1 709.0,1013.9 709.6,1019.3 710.3,1024.4 710.9,1028.3 711.6,1030.8 712.3,1032.1 712.9,1033.0 713.6,1034.5 714.2,1037.3 714.9,1041.6 715.5,1047.3 716.2,1053.6 716.9,1059.5 717.5,1064.2 718.2,1067.4 718.8,1069.4 719.5,1071.0 720.1,1073.1 720.8,1076.5 721.5,1081.4 722.1,1087.7 722.8,1094.4 723.4,1100.7 724.1,1105.9 724.7,1109.4 725.4,1111.8 726.0,1113.7 726.7,1116.0 727.4,1119.6 728.0,1124.7 728.7,1131.0 729.3,1137.8 730.0,1144.2 730.6,1149.3 731.3,1152.8 732.0,1155.1 732.6,1156.8 733.3,1159.0 733.9,1162.3 734.6,1167.1 735.2,1173.1 735.9,1179.6 736.6,1185.6 737.2,1190.2 737.9,1193.3 738.5,1195.0 739.2,1196.2 739.8,1197.7 740.5,1200.4 741.2,1204.6 741.8,1209.9 742.5,1215.6 743.1,1220.8 743.8,1224.6 744.4,1226.8 745.1,1227.7 745.7,1227.9 746.4,1228.6 747.1,1230.3 747.7,1233.4 748.4,1237.7 749.0,1242.4 749.7,1246.4 750.3,1249.2 751.0,1250.2 751.7,1249.9 752.3,1249.0 753.0,1248.4 753.6,1248.9 754.3,1250.8 754.9,1253.8 755.6,1257.2 756.3,1260.0 756.9,1261.4 757.6,1261.2 758.2,1259.5 758.9,1257.3 759.5,1255.3 760.2,1254.5 760.9,1255.0 761.5,1256.7 762.2,1258.7 762.8,1260.1 763.5,1260.2 764.1,1258.6 764.8,1255.6 765.4,1252.0 766.1,1248.7 766.8,1246.5 767.4,1245.7 768.1,1246.0 768.7,1246.7 769.4,1246.8 770.0,1245.6 770.7,1242.7 771.4,1238.5 772.0,1233.6 772.7,1229.1 773.3,1225.7 774.0,1223.7 774.6,1222.9 775.3,1222.4 776.0,1221.4 776.6,1219.1 777.3,1215.1 777.9,1209.8 778.6,1204.0 779.2,1198.5 779.9,1194.1 780.6,1191.2 781.2,1189.5 781.9,1188.2 782.5,1186.3 783.2,1183.2 783.8,1178.5 784.5,1172.5 785.2,1165.9 785.8,1159.8 786.5,1154.8 787.1,1151.4 787.8,1149.1 788.4,1147.3 789.1,1145.1 789.7,1141.5 790.4,1136.5 791.1,1130.1 791.7,1123.3 792.4,1116.9 793.0,1111.8 793.7,1108.1 794.3,1105.8 795.0,1103.9 795.7,1101.6 796.3,1098.1 797.0,1093.1 797.6,1086.9 798.3,1080.2 798.9,1074.0 799.6,1069.1 800.3,1065.7 800.9,1063.7 801.6,1062.2 802.2,1060.3 802.9,1057.2 803.5,1052.6 804.2,1046.9 804.9,1040.8 805.5,1035.2 806.2,1030.9 806.8,1028.2 807.5,1026.9 808.1,1026.1 808.8,1025.0 809.4,1022.8 810.1,1019.1 810.8,1014.2 811.4,1009.0 812.1,1004.4 812.7,1001.1 813.4,999.4 814.0,999.1 814.7,999.4 815.4,999.4 816.0,998.2 816.7,995.7 817.3,992.0 818.0,988.0 818.6,984.5 819.3,982.4 820.0,982.0 820.6,983.0 821.3,984.6 821.9,985.8 822.6,986.0 823.2,984.7 823.9,982.4 824.6,979.7 825.2,977.6 825.9,976.9 826.5,977.8 827.2,980.1 827.8,983.0 828.5,985.7 829.1,987.2 829.8,987.3 830.5,986.4 831.1,985.0 831.8,984.3 832.4,984.9 833.1,987.1 833.7,990.8 834.4,995.0 835.1,999.0 835.7,1001.8 836.4,1003.2 837.0,1003.5 837.7,1003.4 838.3,1003.9 839.0,1005.7 839.7,1009.1 840.3,1013.9 841.0,1019.3 841.6,1024.4 842.3,1028.3 842.9,1030.8 843.6,1032.1 844.3,1033.0 844.9,1034.5 845.6,1037.3 846.2,1041.6 846.9,1047.3 847.5,1053.6 848.2,1059.5 848.9,1064.2 849.5,1067.4 850.2,1069.4 850.8,1071.0 851.5,1073.1 852.1,1076.5 852.8,1081.4 853.4,1087.7 854.1,1094.4 854.8,1100.7 855.4,1105.9 856.1,1109.4 856.7,1111.8 857.4,1113.7 858.0,1116.0 858.7,1119.6 859.4,1124.7 860.0,1131.0 860.7,1137.8 861.3,1144.2 862.0,1149.3 862.6,1152.8 863.3,1155.1 864.0,1156.8 864.6,1159.0 865.3,1162.3 865.9,1167.1 866.6,1173.1 867.2,1179.6 867.9,1185.6 868.6,1190.2 869.2,1193.3 869.9,1195.0 870.5,1196.2 871.2,1197.7 871.8,1200.4 872.5,1204.6 873.1,1209.9 873.8,1215.6 874.5,1220.8 875.1,1224.6 875.8,1226.8 876.4,1227.7 877.1,1227.9 877.7,1228.6 878.4,1230.3 879.1,1233.4 879.7,1237.7 880.4,1242.4 881.0,1246.4 881.7,1249.2 882.3,1250.2 883.0,1249.9 883.7,1249.0 884.3,1248.4 885.0,1248.9 885.6,1250.8 886.3,1253.8 886.9,1257.2 887.6,1260.0 888.3,1261.4 888.9,1261.2 889.6,1259.5 890.2,1257.3 890.9,1255.3 891.5,1254.5 892.2,1255.0 892.8,1256.7 893.5,1258.7 894.2,1260.1 894.8,1260.2 895.5,1258.6 896.1,1255.6 896.8,1252.0 897.4,1248.7 898.1,1246.5 898.8,1245.7 899.4,1246.0 900.1,1246.7 900.7,1246.8 901.4,1245.6 902.0,1242.7 902.7,1238.5 903.4,1233.6 904.0,1229.1 904.7,1225.7 905.3,1223.7 906.0,1222.9 906.6,1222.4 907.3,1221.4 908.0,1219.1 908.6,1215.1 909.3,1209.8 909.9,1204.0 910.6,1198.5 911.2,1194.1 911.9,1191.2 912.6,1189.5 913.2,1188.2 913.9,1186.3 914.5,1183.2 915.2,1178.5 915.8,1172.5 916.5,1165.9 917.1,1159.8 917.8,1154.8 918.5,1151.4 919.1,1149.1 919.8,1147.3 920.4,1145.1 921.1,1141.5 921.7,1136.5 922.4,1130.1 923.1,1123.3 923.7,1116.9 924.4,1111.8 925.0,1108.1 925.7,1105.8 926.3,1103.9 927.0,1101.6 927.7,1098.1 928.3,1093.1 929.0,1086.9 929.6,1080.2 930.3,1074.0 930.9,1069.1 931.6,1065.7 932.3,1063.7 932.9,1062.2 933.6,1060.3 934.2,1057.2 934.9,1052.6 935.5,1046.9 936.2,1040.8 936.8,1035.2 937.5,1030.9 938.2,1028.2 938.8,1026.9 939.5,1026.1 940.1,1025.0 940.8,1022.8 941.4,1019.1 942.1,1014.2 942.8,1009.0 943.4,1004.4 944.1,1001.1 944.7,999.4 945.4,999.1 946.0,999.4 946.7,999.4 947.4,998.2 948.0,995.7 948.7,992.0 949.3,988.0 950.0,984.5 950.6,982.4 951.3,982.0 952.0,983.0 952.6,984.6 953.3,985.8 953.9,986.0 954.6,984.7 955.2,982.4 955.9,979.7 956.5,977.6 957.2,976.9 957.9,977.8 958.5,980.1 959.2,983.0 959.8,985.7 960.5,987.2 961.1,987.3 961.8,986.4 962.5,985.0 963.1,984.3 963.8,984.9 964.4,987.1 965.1,990.8 965.7,995.0 966.4,999.0 967.1,1001.8 967.7,1003.2 968.4,1003.5 969.0,1003.4 969.7,1003.9 970.3,1005.7 971.0,1009.1 971.7,1013.9 972.3,1019.3 973.0,1024.4 973.6,1028.3 974.3,1030.8 974.9,1032.1 975.6,1033.0 976.3,1034.5 976.9,1037.3 977.6,1041.6 978.2,1047.3 978.9,1053.6 979.5,1059.5 980.2,1064.2 980.8,1067.4 981.5,1069.4 982.2,1071.0 982.8,1073.1 983.5,1076.5 984.1,1081.4 984.8,1087.7 985.4,1094.4 986.1,1100.7 986.8,1105.9 987.4,1109.4 988.1,1111.8 988.7,1113.7 989.4,1116.0 990.0,1119.6 990.7,1124.7 991.4,1131.0 992.0,1137.8 992.7,1144.2 993.3,1149.3 994.0,1152.8 994.6,1155.1 995.3,1156.8 996.0,1159.0 996.6,1162.3 997.3,1167.1 997.9,1173.1 998.6,1179.6 999.2,1185.6 999.9,1190.2 1000.5,1193.3 1001.2,1195.0 1001.9,1196.2 1002.5,1197.7 1003.2,1200.4 1003.8,1204.6 1004.5,1209.9 1005.1,1215.6 1005.8,1220.8 1006.5,1224.6 1007.1,1226.8 1007.8,1227.7 1008.4,1227.9 1009.1,1228.6 1009.7,1230.3 1010.4,1233.4 1011.1,1237.7 1011.7,1242.4 1012.4,1246.4 1013.0,1249.2 1013.7,1250.2 1014.3,1249.9 1015.0,1249.0 1015.7,1248.4 1016.3,1248.9 1017.0,1250.8 1017.6,1253.8 1018.3,1257.2 1018.9,1260.0 1019.6,1261.4 1020.2,1261.2 1020.9,1259.5 1021.6,1257.3 1022.2,1255.3 1022.9,1254.5 1023.5,1255.0 1024.2,1256.7 1024.8,1258.7 1025.5,1260.1 1026.2,1260.2 1026.8,1258.6 1027.5,1255.6 1028.1,1252.0 1028.8,1248.7 1029.4,1246.5 1030.1,1245.7 1030.8,1246.0 1031.4,1246.7 1032.1,1246.8 1032.7,1245.6 1033.4,1242.7 1034.0,1238.5 1034.7,1233.6 1035.4,1229.1 1036.0,1225.7 1036.7,1223.7 1037.3,1222.9 1038.0,1222.4 1038.6,1221.4 1039.3,1219.1 1039.9,1215.1 1040.6,1209.8 1041.3,1204.0 1041.9,1198.5 1042.6,1194.1 1043.2,1191.2 1043.9,1189.5 1044.5,1188.2 1045.2,1186.3 1045.9,1183.2 1046.5,1178.5 1047.2,1172.5 1047.8,1165.9 1048.5,1159.8 1049.1,1154.8 1049.8,1151.4 1050.5,1149.1 1051.1,1147.3 1051.8,1145.1 1052.4,1141.5 1053.1,1136.5 1053.7,1130.1 1054.4,1123.3 1055.1,1116.9 1055.7,1111.8 1056.4,1108.1 1057.0,1105.8 1057.7,1103.9 1058.3,1101.6 1059.0,1098.1 1059.7,1093.1 1060.3,1086.9 1061.0,1080.2 1061.6,1074.0 1062.3,1069.1 1062.9,1065.7 1063.6,1063.7 1064.2,1062.2 1064.9,1060.3 1065.6,1057.2 1066.2,1052.6 1066.9,1046.9 1067.5,1040.8 1068.2,1035.2 1068.8,1030.9 1069.5,1028.2 1070.2,1026.9 1070.8,1026.1 1071.5,1025.0 1072.1,1022.8 1072.8,1019.1 1073.4,1014.2 1074.1,1009.0 1074.8,1004.4 1075.4,1001.1 1076.1,999.4 1076.7,999.1 1077.4,999.4 1078.0,999.4 1078.7,998.2 1079.4,995.7 1080.0,992.0 1080.7,988.0 1081.3,984.5 1082.0,982.4 1082.6,982.0 1083.3,983.0 1083.9,984.6 1084.6,985.8 1085.3,986.0 1085.9,984.7 1086.6,982.4 1087.2,979.7 1087.9,977.6 1088.5,976.9 1089.2,977.8 1089.9,980.1 1090.5,983.0 1091.2,985.7 1091.8,987.2 1092.5,987.3 1093.1,986.4 1093.8,985.0 1094.5,984.3 1095.1,984.9 1095.8,987.1 1096.4,990.8 1097.1,995.0 1097.7,999.0 1098.4,1001.8 1099.1,1003.2 1099.7,1003.5 1100.4,1003.4 1101.0,1003.9 1101.7,1005.7 1102.3,1009.1 1103.0,1013.9 1103.6,1019.3 1104.3,1024.4 1105.0,1028.3 1105.6,1030.8 1106.3,1032.1 1106.9,1033.0 1107.6,1034.5 1108.2,1037.3 1108.9,1041.6 1109.6,1047.3 1110.2,1053.6 1110.9,1059.5 1111.5,1064.2 1112.2,1067.4 1112.8,1069.4 1113.5,1071.0 1114.2,1073.1 1114.8,1076.5 1115.5,1081.4 1116.1,1087.7 1116.8,1094.4 1117.4,1100.7 1118.1,1105.9 1118.8,1109.4 1119.4,1111.8 1120.1,1113.7 1120.7,1116.0 1121.4,1119.6 1122.0,1124.7 1122.7,1131.0 1123.4,1137.8 1124.0,1144.2 1124.7,1149.3 1125.3,1152.8 1126.0,1155.1 1126.6,1156.8 1127.3,1159.0 1127.9,1162.3 1128.6,1167.1 1129.3,1173.1 1129.9,1179.6 1130.6,1185.6 1131.2,1190.2 1131.9,1193.3 1132.5,1195.0 1133.2,1196.2 1133.9,1197.7 1134.5,1200.4 1135.2,1204.6 1135.8,1209.9 1136.5,1215.6 1137.1,1220.8 1137.8,1224.6 1138.5,1226.8 1139.1,1227.7 1139.8,1227.9 1140.4,1228.6 1141.1,1230.3 1141.7,1233.4 1142.4,1237.7 1143.1,1242.4 1143.7,1246.4 1144.4,1249.2 1145.0,1250.2 1145.7,1249.9 1146.3,1249.0 1147.0,1248.4 1147.6,1248.9 1148.3,1250.8 1149.0,1253.8 1149.6,1257.2 1150.3,1260.0 1150.9,1261.4 1151.6,1261.2 1152.2,1259.5 1152.9,1257.3 1153.6,1255.3 1154.2,1254.5 1154.9,1255.0 1155.5,1256.7 1156.2,1258.7 1156.8,1260.1 1157.5,1260.2 1158.2,1258.6 1158.8,1255.6 1159.5,1252.0 1160.1,1248.7 1160.8,1246.5 1161.4,1245.7 1162.1,1246.0 1162.8,1246.7 1163.4,1246.8 1164.1,1245.6 1164.7,1242.7 1165.4,1238.5 1166.0,1233.6 1166.7,1229.1 1167.3,1225.7 1168.0,1223.7 1168.7,1222.9 1169.3,1222.4 1170.0,1221.4 1170.6,1219.1 1171.3,1215.1 1171.9,1209.8 1172.6,1204.0 1173.3,1198.5 1173.9,1194.1 1174.6,1191.2 1175.2,1189.5 1175.9,1188.2 1176.5,1186.3 1177.2,1183.2 1177.9,1178.5 1178.5,1172.5 1179.2,1165.9 1179.8,1159.8 1180.5,1154.8 1181.1,1151.4 1181.8,1149.1 1182.5,1147.3 1183.1,1145.1 1183.8,1141.5 1184.4,1136.5 1185.1,1130.1 1185.7,1123.3 1186.4,1116.9 1187.1,1111.8 1187.7,1108.1 1188.4,1105.8 1189.0,1103.9 1189.7,1101.6 1190.3,1098.1 1191.0,1093.1 1191.6,1086.9 1192.3,1080.2 1193.0,1074.0 1193.6,1069.1 1194.3,1065.7 1194.9,1063.7 1195.6,1062.2 1196.2,1060.3 1196.9,1057.2 1197.6,1052.6 1198.2,1046.9 1198.9,1040.8 1199.5,1035.2 1200.2,1030.9 1200.8,1028.2 1201.5,1026.9 1202.2,1026.1 1202.8,1025.0 1203.5,1022.8 1204.1,1019.1 1204.8,1014.2 1205.4,1009.0 1206.1,1004.4 1206.8,1001.1 1207.4,999.4 1208.1,999.1 1208.7,999.4 1209.4,999.4 1210.0,998.2 1210.7,995.7 1211.3,992.0 1212.0,988.0 1212.7,984.5 1213.3,982.4 1214.0,982.0 1214.6,983.0 1215.3,984.6 1215.9,985.8 1216.6,986.0 1217.3,984.7 1217.9,982.4 1218.6,979.7 1219.2,977.6 1219.9,976.9 1220.5,977.8 1221.2,980.1 1221.9,983.0 1222.5,985.7 1223.2,987.2 1223.8,987.3 1224.5,986.4 1225.1,985.0 1225.8,984.3 1226.5,984.9 1227.1,987.1 1227.8,990.8 1228.4,995.0 1229.1,999.0 1229.7,1001.8 1230.4,1003.2 1231.0,1003.5 1231.7,1003.4 1232.4,1003.9 1233.0,1005.7 1233.7,1009.1 1234.3,1013.9 1235.0,1019.3 1235.6,1024.4 1236.3,1028.3 1237.0,1030.8 1237.6,1032.1 1238.3,1033.0 1238.9,1034.5 1239.6,1037.3 1240.2,1041.6 1240.9,1047.3 1241.6,1053.6 1242.2,1059.5 1242.9,1064.2 1243.5,1067.4 1244.2,1069.4 1244.8,1071.0 1245.5,1073.1 1246.2,1076.5 1246.8,1081.4 1247.5,1087.7 1248.1,1094.4 1248.8,1100.7 1249.4,1105.9 1250.1,1109.4 1250.8,1111.8 1251.4,1113.7 1252.1,1116.0 1252.7,1119.6 1253.4,1124.7 1254.0,1131.0 1254.7,1137.8 1255.3,1144.2 1256.0,1149.3 1256.7,1152.8 1257.3,1155.1 1258.0,1156.8 1258.6,1159.0 1259.3,1162.3 1259.9,1167.1 1260.6,1173.1 1261.3,1179.6 1261.9,1185.6 1262.6,1190.2 1263.2,1193.3 1263.9,1195.0 1264.5,1196.2 1265.2,1197.7 1265.9,1200.4 1266.5,1204.6 1267.2,1209.9 1267.8,1215.6 1268.5,1220.8 1269.1,1224.6 1269.8,1226.8 1270.5,1227.7 1271.1,1227.9 1271.8,1228.6 1272.4,1230.3 1273.1,1233.4 1273.7,1237.7 1274.4,1242.4 1275.0,1246.4 1275.7,1249.2 1276.4,1250.2 1277.0,1249.9 1277.7,1249.0 1278.3,1248.4 1279.0,1248.9 1279.6,1250.8 1280.3,1253.8 1281.0,1257.2 1281.6,1260.0 1282.3,1261.4 1282.9,1261.2 1283.6,1259.5 1284.2,1257.3 1284.9,1255.3 1285.6,1254.5 1286.2,1255.0 1286.9,1256.7 1287.5,1258.7 1288.2,1260.1 1288.8,1260.2 1289.5,1258.6 1290.2,1255.6 1290.8,1252.0 1291.5,1248.7 1292.1,1246.5 1292.8,1245.7 1293.4,1246.0 1294.1,1246.7 1294.7,1246.8 1295.4,1245.6 1296.1,1242.7 1296.7,1238.5 1297.4,1233.6 1298.0,1229.1 1298.7,1225.7 1299.3,1223.7 1300.0,1222.9 1300.7,1222.4 1301.3,1221.4 1302.0,1219.1 1302.6,1215.1 1303.3,1209.8 1303.9,1204.0 1304.6,1198.5 1305.3,1194.1 1305.9,1191.2 1306.6,1189.5 1307.2,1188.2 1307.9,1186.3 1308.5,1183.2 1309.2,1178.5 1309.9,1172.5 1310.5,1165.9 1311.2,1159.8 1311.8,1154.8 1312.5,1151.4 1313.1,1149.1 1313.8,1147.3 1314.5,1145.1 1315.1,1141.5 1315.8,1136.5 1316.4,1130.1 1317.1,1123.3 1317.7,1116.9 1318.4,1111.8 1319.0,1108.1 1319.7,1105.8 1320.4,1103.9 1321.0,1101.6 1321.7,1098.1 1322.3,1093.1 1323.0,1086.9 1323.6,1080.2 1324.3,1074.0 1325.0,1069.1 1325.6,1065.7 1326.3,1063.7 1326.9,1062.2 1327.6,1060.3 1328.2,1057.2 1328.9,1052.6 1329.6,1046.9 1330.2,1040.8 1330.9,1035.2 1331.5,1030.9 1332.2,1028.2 1332.8,1026.9 1333.5,1026.1 1334.2,1025.0 1334.8,1022.8 1335.5,1019.1 1336.1,1014.2 1336.8,1009.0 1337.4,1004.4 1338.1,1001.1 1338.7,999.4 1339.4,999.1 1340.1,999.4 1340.7,999.4 1341.4,998.2 1342.0,995.7 1342.7,992.0 1343.3,988.0 1344.0,984.5 1344.7,982.4 1345.3,982.0 1346.0,983.0 1346.6,984.6 1347.3,985.8 1347.9,986.0 1348.6,984.7 1349.3,982.4 1349.9,979.7 1350.6,977.6 1351.2,976.9 1351.9,977.8 1352.5,980.1 1353.2,983.0 1353.9,985.7 1354.5,987.2 1355.2,987.3 1355.8,986.4 1356.5,985.0 1357.1,984.3 1357.8,984.9 1358.4,987.1 1359.1,990.8 1359.8,995.0 1360.4,999.0 1361.1,1001.8 1361.7,1003.2 1362.4,1003.5 1363.0,1003.4 1363.7,1003.9 1364.4,1005.7 1365.0,1009.1 1365.7,1013.9 1366.3,1019.3 1367.0,1024.4 1367.6,1028.3 1368.3,1030.8 1369.0,1032.1 1369.6,1033.0 1370.3,1034.5 1370.9,1037.3 1371.6,1041.6 1372.2,1047.3 1372.9,1053.6 1373.6,1059.5 1374.2,1064.2 1374.9,1067.4 1375.5,1069.4 1376.2,1071.0 1376.8,1073.1 1377.5,1076.5 1378.2,1081.4 1378.8,1087.7 1379.5,1094.4 1380.1,1100.7 1380.8,1105.9 1381.4,1109.4 1382.1,1111.8 1382.7,1113.7 1383.4,1116.0 1384.1,1119.6 1384.7,1124.7 1385.4,1131.0 1386.0,1137.8 1386.7,1144.2 1387.3,1149.3 1388.0,1152.8 1388.7,1155.1 1389.3,1156.8 1390.0,1159.0 1390.6,1162.3 1391.3,1167.1 1391.9,1173.1 1392.6,1179.6 1393.3,1185.6 1393.9,1190.2 1394.6,1193.3 1395.2,1195.0 1395.9,1196.2 1396.5,1197.7 1397.2,1200.4 1397.9,1204.6 1398.5,1209.9 1399.2,1215.6 1399.8,1220.8 1400.5,1224.6 1401.1,1226.8 1401.8,1227.7 1402.4,1227.9 1403.1,1228.6 1403.8,1230.3 1404.4,1233.4 1405.1,1237.7 1405.7,1242.4 1406.4,1246.4 1407.0,1249.2 1407.7,1250.2 1408.4,1249.9 1409.0,1249.0 1409.7,1248.4 1410.3,1248.9 1411.0,1250.8 1411.6,1253.8 1412.3,1257.2 1413.0,1260.0 1413.6,1261.4 1414.3,1261.2 1414.9,1259.5 1415.6,1257.3 1416.2,1255.3 1416.9,1254.5 1417.6,1255.0 1418.2,1256.7 1418.9,1258.7 1419.5,1260.1 1420.2,1260.2 1420.8,1258.6 1421.5,1255.6 1422.1,1252.0 1422.8,1248.7 1423.5,1246.5 1424.1,1245.7 1424.8,1246.0 1425.4,1246.7 1426.1,1246.8 1426.7,1245.6 1427.4,1242.7 1428.1,1238.5 1428.7,1233.6 1429.4,1229.1 1430.0,1225.7 1430.7,1223.7 1431.3,1222.9 1432.0,1222.4 1432.7,1221.4 1433.3,1219.1 1434.0,1215.1 1434.6,1209.8 1435.3,1204.0 1435.9,1198.5 1436.6,1194.1 1437.3,1191.2 1437.9,1189.5 1438.6,1188.2 1439.2,1186.3 1439.9,1183.2 1440.5,1178.5 1441.2,1172.5 1441.9,1165.9 1442.5,1159.8 1443.2,1154.8 1443.8,1151.4 1444.5,1149.1 1445.1,1147.3 1445.8,1145.1 1446.4,1141.5 1447.1,1136.5 1447.8,1130.1 1448.4,1123.3 1449.1,1116.9 1449.7,1111.8 1450.4,1108.1 1451.0,1105.8 1451.7,1103.9 1452.4,1101.6 1453.0,1098.1 1453.7,1093.1 1454.3,1086.9 1455.0,1080.2 1455.6,1074.0 1456.3,1069.1 1457.0,1065.7 1457.6,1063.7 1458.3,1062.2 1458.9,1060.3 1459.6,1057.2 1460.2,1052.6 1460.9,1046.9 1461.6,1040.8 1462.2,1035.2 1462.9,1030.9 1463.5,1028.2 1464.2,1026.9 1464.8,1026.1 1465.5,1025.0 1466.1,1022.8 1466.8,1019.1 1467.5,1014.2 1468.1,1009.0 1468.8,1004.4 1469.4,1001.1 1470.1,999.4 1470.7,999.1 1471.4,999.4 1472.1,999.4 1472.7,998.2 1473.4,995.7 1474.0,992.0 1474.7,988.0 1475.3,984.5 1476.0,982.4 1476.7,982.0 1477.3,983.0 1478.0,984.6 1478.6,985.8 1479.3,986.0 1479.9,984.7 1480.6,982.4 1481.3,979.7 1481.9,977.6 1482.6,976.9 1483.2,977.8 1483.9,980.1 1484.5,983.0 1485.2,985.7 1485.8,987.2 1486.5,987.3 1487.2,986.4 1487.8,985.0 1488.5,984.3 1489.1,984.9 1489.8,987.1 1490.4,990.8 1491.1,995.0 1491.8,999.0 1492.4,1001.8 1493.1,1003.2 1493.7,1003.5 1494.4,1003.4 1495.0,1003.9 1495.7,1005.7 1496.4,1009.1 1497.0,1013.9 1497.7,1019.3 1498.3,1024.4 1499.0,1028.3 1499.6,1030.8 1500.3,1032.1 1501.0,1033.0 1501.6,1034.5 1502.3,1037.3 1502.9,1041.6 1503.6,1047.3 1504.2,1053.6 1504.9,1059.5 1505.6,1064.2 1506.2,1067.4 1506.9,1069.4 1507.5,1071.0 1508.2,1073.1 1508.8,1076.5 1509.5,1081.4 1510.1,1087.7 1510.8,1094.4 1511.5,1100.7 1512.1,1105.9 1512.8,1109.4 1513.4,1111.8 1514.1,1113.7 1514.7,1116.0 1515.4,1119.6 1516.1,1124.7 1516.7,1131.0 1517.4,1137.8 1518.0,1144.2 1518.7,1149.3 1519.3,1152.8 1520.0,1155.1 1520.7,1156.8 1521.3,1159.0 1522.0,1162.3 1522.6,1167.1 1523.3,1173.1 1523.9,1179.6 1524.6,1185.6 1525.3,1190.2 1525.9,1193.3 1526.6,1195.0 1527.2,1196.2 1527.9,1197.7 1528.5,1200.4 1529.2,1204.6 1529.8,1209.9 1530.5,1215.6 1531.2,1220.8 1531.8,1224.6 1532.5,1226.8 1533.1,1227.7 1533.8,1227.9 1534.4,1228.6 1535.1,1230.3 1535.8,1233.4 1536.4,1237.7 1537.1,1242.4 1537.7,1246.4 1538.4,1249.2 1539.0,1250.2 1539.7,1249.9 1540.4,1249.0 1541.0,1248.4 1541.7,1248.9 1542.3,1250.8 1543.0,1253.8 1543.6,1257.2 1544.3,1260.0 1545.0,1261.4 1545.6,1261.2 1546.3,1259.5 1546.9,1257.3 1547.6,1255.3 1548.2,1254.5 1548.9,1255.0 1549.5,1256.7 1550.2,1258.7 1550.9,1260.1 1551.5,1260.2 1552.2,1258.6 1552.8,1255.6 1553.5,1252.0 1554.1,1248.7 1554.8,1246.5 1555.5,1245.7 1556.1,1246.0 1556.8,1246.7 1557.4,1246.8 1558.1,1245.6 1558.7,1242.7 1559.4,1238.5 1560.1,1233.6 1560.7,1229.1 1561.4,1225.7 1562.0,1223.7 1562.7,1222.9 1563.3,1222.4 1564.0,1221.4 1564.7,1219.1 1565.3,1215.1 1566.0,1209.8 1566.6,1204.0 1567.3,1198.5 1567.9,1194.1 1568.6,1191.2 1569.3,1189.5 1569.9,1188.2 1570.6,1186.3 1571.2,1183.2 1571.9,1178.5 1572.5,1172.5 1573.2,1165.9 1573.8,1159.8 1574.5,1154.8 1575.2,1151.4 1575.8,1149.1 1576.5,1147.3 1577.1,1145.1 1577.8,1141.5 1578.4,1136.5 1579.1,1130.1 1579.8,1123.3 1580.4,1116.9 1581.1,1111.8 1581.7,1108.1 1582.4,1105.8 1583.0,1103.9 1583.7,1101.6 1584.4,1098.1 1585.0,1093.1 1585.7,1086.9 1586.3,1080.2 1587.0,1074.0 1587.6,1069.1 1588.3,1065.7 1589.0,1063.7 1589.6,1062.2 1590.3,1060.3 1590.9,1057.2 1591.6,1052.6 1592.2,1046.9 1592.9,1040.8 1593.5,1035.2 1594.2,1030.9 1594.9,1028.2 1595.5,1026.9 1596.2,1026.1 1596.8,1025.0 1597.5,1022.8 1598.1,1019.1 1598.8,1014.2 1599.5,1009.0 1600.1,1004.4 1600.8,1001.1 1601.4,999.4 1602.1,999.1 1602.7,999.4 1603.4,999.4 1604.1,998.2 1604.7,995.7 1605.4,992.0 1606.0,988.0 1606.7,984.5 1607.3,982.4 1608.0,982.0 1608.7,983.0 1609.3,984.6 1610.0,985.8 1610.6,986.0 1611.3,984.7 1611.9,982.4 1612.6,979.7 1613.2,977.6 1613.9,976.9 1614.6,977.8 1615.2,980.1 1615.9,983.0 1616.5,985.7 1617.2,987.2 1617.8,987.3 1618.5,986.4 1619.2,985.0 1619.8,984.3 1620.5,984.9 1621.1,987.1 1621.8,990.8 1622.4,995.0 1623.1,999.0 1623.8,1001.8 1624.4,1003.2 1625.1,1003.5 1625.7,1003.4 1626.4,1003.9 1627.0,1005.7 1627.7,1009.1 1628.4,1013.9 1629.0,1019.3 1629.7,1024.4 1630.3,1028.3 1631.0,1030.8 1631.6,1032.1 1632.3,1033.0 1633.0,1034.5 1633.6,1037.3 1634.3,1041.6 1634.9,1047.3 1635.6,1053.6 1636.2,1059.5 1636.9,1064.2 1637.5,1067.4 1638.2,1069.4 1638.9,1071.0 1639.5,1073.1 1640.2,1076.5 1640.8,1081.4 1641.5,1087.7 1642.1,1094.4 1642.8,1100.7 1643.5,1105.9 1644.1,1109.4 1644.8,1111.8 1645.4,1113.7 1646.1,1116.0 1646.7,1119.6 1647.4,1124.7 1648.1,1131.0 1648.7,1137.8 1649.4,1144.2 1650.0,1149.3 1650.7,1152.8 1651.3,1155.1 1652.0,1156.8 1652.7,1159.0 1653.3,1162.3 1654.0,1167.1 1654.6,1173.1 1655.3,1179.6 1655.9,1185.6 1656.6,1190.2 1657.2,1193.3 1657.9,1195.0 1658.6,1196.2 1659.2,1197.7 1659.9,1200.4 1660.5,1204.6 1661.2,1209.9 1661.8,1215.6 1662.5,1220.8 1663.2,1224.6 1663.8,1226.8 1664.5,1227.7 1665.1,1227.9 1665.8,1228.6 1666.4,1230.3 1667.1,1233.4 1667.8,1237.7 1668.4,1242.4 1669.1,1246.4 1669.7,1249.2 1670.4,1250.2 1671.0,1249.9 1671.7,1249.0 1672.4,1248.4 1673.0,1248.9 1673.7,1250.8 1674.3,1253.8 1675.0,1257.2 1675.6,1260.0 1676.3,1261.4 1676.9,1261.2 1677.6,1259.5 1678.3,1257.3 1678.9,1255.3 1679.6,1254.5 1680.2,1255.0 1680.9,1256.7 1681.5,1258.7 1682.2,1260.1 1682.9,1260.2 1683.5,1258.6 1684.2,1255.6 1684.8,1252.0 1685.5,1248.7 1686.1,1246.5 1686.8,1245.7 1687.5,1246.0 1688.1,1246.7 1688.8,1246.8 1689.4,1245.6 1690.1,1242.7 1690.7,1238.5 1691.4,1233.6 1692.1,1229.1 1692.7,1225.7 1693.4,1223.7 1694.0,1222.9 1694.7,1222.4 1695.3,1221.4 1696.0,1219.1 1696.7,1215.1 1697.3,1209.8 1698.0,1204.0 1698.6,1198.5 1699.3,1194.1 1699.9,1191.2 1700.6,1189.5 1701.2,1188.2 1701.9,1186.3 1702.6,1183.2 1703.2,1178.5 1703.9,1172.5 1704.5,1165.9 1705.2,1159.8 1705.8,1154.8 1706.5,1151.4 1707.2,1149.1 1707.8,1147.3 1708.5,1145.1 1709.1,1141.5 1709.8,1136.5 1710.4,1130.1 1711.1,1123.3 1711.8,1116.9 1712.4,1111.8 1713.1,1108.1 1713.7,1105.8 1714.4,1103.9 1715.0,1101.6 1715.7,1098.1 1716.4,1093.1 1717.0,1086.9 1717.7,1080.2 1718.3,1074.0 1719.0,1069.1 1719.6,1065.7 1720.3,1063.7 1720.9,1062.2 1721.6,1060.3 1722.3,1057.2 1722.9,1052.6 1723.6,1046.9 1724.2,1040.8 1724.9,1035.2 1725.5,1030.9 1726.2,1028.2 1726.9,1026.9 1727.5,1026.1 1728.2,1025.0 1728.8,1022.8 1729.5,1019.1 1730.1,1014.2 1730.8,1009.0 1731.5,1004.4 1732.1,1001.1 1732.8,999.4 1733.4,999.1 1734.1,999.4 1734.7,999.4 1735.4,998.2 1736.1,995.7 1736.7,992.0 1737.4,988.0 1738.0,984.5 1738.7,982.4 1739.3,982.0 1740.0,983.0 1740.6,984.6 1741.3,985.8 1742.0,986.0 1742.6,984.7 1743.3,982.4 1743.9,979.7 1744.6,977.6 1745.2,976.9 1745.9,977.8 1746.6,980.1 1747.2,983.0 1747.9,985.7 1748.5,987.2 1749.2,987.3 1749.8,986.4 1750.5,985.0 1751.2,984.3 1751.8,984.9 1752.5,987.1 1753.1,990.8 1753.8,995.0 1754.4,999.0 1755.1,1001.8 1755.8,1003.2 1756.4,1003.5 1757.1,1003.4 1757.7,1003.9 1758.4,1005.7 1759.0,1009.1 1759.7,1013.9 1760.3,1019.3 1761.0,1024.4 1761.7,1028.3 1762.3,1030.8 1763.0,1032.1 1763.6,1033.0 1764.3,1034.5 1764.9,1037.3 1765.6,1041.6 1766.3,1047.3 1766.9,1053.6 1767.6,1059.5 1768.2,1064.2 1768.9,1067.4 1769.5,1069.4 1770.2,1071.0 1770.9,1073.1 1771.5,1076.5 1772.2,1081.4 1772.8,1087.7 1773.5,1094.4 1774.1,1100.7 1774.8,1105.9 1775.5,1109.4 1776.1,1111.8 1776.8,1113.7 1777.4,1116.0 1778.1,1119.6 1778.7,1124.7 1779.4,1131.0 1780.1,1137.8 1780.7,1144.2 1781.4,1149.3 1782.0,1152.8 1782.7,1155.1 1783.3,1156.8 1784.0,1159.0 1784.6,1162.3 1785.3,1167.1 1786.0,1173.1 1786.6,1179.6 1787.3,1185.6 1787.9,1190.2 1788.6,1193.3 1789.2,1195.0 1789.9,1196.2 1790.6,1197.7 1791.2,1200.4 1791.9,1204.6 1792.5,1209.9 1793.2,1215.6 1793.8,1220.8 1794.5,1224.6 1795.2,1226.8 1795.8,1227.7 1796.5,1227.9 1797.1,1228.6 1797.8,1230.3 1798.4,1233.4 1799.1,1237.7 1799.8,1242.4 1800.4,1246.4 1801.1,1249.2 1801.7,1250.2 1802.4,1249.9 1803.0,1249.0 1803.7,1248.4 1804.3,1248.9 1805.0,1250.8 1805.7,1253.8 1806.3,1257.2 1807.0,1260.0 1807.6,1261.4 1808.3,1261.2 1808.9,1259.5 1809.6,1257.3 1810.3,1255.3 1810.9,1254.5 1811.6,1255.0 1812.2,1256.7 1812.9,1258.7 1813.5,1260.1 1814.2,1260.2 1814.9,1258.6 1815.5,1255.6 1816.2,1252.0 1816.8,1248.7 1817.5,1246.5 1818.1,1245.7 1818.8,1246.0 1819.5,1246.7 1820.1,1246.8 1820.8,1245.6 1821.4,1242.7 1822.1,1238.5 1822.7,1233.6 1823.4,1229.1 1824.0,1225.7 1824.7,1223.7 1825.4,1222.9 1826.0,1222.4 1826.7,1221.4 1827.3,1219.1 1828.0,1215.1 1828.6,1209.8 1829.3,1204.0 1830.0,1198.5 1830.6,1194.1 1831.3,1191.2 1831.9,1189.5 1832.6,1188.2 1833.2,1186.3 1833.9,1183.2 1834.6,1178.5 1835.2,1172.5 1835.9,1165.9 1836.5,1159.8 1837.2,1154.8 1837.8,1151.4 1838.5,1149.1 1839.2,1147.3 1839.8,1145.1 1840.5,1141.5 1841.1,1136.5 1841.8,1130.1 1842.4,1123.3 1843.1,1116.9 1843.8,1111.8 1844.4,1108.1 1845.1,1105.8 1845.7,1103.9 1846.4,1101.6 1847.0,1098.1 1847.7,1093.1 1848.3,1086.9 1849.0,1080.2 1849.7,1074.0 1850.3,1069.1 1851.0,1065.7 1851.6,1063.7 1852.3,1062.2 1852.9,1060.3 1853.6,1057.2 1854.3,1052.6 1854.9,1046.9 1855.6,1040.8 1856.2,1035.2 1856.9,1030.9 1857.5,1028.2 1858.2,1026.9 1858.9,1026.1 1859.5,1025.0 1860.2,1022.8 1860.8,1019.1 1861.5,1014.2 1862.1,1009.0 1862.8,1004.4 1863.5,1001.1 1864.1,999.4 1864.8,999.1 1865.4,999.4 1866.1,999.4 1866.7,998.2 1867.4,995.7 1868.0,992.0 1868.7,988.0 1869.4,984.5 1870.0,982.4 1870.7,982.0 1871.3,983.0 1872.0,984.6 1872.6,985.8 1873.3,986.0 1874.0,984.7 1874.6,982.4 1875.3,979.7 1875.9,977.6 1876.6,976.9 1877.2,977.8 1877.9,980.1 1878.6,983.0 1879.2,985.7 1879.9,987.2 1880.5,987.3 1881.2,986.4 1881.8,985.0 1882.5,984.3 1883.2,984.9 1883.8,987.1 1884.5,990.8 1885.1,995.0 1885.8,999.0 1886.4,1001.8 1887.1,1003.2 1887.7,1003.5 1888.4,1003.4 1889.1,1003.9 1889.7,1005.7 1890.4,1009.1 1891.0,1013.9 1891.7,1019.3 1892.3,1024.4 1893.0,1028.3 1893.7,1030.8 1894.3,1032.1 1895.0,1033.0 1895.6,1034.5 1896.3,1037.3 1896.9,1041.6 1897.6,1047.3 1898.3,1053.6 1898.9,1059.5 1899.6,1064.2 1900.2,1067.4 1900.9,1069.4 1901.5,1071.0 1902.2,1073.1 1902.9,1076.5 1903.5,1081.4 1904.2,1087.7 1904.8,1094.4 1905.5,1100.7 1906.1,1105.9 1906.8,1109.4 1907.5,1111.8 1908.1,1113.7 1908.8,1116.0 1909.4,1119.6 1910.1,1124.7 1910.7,1131.0 1911.4,1137.8 1912.0,1144.2 1912.7,1149.3 1913.4,1152.8 1914.0,1155.1 1914.7,1156.8 1915.3,1159.0 1916.0,1162.3 1916.6,1167.1 1917.3,1173.1 1918.0,1179.6 1918.6,1185.6 1919.3,1190.2 1919.9,1193.3 1920.6,1195.0 1921.2,1196.2 1921.9,1197.7 1922.6,1200.4 1923.2,1204.6 1923.9,1209.9 1924.5,1215.6 1925.2,1220.8 1925.8,1224.6 1926.5,1226.8 1927.2,1227.7 1927.8,1227.9 1928.5,1228.6 1929.1,1230.3 1929.8,1233.4 1930.4,1237.7 1931.1,1242.4 1931.7,1246.4 1932.4,1249.2 1933.1,1250.2 1933.7,1249.9 1934.4,1249.0 1935.0,1248.4 1935.7,1248.9 1936.3,1250.8 1937.0,1253.8 1937.7,1257.2 1938.3,1260.0 1939.0,1261.4 1939.6,1261.2 1940.3,1259.5 1940.9,1257.3 1941.6,1255.3 1942.3,1254.5 1942.9,1255.0 1943.6,1256.7 1944.2,1258.7 1944.9,1260.1 1945.5,1260.2 1946.2,1258.6 1946.9,1255.6 1947.5,1252.0 1948.2,1248.7 1948.8,1246.5 1949.5,1245.7 1950.1,1246.0 1950.8,1246.7 1951.4,1246.8 1952.1,1245.6 1952.8,1242.7 1953.4,1238.5 1954.1,1233.6 1954.7,1229.1 1955.4,1225.7 1956.0,1223.7 1956.7,1222.9 1957.4,1222.4 1958.0,1221.4 1958.7,1219.1 1959.3,1215.1 1960.0,1209.8 1960.6,1204.0 1961.3,1198.5 1962.0,1194.1 1962.6,1191.2 1963.3,1189.5 1963.9,1188.2 1964.6,1186.3 1965.2,1183.2 1965.9,1178.5 1966.6,1172.5 1967.2,1165.9 1967.9,1159.8 1968.5,1154.8 1969.2,1151.4 1969.8,1149.1 1970.5,1147.3 1971.2,1145.1 1971.8,1141.5 1972.5,1136.5 1973.1,1130.1 1973.8,1123.3 1974.4,1116.9 1975.1,1111.8 1975.7,1108.1 1976.4,1105.8 1977.1,1103.9 1977.7,1101.6 1978.4,1098.1 1979.0,1093.1 1979.7,1086.9 1980.3,1080.2 1981.0,1074.0 1981.7,1069.1 1982.3,1065.7 1983.0,1063.7 1983.6,1062.2 1984.3,1060.3 1984.9,1057.2 1985.6,1052.6 1986.3,1046.9 1986.9,1040.8 1987.6,1035.2 1988.2,1030.9 1988.9,1028.2 1989.5,1026.9 1990.2,1026.1 1990.9,1025.0 1991.5,1022.8 1992.2,1019.1 1992.8,1014.2 1993.5,1009.0 1994.1,1004.4 1994.8,1001.1 1995.4,999.4 1996.1,999.1 1996.8,999.4 1997.4,999.4 1998.1,998.2 1998.7,995.7 1999.4,992.0 2000.0,988.0 2000.7,984.5 2001.4,982.4 2002.0,982.0 2002.7,983.0 2003.3,984.6 2004.0,985.8 2004.6,986.0 2005.3,984.7 2006.0,982.4 2006.6,979.7 2007.3,977.6 2007.9,976.9 2008.6,977.8 2009.2,980.1 2009.9,983.0 2010.6,985.7 2011.2,987.2 2011.9,987.3 2012.5,986.4 2013.2,985.0 2013.8,984.3 2014.5,984.9 2015.1,987.1 2015.8,990.8 2016.5,995.0 2017.1,999.0 2017.8,1001.8 2018.4,1003.2 2019.1,1003.5 2019.7,1003.4 2020.4,1003.9 2021.1,1005.7 2021.7,1009.1 2022.4,1013.9 2023.0,1019.3 2023.7,1024.4 2024.3,1028.3 2025.0,1030.8 2025.7,1032.1 2026.3,1033.0 2027.0,1034.5 2027.6,1037.3 2028.3,1041.6 2028.9,1047.3 2029.6,1053.6 2030.3,1059.5 2030.9,1064.2 2031.6,1067.4 2032.2,1069.4 2032.9,1071.0 2033.5,1073.1 2034.2,1076.5 2034.9,1081.4 2035.5,1087.7 2036.2,1094.4 2036.8,1100.7 2037.5,1105.9 2038.1,1109.4 2038.8,1111.8 2039.4,1113.7 2040.1,1116.0 2040.8,1119.6 2041.4,1124.7 2042.1,1131.0 2042.7,1137.8 2043.4,1144.2 2044.0,1149.3 2044.7,1152.8 2045.4,1155.1 2046.0,1156.8 2046.7,1159.0 2047.3,1162.3 2048.0,1167.1 2048.6,1173.1 2049.3,1179.6 2050.0,1185.6 2050.6,1190.2 2051.3,1193.3 2051.9,1195.0 2052.6,1196.2 2053.2,1197.7 2053.9,1200.4 2054.6,1204.6 2055.2,1209.9 2055.9,1215.6 2056.5,1220.8 2057.2,1224.6 2057.8,1226.8 2058.5,1227.7 2059.1,1227.9 2059.8,1228.6 2060.5,1230.3 2061.1,1233.4 2061.8,1237.7 2062.4,1242.4 2063.1,1246.4 2063.7,1249.2 2064.4,1250.2 2065.1,1249.9 2065.7,1249.0 2066.4,1248.4 2067.0,1248.9 2067.7,1250.8 2068.3,1253.8 2069.0,1257.2 2069.7,1260.0 2070.3,1261.4 2071.0,1261.2 2071.6,1259.5 2072.3,1257.3 2072.9,1255.3 2073.6,1254.5 2074.3,1255.0 2074.9,1256.7 2075.6,1258.7 2076.2,1260.1 2076.9,1260.2 2077.5,1258.6 2078.2,1255.6 2078.8,1252.0 2079.5,1248.7 2080.2,1246.5 2080.8,1245.7 2081.5,1246.0 2082.1,1246.7 2082.8,1246.8 2083.4,1245.6 2084.1,1242.7 2084.8,1238.5 2085.4,1233.6 2086.1,1229.1 2086.7,1225.7 2087.4,1223.7 2088.0,1222.9 2088.7,1222.4 2089.4,1221.4 2090.0,1219.1 2090.7,1215.1 2091.3,1209.8 2092.0,1204.0 2092.6,1198.5 2093.3,1194.1 2094.0,1191.2 2094.6,1189.5 2095.3,1188.2 2095.9,1186.3 2096.6,1183.2 2097.2,1178.5 2097.9,1172.5 2098.6,1165.9 2099.2,1159.8 2099.9,1154.8 2100.5,1151.4 2101.2,1149.1 2101.8,1147.3 2102.5,1145.1 2103.1,1141.5 2103.8,1136.5 2104.5,1130.1 2105.1,1123.3 2105.8,1116.9 2106.4,1111.8 2107.1,1108.1 2107.7,1105.8 2108.4,1103.9 2109.1,1101.6 2109.7,1098.1 2110.4,1093.1 2111.0,1086.9 2111.7,1080.2 2112.3,1074.0 2113.0,1069.1 2113.7,1065.7 2114.3,1063.7 2115.0,1062.2 2115.6,1060.3 2116.3,1057.2 2116.9,1052.6 2117.6,1046.9 2118.3,1040.8 2118.9,1035.2 2119.6,1030.9 2120.2,1028.2 2120.9,1026.9 2121.5,1026.1 2122.2,1025.0 2122.8,1022.8 2123.5,1019.1 2124.2,1014.2 2124.8,1009.0 2125.5,1004.4 2126.1,1001.1 2126.8,999.4 2127.4,999.1 2128.1,999.4 2128.8,999.4 2129.4,998.2 2130.1,995.7 2130.7,992.0 2131.4,988.0 2132.0,984.5 2132.7,982.4 2133.4,982.0 2134.0,983.0 2134.7,984.6 2135.3,985.8 2136.0,986.0 2136.6,984.7 2137.3,982.4 2138.0,979.7 2138.6,977.6 2139.3,976.9 2139.9,977.8 2140.6,980.1 2141.2,983.0 2141.9,985.7 2142.5,987.2 2143.2,987.3 2143.9,986.4 2144.5,985.0 2145.2,984.3 2145.8,984.9 2146.5,987.1 2147.1,990.8 2147.8,995.0 2148.5,999.0 2149.1,1001.8 2149.8,1003.2 2150.4,1003.5 2151.1,1003.4 2151.7,1003.9 2152.4,1005.7 2153.1,1009.1 2153.7,1013.9 2154.4,1019.3 2155.0,1024.4 2155.7,1028.3 2156.3,1030.8 2157.0,1032.1 2157.7,1033.0 2158.3,1034.5 2159.0,1037.3 2159.6,1041.6 2160.3,1047.3 2160.9,1053.6 2161.6,1059.5 2162.3,1064.2 2162.9,1067.4 2163.6,1069.4 2164.2,1071.0 2164.9,1073.1 2165.5,1076.5 2166.2,1081.4 2166.8,1087.7 2167.5,1094.4 2168.2,1100.7 2168.8,1105.9 2169.5,1109.4 2170.1,1111.8 2170.8,1113.7 2171.4,1116.0 2172.1,1119.6 2172.8,1124.7 2173.4,1131.0 2174.1,1137.8 2174.7,1144.2 2175.4,1149.3 2176.0,1152.8 2176.7,1155.1 2177.4,1156.8 2178.0,1159.0 2178.7,1162.3 2179.3,1167.1 2180.0,1173.1 2180.6,1179.6 2181.3,1185.6 2182.0,1190.2 2182.6,1193.3 2183.3,1195.0 2183.9,1196.2 2184.6,1197.7 2185.2,1200.4 2185.9,1204.6 2186.5,1209.9 2187.2,1215.6 2187.9,1220.8 2188.5,1224.6 2189.2,1226.8 2189.8,1227.7 2190.5,1227.9 2191.1,1228.6 2191.8,1230.3 2192.5,1233.4 2193.1,1237.7 2193.8,1242.4 2194.4,1246.4 2195.1,1249.2 2195.7,1250.2 2196.4,1249.9 2197.1,1249.0 2197.7,1248.4 2198.4,1248.9 2199.0,1250.8 2199.7,1253.8 2200.3,1257.2 2201.0,1260.0 2201.7,1261.4 2202.3,1261.2 2203.0,1259.5 2203.6,1257.3 2204.3,1255.3 2204.9,1254.5 2205.6,1255.0 2206.2,1256.7 2206.9,1258.7 2207.6,1260.1 2208.2,1260.2 2208.9,1258.6 2209.5,1255.6 2210.2,1252.0 2210.8,1248.7 2211.5,1246.5 2212.2,1245.7 2212.8,1246.0 2213.5,1246.7 2214.1,1246.8 2214.8,1245.6 2215.4,1242.7 2216.1,1238.5 2216.8,1233.6 2217.4,1229.1 2218.1,1225.7 2218.7,1223.7 2219.4,1222.9 2220.0,1222.4 2220.7,1221.4 2221.4,1219.1 2222.0,1215.1 2222.7,1209.8 2223.3,1204.0 2224.0,1198.5 2224.6,1194.1 2225.3,1191.2 2226.0,1189.5 2226.6,1188.2 2227.3,1186.3 2227.9,1183.2 2228.6,1178.5 2229.2,1172.5 2229.9,1165.9 2230.5,1159.8 2231.2,1154.8 2231.9,1151.4 2232.5,1149.1 2233.2,1147.3 2233.8,1145.1 2234.5,1141.5 2235.1,1136.5 2235.8,1130.1 2236.5,1123.3 2237.1,1116.9 2237.8,1111.8 2238.4,1108.1 2239.1,1105.8 2239.7,1103.9 2240.4,1101.6 2241.1,1098.1 2241.7,1093.1 2242.4,1086.9 2243.0,1080.2 2243.7,1074.0 2244.3,1069.1 2245.0,1065.7 2245.7,1063.7 2246.3,1062.2 2247.0,1060.3 2247.6,1057.2 2248.3,1052.6 2248.9,1046.9 2249.6,1040.8 2250.2,1035.2 2250.9,1030.9 2251.6,1028.2 2252.2,1026.9 2252.9,1026.1 2253.5,1025.0 2254.2,1022.8 2254.8,1019.1 2255.5,1014.2 2256.2,1009.0 2256.8,1004.4 2257.5,1001.1 2258.1,999.4 2258.8,999.1 2259.4,999.4 2260.1,999.4 2260.8,998.2 2261.4,995.7 2262.1,992.0 2262.7,988.0 2263.4,984.5 2264.0,982.4 2264.7,982.0 2265.4,983.0 2266.0,984.6 2266.7,985.8 2267.3,986.0 2268.0,984.7 2268.6,982.4 2269.3,979.7 2269.9,977.6 2270.6,976.9 2271.3,977.8 2271.9,980.1 2272.6,983.0 2273.2,985.7 2273.9,987.2 2274.5,987.3 2275.2,986.4 2275.9,985.0 2276.5,984.3 2277.2,984.9 2277.8,987.1 2278.5,990.8 2279.1,995.0 2279.8,999.0 2280.5,1001.8 2281.1,1003.2 2281.8,1003.5 2282.4,1003.4 2283.1,1003.9 2283.7,1005.7 2284.4,1009.1 2285.1,1013.9 2285.7,1019.3 2286.4,1024.4 2287.0,1028.3 2287.7,1030.8 2288.3,1032.1 2289.0,1033.0 2289.7,1034.5 2290.3,1037.3 2291.0,1041.6 2291.6,1047.3 2292.3,1053.6 2292.9,1059.5 2293.6,1064.2 2294.2,1067.4 2294.9,1069.4 2295.6,1071.0 2296.2,1073.1 2296.9,1076.5 2297.5,1081.4 2298.2,1087.7 2298.8,1094.4 2299.5,1100.7 2300.2,1105.9 2300.8,1109.4 2301.5,1111.8 2302.1,1113.7 2302.8,1116.0 2303.4,1119.6 2304.1,1124.7 2304.8,1131.0 2305.4,1137.8 2306.1,1144.2 2306.7,1149.3 2307.4,1152.8 2308.0,1155.1 2308.7,1156.8 2309.4,1159.0 2310.0,1162.3 2310.7,1167.1 2311.3,1173.1 2312.0,1179.6 2312.6,1185.6 2313.3,1190.2 2313.9,1193.3 2314.6,1195.0 2315.3,1196.2 2315.9,1197.7 2316.6,1200.4 2317.2,1204.6 2317.9,1209.9 2318.5,1215.6 2319.2,1220.8 2319.9,1224.6 2320.5,1226.8 2321.2,1227.7 2321.8,1227.9 2322.5,1228.6 2323.1,1230.3 2323.8,1233.4 2324.5,1237.7 2325.1,1242.4 2325.8,1246.4 2326.4,1249.2 2327.1,1250.2 2327.7,1249.9 2328.4,1249.0 2329.1,1248.4 2329.7,1248.9 2330.4,1250.8 2331.0,1253.8 2331.7,1257.2 2332.3,1260.0 2333.0,1261.4 2333.6,1261.2 2334.3,1259.5 2335.0,1257.3 2335.6,1255.3 2336.3,1254.5 2336.9,1255.0 2337.6,1256.7 2338.2,1258.7 2338.9,1260.1 2339.6,1260.2 2340.2,1258.6 2340.9,1255.6 2341.5,1252.0 2342.2,1248.7 2342.8,1246.5 2343.5,1245.7 2344.2,1246.0 2344.8,1246.7 2345.5,1246.8 2346.1,1245.6 2346.8,1242.7 2347.4,1238.5 2348.1,1233.6 2348.8,1229.1 2349.4,1225.7 2350.1,1223.7 2350.7,1222.9 2351.4,1222.4 2352.0,1221.4 2352.7,1219.1 2353.4,1215.1 2354.0,1209.8 2354.7,1204.0 2355.3,1198.5 2356.0,1194.1 2356.6,1191.2 2357.3,1189.5 2357.9,1188.2 2358.6,1186.3 2359.3,1183.2 2359.9,1178.5 2360.6,1172.5 2361.2,1165.9 2361.9,1159.8 2362.5,1154.8 2363.2,1151.4 2363.9,1149.1 2364.5,1147.3 2365.2,1145.1 2365.8,1141.5 2366.5,1136.5 2367.1,1130.1 2367.8,1123.3 2368.5,1116.9 2369.1,1111.8 2369.8,1108.1 2370.4,1105.8 2371.1,1103.9 2371.7,1101.6 2372.4,1098.1 2373.1,1093.1 2373.7,1086.9 2374.4,1080.2 2375.0,1074.0 2375.7,1069.1 2376.3,1065.7 2377.0,1063.7 2377.6,1062.2 2378.3,1060.3 2379.0,1057.2 2379.6,1052.6 2380.3,1046.9 2380.9,1040.8 2381.6,1035.2 2382.2,1030.9 2382.9,1028.2 2383.6,1026.9 2384.2,1026.1 2384.9,1025.0 2385.5,1022.8 2386.2,1019.1 2386.8,1014.2 2387.5,1009.0 2388.2,1004.4 2388.8,1001.1 2389.5,999.4 2390.1,999.1 2390.8,999.4 2391.4,999.4 2392.1,998.2 2392.8,995.7 2393.4,992.0 2394.1,988.0 2394.7,984.5 2395.4,982.4 2396.0,982.0 2396.7,983.0 2397.3,984.6 2398.0,985.8 2398.7,986.0 2399.3,984.7 2400.0,982.4 2400.6,979.7 2401.3,977.6 2401.9,976.9 2402.6,977.8 2403.3,980.1 2403.9,983.0 2404.6,985.7 2405.2,987.2 2405.9,987.3 2406.5,986.4 2407.2,985.0 2407.9,984.3 2408.5,984.9 2409.2,987.1 2409.8,990.8 2410.5,995.0 2411.1,999.0 2411.8,1001.8 2412.5,1003.2 2413.1,1003.5 2413.8,1003.4 2414.4,1003.9 2415.1,1005.7 2415.7,1009.1 2416.4,1013.9 2417.0,1019.3 2417.7,1024.4 2418.4,1028.3 2419.0,1030.8 2419.7,1032.1 2420.3,1033.0 2421.0,1034.5 2421.6,1037.3 2422.3,1041.6 2423.0,1047.3 2423.6,1053.6 2424.3,1059.5 2424.9,1064.2 2425.6,1067.4 2426.2,1069.4 2426.9,1071.0 2427.6,1073.1 2428.2,1076.5 2428.9,1081.4 2429.5,1087.7 2430.2,1094.4 2430.8,1100.7 2431.5,1105.9 2432.2,1109.4 2432.8,1111.8 2433.5,1113.7 2434.1,1116.0 2434.8,1119.6 2435.4,1124.7 2436.1,1131.0 2436.8,1137.8 2437.4,1144.2 2438.1,1149.3 2438.7,1152.8 2439.4,1155.1 2440.0,1156.8 2440.7,1159.0 2441.3,1162.3 2442.0,1167.1 2442.7,1173.1 2443.3,1179.6 2444.0,1185.6 2444.6,1190.2 2445.3,1193.3 2445.9,1195.0 2446.6,1196.2 2447.3,1197.7 2447.9,1200.4 2448.6,1204.6 2449.2,1209.9 2449.9,1215.6 2450.5,1220.8 2451.2,1224.6 2451.9,1226.8 2452.5,1227.7 2453.2,1227.9 2453.8,1228.6 2454.5,1230.3 2455.1,1233.4 2455.8,1237.7 2456.5,1242.4 2457.1,1246.4 2457.8,1249.2 2458.4,1250.2 2459.1,1249.9 2459.7,1249.0 2460.4,1248.4 2461.0,1248.9 2461.7,1250.8 2462.4,1253.8 2463.0,1257.2 2463.7,1260.0 2464.3,1261.4 2465.0,1261.2 2465.6,1259.5 2466.3,1257.3 2467.0,1255.3 2467.6,1254.5 2468.3,1255.0 2468.9,1256.7 2469.6,1258.7 2470.2,1260.1 2470.9,1260.2 2471.6,1258.6 2472.2,1255.6 2472.9,1252.0 2473.5,1248.7 2474.2,1246.5 2474.8,1245.7 2475.5,1246.0 2476.2,1246.7 2476.8,1246.8 2477.5,1245.6 2478.1,1242.7 2478.8,1238.5 2479.4,1233.6 2480.1,1229.1 2480.7,1225.7 2481.4,1223.7 2482.1,1222.9 2482.7,1222.4 2483.4,1221.4 2484.0,1219.1 2484.7,1215.1 2485.3,1209.8 2486.0,1204.0 2486.7,1198.5 2487.3,1194.1 2488.0,1191.2 2488.6,1189.5 2489.3,1188.2 2489.9,1186.3 2490.6,1183.2 2491.3,1178.5 2491.9,1172.5 2492.6,1165.9 2493.2,1159.8 2493.9,1154.8 2494.5,1151.4 2495.2,1149.1 2495.9,1147.3 2496.5,1145.1 2497.2,1141.5 2497.8,1136.5 2498.5,1130.1 2499.1,1123.3 2499.8,1116.9 2500.5,1111.8 2501.1,1108.1 2501.8,1105.8 2502.4,1103.9 2503.1,1101.6 2503.7,1098.1 2504.4,1093.1 2505.0,1086.9 2505.7,1080.2 2506.4,1074.0 2507.0,1069.1 2507.7,1065.7 2508.3,1063.7 2509.0,1062.2 2509.6,1060.3 2510.3,1057.2 2511.0,1052.6 2511.6,1046.9 2512.3,1040.8 2512.9,1035.2 2513.6,1030.9 2514.2,1028.2 2514.9,1026.9 2515.6,1026.1 2516.2,1025.0 2516.9,1022.8 2517.5,1019.1 2518.2,1014.2 2518.8,1009.0 2519.5,1004.4 2520.2,1001.1 2520.8,999.4 2521.5,999.1 2522.1,999.4 2522.8,999.4 2523.4,998.2 2524.1,995.7 2524.7,992.0 2525.4,988.0 2526.1,984.5 2526.7,982.4 2527.4,982.0 2528.0,983.0 2528.7,984.6 2529.3,985.8 2530.0,986.0 2530.7,984.7 2531.3,982.4 2532.0,979.7 2532.6,977.6 2533.3,976.9 2533.9,977.8 2534.6,980.1 2535.3,983.0 2535.9,985.7 2536.6,987.2 2537.2,987.3 2537.9,986.4 2538.5,985.0 2539.2,984.3 2539.9,984.9 2540.5,987.1 2541.2,990.8 2541.8,995.0 2542.5,999.0 2543.1,1001.8 2543.8,1003.2 2544.4,1003.5 2545.1,1003.4 2545.8,1003.9 2546.4,1005.7 2547.1,1009.1 2547.7,1013.9 2548.4,1019.3 2549.0,1024.4 2549.7,1028.3 2550.4,1030.8 2551.0,1032.1 2551.7,1033.0 2552.3,1034.5 2553.0,1037.3 2553.6,1041.6 2554.3,1047.3 2555.0,1053.6 2555.6,1059.5 2556.3,1064.2 2556.9,1067.4 2557.6,1069.4 2558.2,1071.0 2558.9,1073.1 2559.6,1076.5 2560.2,1081.4 2560.9,1087.7 2561.5,1094.4 2562.2,1100.7 2562.8,1105.9 2563.5,1109.4 2564.2,1111.8 2564.8,1113.7 2565.5,1116.0 2566.1,1119.6 2566.8,1124.7 2567.4,1131.0 2568.1,1137.8 2568.7,1144.2 2569.4,1149.3 2570.1,1152.8 2570.7,1155.1 2571.4,1156.8 2572.0,1159.0 2572.7,1162.3 2573.3,1167.1 2574.0,1173.1 2574.7,1179.6 2575.3,1185.6 2576.0,1190.2 2576.6,1193.3 2577.3,1195.0 2577.9,1196.2 2578.6,1197.7 2579.3,1200.4 2579.9,1204.6 2580.6,1209.9 2581.2,1215.6 2581.9,1220.8 2582.5,1224.6 2583.2,1226.8 2583.9,1227.7 2584.5,1227.9 2585.2,1228.6 2585.8,1230.3 2586.5,1233.4 2587.1,1237.7 2587.8,1242.4 2588.4,1246.4 2589.1,1249.2 2589.8,1250.2 2590.4,1249.9 2591.1,1249.0 2591.7,1248.4 2592.4,1248.9 2593.0,1250.8 2593.7,1253.8 2594.4,1257.2 2595.0,1260.0 2595.7,1261.4 2596.3,1261.2 2597.0,1259.5 2597.6,1257.3 2598.3,1255.3 2599.0,1254.5 2599.6,1255.0 2600.3,1256.7 2600.9,1258.7 2601.6,1260.1 2602.2,1260.2 2602.9,1258.6 2603.6,1255.6 2604.2,1252.0 2604.9,1248.7 2605.5,1246.5 2606.2,1245.7 2606.8,1246.0 2607.5,1246.7 2608.1,1246.8 2608.8,1245.6 2609.5,1242.7 2610.1,1238.5 2610.8,1233.6 2611.4,1229.1 2612.1,1225.7 2612.7,1223.7 2613.4,1222.9 2614.1,1222.4 2614.7,1221.4 2615.4,1219.1 2616.0,1215.1 2616.7,1209.8 2617.3,1204.0 2618.0,1198.5 2618.7,1194.1 2619.3,1191.2 2620.0,1189.5 2620.6,1188.2 2621.3,1186.3 2621.9,1183.2 2622.6,1178.5 2623.3,1172.5 2623.9,1165.9 2624.6,1159.8 2625.2,1154.8 2625.9,1151.4 2626.5,1149.1 2627.2,1147.3 2627.9,1145.1 2628.5,1141.5 2629.2,1136.5 2629.8,1130.1 2630.5,1123.3 2631.1,1116.9 2631.8,1111.8 2632.4,1108.1 2633.1,1105.8 2633.8,1103.9 2634.4,1101.6 2635.1,1098.1 2635.7,1093.1 2636.4,1086.9 2637.0,1080.2 2637.7,1074.0 2638.4,1069.1 2639.0,1065.7 2639.7,1063.7 2640.3,1062.2 2641.0,1060.3 2641.6,1057.2 2642.3,1052.6 2643.0,1046.9 2643.6,1040.8 2644.3,1035.2 2644.9,1030.9 2645.6,1028.2 2646.2,1026.9 2646.9,1026.1 2647.6,1025.0 2648.2,1022.8 2648.9,1019.1 2649.5,1014.2 2650.2,1009.0 2650.8,1004.4 2651.5,1001.1 2652.1,999.4 2652.8,999.1 2653.5,999.4 2654.1,999.4 2654.8,998.2 2655.4,995.7 2656.1,992.0 2656.7,988.0 2657.4,984.5 2658.1,982.4 2658.7,982.0 2659.4,983.0 2660.0,984.6 2660.7,985.8 2661.3,986.0 2662.0,984.7 2662.7,982.4 2663.3,979.7 2664.0,977.6 2664.6,976.9 2665.3,977.8 2665.9,980.1 2666.6,983.0 2667.3,985.7 2667.9,987.2 2668.6,987.3 2669.2,986.4 2669.9,985.0 2670.5,984.3 2671.2,984.9 2671.8,987.1 2672.5,990.8 2673.2,995.0 2673.8,999.0 2674.5,1001.8 2675.1,1003.2 2675.8,1003.5 2676.4,1003.4 2677.1,1003.9 2677.8,1005.7 2678.4,1009.1 2679.1,1013.9 2679.7,1019.3 2680.4,1024.4 2681.0,1028.3 2681.7,1030.8 2682.4,1032.1 2683.0,1033.0 2683.7,1034.5 2684.3,1037.3 2685.0,1041.6 2685.6,1047.3 2686.3,1053.6 2687.0,1059.5 2687.6,1064.2 2688.3,1067.4 2688.9,1069.4 2689.6,1071.0 2690.2,1073.1 2690.9,1076.5 2691.6,1081.4 2692.2,1087.7 2692.9,1094.4 2693.5,1100.7 2694.2,1105.9 2694.8,1109.4 2695.5,1111.8 2696.1,1113.7 2696.8,1116.0 2697.5,1119.6 2698.1,1124.7 2698.8,1131.0 2699.4,1137.8 2700.1,1144.2 2700.7,1149.3 2701.4,1152.8 2702.1,1155.1 2702.7,1156.8 2703.4,1159.0 2704.0,1162.3 2704.7,1167.1 2705.3,1173.1 2706.0,1179.6 2706.7,1185.6 2707.3,1190.2 2708.0,1193.3 2708.6,1195.0 2709.3,1196.2 2709.9,1197.7 2710.6,1200.4 2711.3,1204.6 2711.9,1209.9 2712.6,1215.6 2713.2,1220.8 2713.9,1224.6 2714.5,1226.8 2715.2,1227.7 2715.8,1227.9 2716.5,1228.6 2717.2,1230.3 2717.8,1233.4 2718.5,1237.7 2719.1,1242.4 2719.8,1246.4 2720.4,1249.2 2721.1,1250.2 2721.8,1249.9 2722.4,1249.0 2723.1,1248.4 2723.7,1248.9 2724.4,1250.8 2725.0,1253.8 2725.7,1257.2 2726.4,1260.0 2727.0,1261.4 2727.7,1261.2 2728.3,1259.5 2729.0,1257.3 2729.6,1255.3 2730.3,1254.5 2731.0,1255.0 2731.6,1256.7 2732.3,1258.7 2732.9,1260.1 2733.6,1260.2 2734.2,1258.6 2734.9,1255.6 2735.5,1252.0 2736.2,1248.7 2736.9,1246.5 2737.5,1245.7 2738.2,1246.0 2738.8,1246.7 2739.5,1246.8 2740.1,1245.6 2740.8,1242.7 2741.5,1238.5 2742.1,1233.6 2742.8,1229.1 2743.4,1225.7 2744.1,1223.7 2744.7,1222.9 2745.4,1222.4 2746.1,1221.4 2746.7,1219.1 2747.4,1215.1 2748.0,1209.8 2748.7,1204.0 2749.3,1198.5 2750.0,1194.1 2750.7,1191.2 2751.3,1189.5 2752.0,1188.2 2752.6,1186.3 2753.3,1183.2 2753.9,1178.5 2754.6,1172.5 2755.3,1165.9 2755.9,1159.8 2756.6,1154.8 2757.2,1151.4 2757.9,1149.1 2758.5,1147.3 2759.2,1145.1 2759.8,1141.5 2760.5,1136.5 2761.2,1130.1 2761.8,1123.3 2762.5,1116.9 2763.1,1111.8 2763.8,1108.1 2764.4,1105.8 2765.1,1103.9 2765.8,1101.6 2766.4,1098.1 2767.1,1093.1 2767.7,1086.9 2768.4,1080.2 2769.0,1074.0 2769.7,1069.1 2770.4,1065.7 2771.0,1063.7 2771.7,1062.2 2772.3,1060.3 2773.0,1057.2 2773.6,1052.6 2774.3,1046.9 2775.0,1040.8 2775.6,1035.2 2776.3,1030.9 2776.9,1028.2 2777.6,1026.9 2778.2,1026.1 2778.9,1025.0 2779.5,1022.8 2780.2,1019.1 2780.9,1014.2 2781.5,1009.0 2782.2,1004.4 2782.8,1001.1 2783.5,999.4 2784.1,999.1 2784.8,999.4 2785.5,999.4 2786.1,998.2 2786.8,995.7 2787.4,992.0 2788.1,988.0 2788.7,984.5 2789.4,982.4 2790.1,982.0 2790.7,983.0 2791.4,984.6 2792.0,985.8 2792.7,986.0 2793.3,984.7 2794.0,982.4 2794.7,979.7 2795.3,977.6 2796.0,976.9 2796.6,977.8 2797.3,980.1 2797.9,983.0 2798.6,985.7 2799.2,987.2 2799.9,987.3 2800.6,986.4 2801.2,985.0 2801.9,984.3 2802.5,984.9 2803.2,987.1 2803.8,990.8 2804.5,995.0 2805.2,999.0 2805.8,1001.8 2806.5,1003.2 2807.1,1003.5 2807.8,1003.4 2808.4,1003.9 2809.1,1005.7 2809.8,1009.1 2810.4,1013.9 2811.1,1019.3 2811.7,1024.4 2812.4,1028.3 2813.0,1030.8 2813.7,1032.1 2814.4,1033.0 2815.0,1034.5 2815.7,1037.3 2816.3,1041.6 2817.0,1047.3 2817.6,1053.6 2818.3,1059.5 2819.0,1064.2 2819.6,1067.4 2820.3,1069.4 2820.9,1071.0 2821.6,1073.1 2822.2,1076.5 2822.9,1081.4 2823.5,1087.7 2824.2,1094.4 2824.9,1100.7 2825.5,1105.9 2826.2,1109.4 2826.8,1111.8 2827.5,1113.7 2828.1,1116.0 2828.8,1119.6 2829.5,1124.7 2830.1,1131.0 2830.8,1137.8 2831.4,1144.2 2832.1,1149.3 2832.7,1152.8 2833.4,1155.1 2834.1,1156.8 2834.7,1159.0 2835.4,1162.3 2836.0,1167.1 2836.7,1173.1 2837.3,1179.6 2838.0,1185.6 2838.7,1190.2 2839.3,1193.3 2840.0,1195.0 2840.6,1196.2 2841.3,1197.7 2841.9,1200.4 2842.6,1204.6 2843.2,1209.9 2843.9,1215.6 2844.6,1220.8 2845.2,1224.6 2845.9,1226.8 2846.5,1227.7 2847.2,1227.9 2847.8,1228.6 2848.5,1230.3 2849.2,1233.4 2849.8,1237.7 2850.5,1242.4 2851.1,1246.4 2851.8,1249.2 2852.4,1250.2"/>
<rect x="77.5" y="141.5" width="109.5" height="32" fill="#121212" stroke="#f2f2f2" stroke-width="1.3"/>
<line x1="85" y1="157.5" x2="133" y2="157.5" stroke="#f0d85a" stroke-width="2.6"/>
<text x="135.8" y="161.8" font-size="17" fill="#f4f4f4" stroke="#f4f4f4" stroke-width="0.45" textLength="46" lengthAdjust="spacingAndGlyphs">filterIn</text>
<rect x="71.5" y="817.5" width="122" height="32" fill="#121212" stroke="#f2f2f2" stroke-width="1.3"/>
<line x1="79" y1="833.6" x2="127" y2="833.6" stroke="#f0d85a" stroke-width="2.6"/>
<text x="129.8" y="837.8" font-size="17" fill="#f4f4f4" stroke="#f4f4f4" stroke-width="0.45" textLength="60.5" lengthAdjust="spacingAndGlyphs">filterOut</text>
<text x="13.4" y="1467.8" font-size="17.6" fill="#1f1f1f" textLength="51.5" lengthAdjust="spacingAndGlyphs">Ready</text>
<text x="2668.5" y="1467.6" font-size="17.6" fill="#1f1f1f" textLength="114" lengthAdjust="spacingAndGlyphs">Sample based</text>
<text x="2801" y="1467.6" font-size="17.6" fill="#1f1f1f" textLength="76" lengthAdjust="spacingAndGlyphs">T=0.0010</text>
</svg></body></html>
